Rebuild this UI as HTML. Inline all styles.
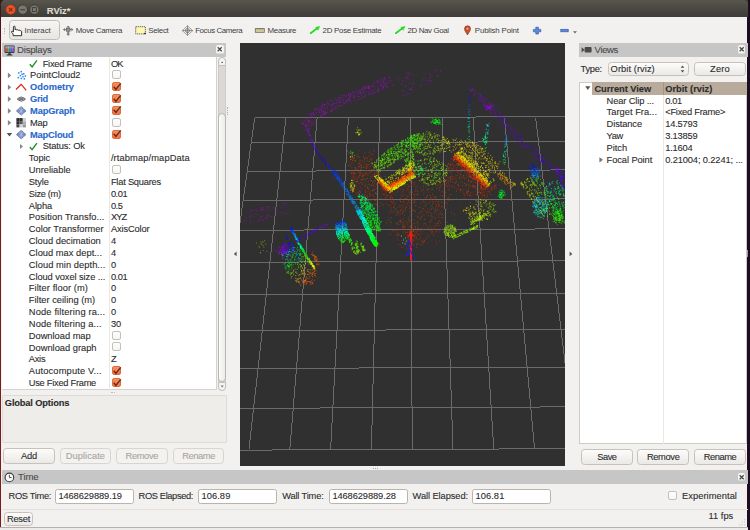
<!DOCTYPE html><html><head><meta charset="utf-8"><title>RViz*</title><style>
*{box-sizing:border-box;margin:0;padding:0}
html,body{width:750px;height:530px;overflow:hidden;background:#f2f1f0}
body{font-family:"Liberation Sans",sans-serif;font-size:9.3px;color:#2b2b2b;position:relative}
.a{position:absolute}
.t{position:absolute;white-space:nowrap;line-height:12px;height:12px;-webkit-text-stroke:0.1px currentColor}
.tb{color:#404040;-webkit-text-stroke:0}
.hdr{position:absolute;background:#c6c6c6;height:13.5px}
.hd{color:#4a4a4a}
.btn{position:absolute;border:1px solid #c6c1ba;border-radius:3.5px;background:linear-gradient(#fcfcfb,#ebe9e6)}
.btn.dis{background:#f3f2f0;border-color:#d8d4ce}
.dt{color:#a8a5a0}
.inp{position:absolute;border:1px solid #b9b4ad;border-radius:2.5px;background:#fff}
.cb{position:absolute;width:8.9px;height:9px;border:1px solid #c4c0ba;border-radius:2px;background:linear-gradient(#fff,#f6f5f3)}
.cb.on{border-color:#de6c3c;background:linear-gradient(#f39063,#ec7441)}
.b{font-weight:bold}
.blue{color:#2869cc;font-weight:bold}
</style></head><body>
<div class="a" style="left:0;top:0;width:1.4px;height:530px;background:linear-gradient(#4c1012,#7a1c1c 30%)"></div>
<div class="a" style="left:747.4px;top:0;width:3px;height:530px;background:#1c0d22"></div>
<div class="a" style="left:0;top:527.3px;width:748px;height:3px;background:#ecebea;border-top:1px solid #b4b2ae"></div>
<div class="a" style="left:0;top:0;width:748px;height:5px;background:#3b3833"></div>
<div class="a" style="left:0;top:0;width:3px;height:4px;background:#3a1515"></div>
<div class="a" style="left:1px;top:0.4px;width:746.8px;height:16.7px;background:linear-gradient(#57554c,#3d3c37);border-radius:4px 4px 0 0"></div>
<svg class="a" style="left:0;top:0" width="60" height="18" viewBox="0 0 60 18"><circle cx="10.7" cy="9.6" r="4.9" fill="#e9542a" stroke="#8c3317" stroke-width="0.7"/><path d="M8.9 7.8l3.6 3.6M12.5 7.8l-3.6 3.6" stroke="#7a2a10" stroke-width="1.1"/><circle cx="22.7" cy="9.6" r="4.7" fill="#7a776f" stroke="#33322e" stroke-width="0.7"/><path d="M20.4 9.7h4.6" stroke="#3e3d39" stroke-width="1.1"/><circle cx="34.4" cy="9.6" r="4.7" fill="#7a776f" stroke="#33322e" stroke-width="0.7"/><rect x="32.4" y="7.6" width="4" height="4" fill="none" stroke="#3e3d39" stroke-width="0.9"/></svg>
<div class="t b" style="left:46.8px;top:4.60px;font-size:9.4px;letter-spacing:-0.005px;color:#dfdbd2;">RViz*</div>
<div class="a" style="left:4.2px;top:27.6px;width:2px;height:6px;border-left:1px dotted #bdb9b3"></div>
<div class="btn" style="left:9.2px;top:20.3px;width:50.6px;height:20.2px;border-color:#c2beb7;background:linear-gradient(#f6f5f3,#e8e6e2)"></div>
<div class="t tb" style="left:24.6px;top:24.70px;font-size:7.9px;letter-spacing:-0.016px;">Interact</div>
<div class="t tb" style="left:75.8px;top:24.70px;font-size:7.9px;letter-spacing:-0.297px;">Move Camera</div>
<div class="t tb" style="left:148.2px;top:24.70px;font-size:7.9px;letter-spacing:-0.273px;">Select</div>
<div class="t tb" style="left:195.2px;top:24.70px;font-size:7.9px;letter-spacing:-0.396px;">Focus Camera</div>
<div class="t tb" style="left:267.6px;top:24.70px;font-size:7.9px;letter-spacing:-0.300px;">Measure</div>
<div class="t tb" style="left:322.6px;top:24.70px;font-size:7.9px;letter-spacing:-0.272px;">2D Pose Estimate</div>
<div class="t tb" style="left:407.6px;top:24.70px;font-size:7.9px;letter-spacing:-0.379px;">2D Nav Goal</div>
<div class="t tb" style="left:474.8px;top:24.70px;font-size:7.9px;letter-spacing:-0.159px;">Publish Point</div>
<svg class="a" style="left:0;top:18px" width="600" height="25" viewBox="0 18 600 25">
<!-- hand -->
<path d="M13.4 27c0-1.100 1.700-1.100 1.700 0v3c.2-.7 1.600-.7 1.700.1.200-.6 1.600-.5 1.700.3.300-.5 1.500-.4 1.600.5.400-.4 1.500-.2 1.500.8v4h-8.500v-1.700l-1.500-1.700c-.5-.9.500-1.600 1.100-1l.7.800z" fill="#fff" stroke="#1c1c1c" stroke-width="0.9" stroke-linejoin="round"/>
<!-- move camera -->
<g fill="none" stroke="#6a6a6a" stroke-width="0.9">
<path d="M68.200 26.200v9M63.600 29.600h9.200"/>
<path d="M66.800 27.600l1.400-1.600 1.400 1.600M66.800 33.800l1.400 1.600 1.400-1.600M65 28.400l-1.500 1.200 1.500 1.200M71.400 28.400l1.500 1.200-1.500 1.200"/>
<rect x="66.400" y="28.200" width="3.600" height="3" fill="#9a9a9a" stroke="#5a5a5a" stroke-width="0.7"/>
<path d="M67 33h2.400" stroke="#5a5a5a"/>
</g>
<!-- select -->
<rect x="135.700" y="26.700" width="9.700" height="7.200" fill="#fdf6b4" stroke="#4a4a3a" stroke-width="0.8" stroke-dasharray="1.300 0.700"/>
<rect x="144.200" y="32.800" width="1.600" height="1.400" fill="#222"/>
<!-- focus camera -->
<g fill="none" stroke="#777" stroke-width="0.8">
<path d="M187.500 25.800l5.200 4.800-5.200 4.800-5.200-4.800z" stroke="#8a8a8a"/>
<path d="M187.500 25.600v10M182 30.600h11"/>
<circle cx="187.500" cy="30.600" r="2" stroke="#666"/>
</g>
<!-- measure -->
<rect x="255.300" y="28.600" width="9" height="3.700" fill="#d9d2a4" stroke="#6b6858" stroke-width="0.8"/>
<path d="M257.200 28.800v1.600M259 28.800v1.600M260.800 28.800v1.600M262.600 28.800v1.600" stroke="#6b6858" stroke-width="0.5"/>
<!-- green arrows -->
<g stroke="#1fd81f" stroke-width="1.700" fill="#1fd81f" stroke-linecap="round">
<path d="M310.600 33.200l6.400-4.800"/><path d="M319.400 26.600l-3.600.8 2 2.600z" stroke-width="0.600"/>
<path d="M395.800 33.200l6.400-4.800"/><path d="M404.600 26.600l-3.600.8 2 2.600z" stroke-width="0.600"/>
</g>
<!-- publish point pin -->
<path d="M467.500 35c-1.200-2.600-3-4-3-6.200a3 3 0 0 1 6 0c0 2.200-1.800 3.600-3 6.200z" fill="#c8502c" stroke="#7a2c14" stroke-width="0.600"/>
<circle cx="467.500" cy="28.700" r="1.100" fill="#f0a080"/>
<!-- plus -->
<path d="M535.800 27.200h2.600v2.200h2.400v2.400h-2.400v2.200h-2.600v-2.200h-2.400v-2.400h2.400z" fill="#5b8ad6" stroke="#2f5fb0" stroke-width="0.700"/>
<!-- minus -->
<rect x="560.800" y="29.300" width="7.400" height="2.500" fill="#5b8ad6" stroke="#2f5fb0" stroke-width="0.700"/>
<path d="M573 31.200h4l-2 2.400z" fill="#6a6a6a"/>
</svg>

<div class="hdr" style="left:2px;top:43px;width:224px"></div>
<div class="t hd" style="left:17.0px;top:43.80px;font-size:9.6px;letter-spacing:-0.208px;">Displays</div>
<svg class="a" style="left:3.6px;top:45.2px" width="11" height="11" viewBox="0 0 11 11">
<rect x="0.5" y="0.5" width="10" height="7.4" rx="0.8" fill="#2e2e2e"/>
<rect x="1.2" y="1.2" width="2.2" height="6" fill="#d6505a"/><rect x="3.4" y="1.2" width="2.2" height="6" fill="#58b868"/><rect x="5.6" y="1.2" width="2.200" height="6" fill="#5878d6"/><rect x="7.800" y="1.2" width="2" height="6" fill="#9a58d0"/>
<rect x="1.2" y="1.2" width="8.6" height="2.2" fill="#fff" fill-opacity="0.28"/>
<path d="M4.2 8.2h2.6v1.200H4.200zM2.600 9.600h5.800v1H2.600z" fill="#2e2e2e"/></svg>

<div class="a" style="left:216.4px;top:45.3px;width:7.4px;height:8.8px;background:#f5f4f3;border-radius:2px;border-bottom:1px solid #dddbd7"></div>
<svg class="a" style="left:216.4px;top:45.3px" width="7.4" height="9" viewBox="0 0 7.4 9"><path d="M1.700 2.200l4 4M5.700 2.200l-4 4" stroke="#484848" stroke-width="1.25"/></svg>
<div class="a" style="left:2px;top:57px;width:215px;height:333px;background:#fff;border-right:1px solid #d5d2cd;border-bottom:1px solid #d5d2cd"></div>
<div class="a" style="left:109px;top:57px;width:1px;height:332.5px;background:#e9e8e5"></div>
<div class="a" style="left:218px;top:57.2px;width:8.2px;height:333.6px;border:1px solid #cfccc8;border-radius:4.2px;background:#dad9d7"></div>
<div class="a" style="left:218px;top:57.2px;width:8.2px;height:9px;border:1px solid #c3c0bb;border-radius:4.2px 4.2px 0 0;background:#f4f3f2"></div>
<div class="a" style="left:218px;top:113.4px;width:8.2px;height:268.4px;border:1px solid #b9b6b1;border-radius:4.2px;background:linear-gradient(90deg,#fbfbfa,#ecebe9)"></div>
<div class="a" style="left:218px;top:381.6px;width:8.2px;height:9.2px;border:1px solid #c3c0bb;border-radius:0 0 4.2px 4.2px;background:#f4f3f2"></div>
<svg class="a" style="left:218px;top:57px" width="9" height="335" viewBox="0 0 9 335"><path d="M3.4 5.4h1.6" stroke="#555" stroke-width="1"/><path d="M2.6 328.6l1.6 1.8 1.6-1.8z" fill="#777"/></svg>
<div class="t " style="left:42.7px;top:57.60px;letter-spacing:-0.263px;">Fixed Frame</div>
<div class="t " style="left:110.9px;top:57.60px;letter-spacing:-0.869px;">OK</div>
<div class="t " style="left:30.1px;top:69.43px;letter-spacing:-0.023px;">PointCloud2</div>
<div class="cb " style="left:112.2px;top:70.33px"></div>
<div class="t blue" style="left:30.1px;top:81.27px;letter-spacing:-0.015px;">Odometry</div>
<div class="cb on" style="left:112.2px;top:82.17px"></div>
<svg class="a" style="left:112.2px;top:81.7px" width="11" height="10" viewBox="0 0 11 10"><path d="M1.8 4.8l2.1 2.6 4.8-6" fill="none" stroke="#662c16" stroke-width="1.4"/></svg>
<div class="t blue" style="left:30.1px;top:93.10px;letter-spacing:-0.306px;">Grid</div>
<div class="cb on" style="left:112.2px;top:94.00px"></div>
<svg class="a" style="left:112.2px;top:93.5px" width="11" height="10" viewBox="0 0 11 10"><path d="M1.8 4.8l2.1 2.6 4.8-6" fill="none" stroke="#662c16" stroke-width="1.4"/></svg>
<div class="t blue" style="left:30.1px;top:104.93px;letter-spacing:-0.173px;">MapGraph</div>
<div class="cb on" style="left:112.2px;top:105.83px"></div>
<svg class="a" style="left:112.2px;top:105.3px" width="11" height="10" viewBox="0 0 11 10"><path d="M1.8 4.8l2.1 2.6 4.8-6" fill="none" stroke="#662c16" stroke-width="1.4"/></svg>
<div class="t " style="left:30.1px;top:116.77px;letter-spacing:-0.231px;">Map</div>
<div class="cb " style="left:112.2px;top:117.67px"></div>
<div class="t blue" style="left:30.1px;top:128.60px;letter-spacing:-0.217px;">MapCloud</div>
<div class="cb on" style="left:112.2px;top:129.50px"></div>
<svg class="a" style="left:112.2px;top:129.0px" width="11" height="10" viewBox="0 0 11 10"><path d="M1.8 4.8l2.1 2.6 4.8-6" fill="none" stroke="#662c16" stroke-width="1.4"/></svg>
<div class="t " style="left:42.7px;top:140.43px;letter-spacing:-0.131px;">Status: Ok</div>
<div class="t " style="left:28.8px;top:152.26px;letter-spacing:-0.081px;">Topic</div>
<div class="t " style="left:110.9px;top:152.26px;letter-spacing:0.119px;">/rtabmap/mapData</div>
<div class="t " style="left:28.8px;top:164.10px;letter-spacing:0.004px;">Unreliable</div>
<div class="cb " style="left:112.2px;top:165.00px"></div>
<div class="t " style="left:28.8px;top:175.93px;letter-spacing:-0.134px;">Style</div>
<div class="t " style="left:110.9px;top:175.93px;letter-spacing:-0.218px;">Flat Squares</div>
<div class="t " style="left:28.8px;top:187.76px;letter-spacing:-0.326px;">Size (m)</div>
<div class="t " style="left:110.9px;top:187.76px;letter-spacing:-0.452px;">0.01</div>
<div class="t " style="left:28.8px;top:199.60px;letter-spacing:-0.116px;">Alpha</div>
<div class="t " style="left:110.9px;top:199.60px;letter-spacing:-0.479px;">0.5</div>
<div class="t " style="left:28.8px;top:211.43px;letter-spacing:0.067px;">Position Transfo...</div>
<div class="t " style="left:110.9px;top:211.43px;letter-spacing:-0.865px;">XYZ</div>
<div class="t " style="left:28.8px;top:223.26px;letter-spacing:-0.013px;">Color Transformer</div>
<div class="t " style="left:110.9px;top:223.26px;letter-spacing:-0.120px;">AxisColor</div>
<div class="t " style="left:28.8px;top:235.09px;letter-spacing:0.010px;">Cloud decimation</div>
<div class="t " style="left:110.9px;top:235.09px;">4</div>
<div class="t " style="left:28.8px;top:246.93px;letter-spacing:0.025px;">Cloud max dept...</div>
<div class="t " style="left:110.9px;top:246.93px;">4</div>
<div class="t " style="left:28.8px;top:258.76px;letter-spacing:0.058px;">Cloud min depth...</div>
<div class="t " style="left:110.9px;top:258.76px;">0</div>
<div class="t " style="left:28.8px;top:270.59px;letter-spacing:-0.077px;">Cloud voxel size ...</div>
<div class="t " style="left:110.9px;top:270.59px;letter-spacing:-0.452px;">0.01</div>
<div class="t " style="left:28.8px;top:282.43px;letter-spacing:0.084px;">Filter floor (m)</div>
<div class="t " style="left:110.9px;top:282.43px;">0</div>
<div class="t " style="left:28.8px;top:294.26px;letter-spacing:0.015px;">Filter ceiling (m)</div>
<div class="t " style="left:110.9px;top:294.26px;">0</div>
<div class="t " style="left:28.8px;top:306.09px;letter-spacing:0.155px;">Node filtering ra...</div>
<div class="t " style="left:110.9px;top:306.09px;">0</div>
<div class="t " style="left:28.8px;top:317.93px;letter-spacing:0.143px;">Node filtering a...</div>
<div class="t " style="left:110.9px;top:317.93px;letter-spacing:-0.172px;">30</div>
<div class="t " style="left:28.8px;top:329.76px;letter-spacing:-0.010px;">Download map</div>
<div class="cb " style="left:112.2px;top:330.66px"></div>
<div class="t " style="left:28.8px;top:341.59px;">Download graph</div>
<div class="cb " style="left:112.2px;top:342.49px"></div>
<div class="t " style="left:28.8px;top:353.43px;letter-spacing:-0.270px;">Axis</div>
<div class="t " style="left:110.9px;top:353.43px;">Z</div>
<div class="t " style="left:28.8px;top:365.26px;letter-spacing:0.158px;">Autocompute V...</div>
<div class="cb on" style="left:112.2px;top:366.16px"></div>
<svg class="a" style="left:112.2px;top:365.7px" width="11" height="10" viewBox="0 0 11 10"><path d="M1.8 4.8l2.1 2.6 4.8-6" fill="none" stroke="#662c16" stroke-width="1.4"/></svg>
<div class="t " style="left:28.8px;top:377.09px;letter-spacing:-0.273px;">Use Fixed Frame</div>
<div class="cb on" style="left:112.2px;top:377.99px"></div>
<svg class="a" style="left:112.2px;top:377.5px" width="11" height="10" viewBox="0 0 11 10"><path d="M1.8 4.8l2.1 2.6 4.8-6" fill="none" stroke="#662c16" stroke-width="1.4"/></svg>
<svg class="a" style="left:0;top:0" width="110" height="395" viewBox="0 0 110 395">
<path d="M29.800 64.2l2.300 2.700 4.800-6.600" fill="none" stroke="#1f8f24" stroke-width="1.35"/>
<path d="M29.800 147.0l2.300 2.700 4.800-6.600" fill="none" stroke="#1f8f24" stroke-width="1.35"/>
<path d="M7.900 72.6v5.600l3.300-2.800z" fill="#858585"/>
<path d="M7.900 84.5v5.600l3.300-2.800z" fill="#858585"/>
<path d="M7.900 96.3v5.600l3.300-2.800z" fill="#858585"/>
<path d="M7.900 108.1v5.600l3.300-2.800z" fill="#858585"/>
<path d="M7.900 120.0v5.600l3.300-2.800z" fill="#858585"/>
<path d="M6.800 133.0h5.400l-2.700 3.400z" fill="#505050"/>
<path d="M20 143.9v5l3-2.500z" fill="#858585"/>
<rect x="18.0" y="72.2" width="1.5" height="1.5" fill="#2f86ea"/>
<rect x="20.5" y="70.9" width="1.5" height="1.5" fill="#2f86ea"/>
<rect x="23.0" y="73.1" width="1.5" height="1.5" fill="#2f86ea"/>
<rect x="19.6" y="74.9" width="1.5" height="1.5" fill="#2f86ea"/>
<rect x="22.2" y="75.9" width="1.5" height="1.5" fill="#2f86ea"/>
<rect x="17.6" y="76.9" width="1.5" height="1.5" fill="#2f86ea"/>
<rect x="24.6" y="75.3" width="1.5" height="1.5" fill="#2f86ea"/>
<rect x="20.6" y="77.7" width="1.5" height="1.5" fill="#2f86ea"/>
<rect x="23.6" y="78.1" width="1.5" height="1.5" fill="#2f86ea"/>
<rect x="21.4" y="73.5" width="1.5" height="1.5" fill="#2f86ea"/>
<path d="M16 89.5L21.300 84.3L26.200 90.3" fill="none" stroke="#e0241c" stroke-width="1.2" stroke-linejoin="round"/>
<ellipse cx="21.300" cy="99.1" rx="4.100" ry="2.200" fill="#8a8a8a" fill-opacity="0.6"/>
<g stroke="#4e4e4e" stroke-width="0.7" fill="none"><path d="M17.200 99.1l4.100-2.300 4.100 2.300-4.100 2.300z"/><path d="M19.200 97.9l4.100 2.300M23.300 97.9l-4.100 2.300"/></g>
<path d="M16.400 110.9l4.800-4.300 4.800 4.300-4.800 4.300z" fill="#7a90c4" stroke="#4a5e94" stroke-width="0.6"/>
<path d="M18.800 108.8l4.800 4.300M23.600 108.8l-4.800 4.300M21.200 106.7v8.400" stroke="#cbd5ec" stroke-width="0.5" fill="none"/>
<path d="M16.400 134.6l4.800-4.300 4.800 4.300-4.800 4.300z" fill="#7a90c4" stroke="#4a5e94" stroke-width="0.6"/>
<path d="M18.800 132.4l4.800 4.300M23.600 132.4l-4.800 4.300M21.200 130.4v8.400" stroke="#cbd5ec" stroke-width="0.5" fill="none"/>
<rect x="16.4" y="118.1" width="3.200" height="3.100" fill="#2a2a2a"/>
<rect x="19.6" y="118.1" width="3.200" height="3.100" fill="#2a2a2a"/>
<rect x="22.8" y="118.1" width="3.200" height="3.100" fill="#cfcfcf"/>
<rect x="16.4" y="121.2" width="3.200" height="3.100" fill="#2a2a2a"/>
<rect x="19.6" y="121.2" width="3.200" height="3.100" fill="#555"/>
<rect x="22.8" y="121.2" width="3.200" height="3.100" fill="#b0b0b0"/>
<rect x="16.4" y="124.3" width="3.200" height="3.100" fill="#444"/>
<rect x="19.6" y="124.3" width="3.200" height="3.100" fill="#d0d0d0"/>
<rect x="22.8" y="124.3" width="3.200" height="3.100" fill="#9a9a9a"/>
</svg>
<div class="a" style="left:2px;top:395.4px;width:224.6px;height:48px;background:#efedea;border:1px solid #dedbd6;border-radius:1px"></div>
<div class="t b" style="left:4.8px;top:397.40px;letter-spacing:-0.153px;">Global Options</div>
<div class="a" style="left:111px;top:392.2px;width:4px;height:2px;border-top:1px dotted #bbb"></div>
<div class="btn " style="left:3.4px;top:448.2px;width:51.2px;height:15.8px"></div>
<div class="t " style="left:20.9px;top:450.00px;letter-spacing:-0.116px;">Add</div>
<div class="btn dis" style="left:59.6px;top:448.2px;width:51.6px;height:15.8px"></div>
<div class="t dt" style="left:65.7px;top:450.00px;letter-spacing:0.070px;">Duplicate</div>
<div class="btn dis" style="left:116.0px;top:448.2px;width:51.6px;height:15.8px"></div>
<div class="t dt" style="left:125.5px;top:450.00px;letter-spacing:-0.337px;">Remove</div>
<div class="btn dis" style="left:172.8px;top:448.2px;width:51.6px;height:15.8px"></div>
<div class="t dt" style="left:182.3px;top:450.00px;letter-spacing:-0.423px;">Rename</div>
<div class="a" style="left:240px;top:43px;width:325.4px;height:423.2px;background:#303030;overflow:hidden"><svg class="a" style="left:0;top:0" width="325.4" height="423.2" viewBox="240 43 325.4 423.2">
<path d="M254.8 118.0 L566.8 116.6M251.3 143.0 L570.5 141.6M247.3 171.3 L574.7 169.9M243.3 200.3 L579.0 198.9M239.0 230.3 L583.5 228.8M234.6 262.3 L588.2 260.7M230.0 294.6 L593.1 293.0M225.0 330.7 L598.4 329.1M219.7 368.6 L604.1 367.0M214.1 408.5 L610.0 406.7M208.2 450.3 L616.2 448.5M254.7 118.0 L208.2 449.4M285.9 118.0 L249.0 449.4M317.1 118.0 L289.8 449.4M348.4 118.0 L330.6 449.4M379.6 118.0 L371.4 449.4M410.8 118.0 L412.2 449.4M442.0 118.0 L453.0 449.4M473.2 118.0 L493.8 449.4M504.5 118.0 L534.6 449.4M535.7 118.0 L575.4 449.4M566.9 118.0 L616.2 449.4" fill="none" stroke="#6b6b6b" stroke-width="1" shape-rendering="crispEdges"/>
<g stroke-width="0.95" fill="none" stroke-opacity="0.62">
<path stroke="#c60000" d="M364.1 190.9h0.9M378.3 178.7h0.9M356.5 175.8h0.9M364.8 191.6h0.9M369.9 157.4h0.9M354.2 162h0.9M375 180.8h0.9M354.6 171.6h0.9M359.7 171.7h0.9M357.9 192.6h0.9M385.1 195.8h0.9M351 174.8h0.9M362.9 161.2h0.9M368 167.3h0.9M385.9 204.2h0.9M391.8 194.5h0.9M375.1 164.2h0.9M380.7 182.9h0.9M370.8 169.6h0.9M352.9 158.3h0.9M351.9 175.9h0.9M360.5 175.9h0.9M355.5 167.9h0.9M397 240.2h0.9M396 235.5h0.9M446.3 191h0.9M447.2 185.5h0.9M412.9 243.3h0.9M442.8 217.2h0.9M439.7 207.1h0.9M436.2 230.4h0.9M404.9 227h0.9M400.5 201.8h0.9M442.3 200.4h0.9M423 231h0.9M399 206.5h0.9M405.1 201.6h0.9M426.4 238.1h0.9M391.7 193.7h0.9M416.5 218.7h0.9M405.3 211.3h0.9M425.1 198.1h0.9M425.4 227.8h0.9M423.3 202.5h0.9M459.6 172.9h0.9M456 163.6h0.9M471.5 195.3h0.9M489 188.1h0.9M475.2 187.7h0.9M473.7 196.1h0.9M446.5 183.3h0.9M462.9 194.1h0.9M468.9 195.7h0.9M480.5 187.1h0.9M482.8 190h0.9M453.4 164.9h0.9M482.7 191.9h0.9M447 171h0.9M454.2 170.9h0.9M479.7 197.8h0.9M480.6 197.8h0.9M462 164h0.9M472.7 194.4h0.9M471.6 197h0.9M411.1 185.4h0.9M392.9 192.7h0.9M437.5 240.7h0.9M433.9 202.7h0.9M359.6 187h0.9M418.5 198.8h0.9M468.2 209.4h0.9M410.5 180.9h0.9M404.5 244.3h0.9"/>
<path stroke="#ff0000" d="M405.2 178.4h0.9M412.7 173.3h0.9M395.1 184.6h0.9M400.2 178.5h0.9M405 175.6h0.9M388.2 186.2h0.9M399.4 179.4h0.9M401.7 177.7h0.9M391.4 184.3h0.9M406.6 174.5h0.9M393.1 183.4h0.9M399.4 179.3h0.9M394.5 181.9h0.9M456.4 160.1h0.9M472.1 175.2h0.9M453.1 156.5h0.9M463.8 167.3h0.9M475.6 178h0.9M482.6 185.6h0.9M477.1 179.7h0.9M459.1 162.8h0.9M480.6 183.2h0.9M452.8 156.3h0.9M481.1 184h0.9M467.3 170.1h0.9M482.6 185.5h0.9M462.9 165.6h0.9M458.3 161.5h0.9"/>
<path stroke="#c61a00" d="M372.1 184.2h0.9M382.2 191.6h0.9M372.4 154.3h0.9M362.4 200.1h0.9M380.5 184h0.9M370.7 174.6h0.9M357 191h0.9M361.4 164.3h0.9M370.6 158.5h0.9M391.7 197.2h0.9M357.9 185.2h0.9M383.5 179.7h0.9M367.3 191.4h0.9M371.7 189.1h0.9M366.1 168h0.9M383.1 183.9h0.9M391 201.8h0.9M370.1 152.2h0.9M377 175.1h0.9M366.6 197.5h0.9M365.8 170.3h0.9M386.3 188.5h0.9M364.6 185.6h0.9M352.6 173.7h0.9M359.8 187.2h0.9M371.1 159.8h0.9M359.1 191.3h0.9M382.6 193.5h0.9M362.7 167.6h0.9M371.7 172.3h0.9M357.9 172h0.9M385.1 194.6h0.9M370.9 199.2h0.9M364.7 158.9h0.9M367.1 164.9h0.9M356.7 178.1h0.9M359.2 171.4h0.9M375.9 198.1h0.9M361.5 196.4h0.9M392.6 183.8h0.9M382.7 190.1h0.9M390.1 206h0.9M372.8 191.4h0.9M353.9 177.6h0.9M365.1 200.6h0.9M364.1 186.1h0.9M369.3 154.3h0.9M373.1 185.4h0.9M373.9 173.3h0.9M355.4 188.8h0.9M349.9 163.7h0.9M385.6 200.7h0.9M378.4 174.1h0.9M389.8 204.6h0.9M366 192.7h0.9M384.5 198.6h0.9M376.5 172.6h0.9M379.6 193.2h0.9M387.2 181.9h0.9M359.2 177h0.9M360.2 160.9h0.9M350.7 168h0.9M380 190.1h0.9M352.9 175.8h0.9M368.7 191.8h0.9M360.2 175.1h0.9M372.8 194.6h0.9M348.9 161.1h0.9M386.2 184.5h0.9M365.9 196.2h0.9M389 184.1h0.9M365.1 190.2h0.9M373.4 180.6h0.9M364 191.1h0.9M369.8 180.7h0.9M364.9 189.6h0.9M363.8 165.1h0.9M361.3 167.9h0.9M372.4 166.6h0.9M353.8 188.5h0.9M359 183.8h0.9M383.9 191.9h0.9M377.5 189.7h0.9M364.2 179.1h0.9M354.1 176h0.9M368 175.4h0.9M381.3 194.1h0.9M371.2 202h0.9M370.3 194.3h0.9M363.2 155.7h0.9M364.9 186.1h0.9M359.1 175.1h0.9M353.6 152.6h0.9M356.4 179.2h0.9M356.5 179h0.9M356.1 157h0.9M360.5 163.4h0.9M349.6 150.3h0.9M352.1 156.7h0.9M366.2 174.3h0.9M349.1 162.7h0.9M352.3 173.3h0.9M358.8 150.5h0.9M424.8 223.6h0.9M397.9 188.7h0.9M448.1 197.4h0.9M431.5 230.9h0.9M427.3 188.9h0.9M400.2 213.6h0.9M415.7 185.5h0.9M419.4 220.2h0.9M399.5 221.1h0.9M448 196.5h0.9M390.2 193.1h0.9M389.5 213.8h0.9M436.1 205.4h0.9M436.9 202.5h0.9M424 197.4h0.9M389 204.5h0.9M420.6 180.8h0.9M397.5 211.5h0.9M440.2 212h0.9M442.4 204h0.9M422.8 225.1h0.9M398.4 191.1h0.9M426.5 202.7h0.9M437.4 223.7h0.9M414.9 206.1h0.9M444.3 196.8h0.9M449.2 189.1h0.9M435.4 197h0.9M428.8 195.3h0.9M422 213.4h0.9M417.8 194.8h0.9M438.7 213.4h0.9M438.8 210.4h0.9M431.4 230.9h0.9M417.9 177.3h0.9M404.5 189.3h0.9M413.1 185.3h0.9M440.1 195.7h0.9M399.7 245.1h0.9M431 199.5h0.9M427.8 195.5h0.9M431.8 182.2h0.9M402 191.3h0.9M398.9 224.4h0.9M413 186h0.9M403.5 247.4h0.9M395.7 201.6h0.9M407.7 205h0.9M396.1 229.1h0.9M412.5 200.4h0.9M412.2 243.1h0.9M437.4 216.2h0.9M394.7 231.1h0.9M389.6 195.9h0.9M447.1 181.8h0.9M420.2 237.1h0.9M411.3 245.7h0.9M436.6 180.1h0.9M416 178.9h0.9M396.5 186.9h0.9M441.6 215h0.9M448.7 190.8h0.9M423.3 226.7h0.9M419.7 213.4h0.9M401.4 209.2h0.9M415 193.9h0.9M390.4 205.4h0.9M439.1 178.7h0.9M411.1 184.9h0.9M425.4 223.7h0.9M438.3 180.4h0.9M428.5 211.4h0.9M431.4 233.2h0.9M438.7 177.7h0.9M413.5 239.8h0.9M406.3 203.6h0.9M392.4 228.8h0.9M414.5 195h0.9M390.4 213.6h0.9M436.5 181.4h0.9M425.6 185h0.9M402.9 196.6h0.9M417.7 190.5h0.9M427.1 243.3h0.9M424.7 240.8h0.9M430.4 230h0.9M432.5 216.3h0.9M434.2 182.8h0.9M390 193.5h0.9M407.3 204.5h0.9M388.6 195.4h0.9M408.9 189.5h0.9M393.8 232.2h0.9M389.9 200.6h0.9M408.3 196.6h0.9M429 203.5h0.9M423.6 239.3h0.9M441 195.2h0.9M408.2 201.7h0.9M407.1 223h0.9M412.8 200.2h0.9M404.3 235.8h0.9M423.6 242.4h0.9M445.4 202.1h0.9M430.3 240.2h0.9M408.5 240.1h0.9M435.4 226h0.9M434.9 202.6h0.9M425.7 213.8h0.9M440.8 184.4h0.9M422.9 195.3h0.9M426.7 234.4h0.9M443.4 207.4h0.9M423.2 200.4h0.9M444.3 188.5h0.9M417 234.3h0.9M442 190.2h0.9M410.2 195.3h0.9M408 191.3h0.9M436.5 208.4h0.9M421 241.4h0.9M443 175.7h0.9M423.4 188.1h0.9M399.8 235.3h0.9M437.2 225.5h0.9M393.6 200.3h0.9M403.4 222.1h0.9M423.7 216h0.9M421.5 178.1h0.9M489.6 188.5h0.9M456.6 189.1h0.9M457 171h0.9M457.8 165h0.9M458.9 192.8h0.9M449.4 170.9h0.9M469.7 180.1h0.9M486.9 196.5h0.9M448.3 169.9h0.9M449.1 185.7h0.9M452.3 163.9h0.9M446.7 182h0.9M483 189.8h0.9M446.5 179.4h0.9M453.4 179.7h0.9M454.7 168.3h0.9M451.1 165.4h0.9M482.3 192.6h0.9M475 182.4h0.9M498.8 184.8h0.9M450.2 163.7h0.9M453.8 185.9h0.9M480.1 194.8h0.9M454 177h0.9M464.4 186.2h0.9M463.8 179.4h0.9M454 176h0.9M456.1 179h0.9M471.1 197.1h0.9M448.6 178h0.9M466.1 183.4h0.9M472.2 185.1h0.9M445.8 179.9h0.9M455.2 166.5h0.9M471.6 192.7h0.9M485 185.6h0.9M448.8 167.2h0.9M474.4 191.1h0.9M480.5 193.3h0.9M453.2 177.5h0.9M452.8 160.2h0.9M480.7 190.7h0.9M478.5 192.9h0.9M476.3 189.5h0.9M466.4 191.5h0.9M470.1 192.8h0.9M475.6 189.5h0.9M463.8 194h0.9M470 176.4h0.9M445.9 181.7h0.9M486.2 197.7h0.9M485.2 197.2h0.9M470.2 177.8h0.9M467 192h0.9M461.6 176.6h0.9M458.4 173.5h0.9M482.6 196.1h0.9M450.2 164.8h0.9M464.6 167.6h0.9M454.8 159.5h0.9M486.4 196.5h0.9M456.6 169.1h0.9M475 188.2h0.9M484.4 196.2h0.9M484 196h0.9M476.3 194.5h0.9M496 188.1h0.9M448.5 183.6h0.9M483.9 192.7h0.9M474.7 185.7h0.9M467.9 181.5h0.9M463.3 176.3h0.9M486.8 195.4h0.9M466 174.6h0.9M470.3 195.8h0.9M473 187.8h0.9M485.1 188.3h0.9M459.6 187.4h0.9M461.8 168.4h0.9M451.2 168.1h0.9M462.4 189.9h0.9M450.1 161.7h0.9M493.4 187.5h0.9M458.8 190.6h0.9M477.8 189.7h0.9M452.1 174.4h0.9M483 194.2h0.9M455.6 170.4h0.9M464.3 166.1h0.9M495.4 188.2h0.9M452.8 169.2h0.9M445.4 176.4h0.9M469.6 187.6h0.9M386.3 203.3h0.9M456.2 178.2h0.9M352.9 174.7h0.9M415.4 201.4h0.9M473.7 182.8h0.9M406 191.4h0.9M450.9 208h0.9M441 229.3h0.9M463.7 198.5h0.9M443.7 186.1h0.9M386.8 193.8h0.9M436.1 196.5h0.9M367.4 170.6h0.9M440.6 192.3h0.9M432.1 201.3h0.9M452.5 176.6h0.9M402.7 182.9h0.9M445.3 202.9h0.9M352 192h0.9M456.2 171.3h0.9M403.7 205.6h0.9M458.7 185.1h0.9M396.6 230.5h0.9M367.2 197.2h0.9M459.1 214h0.9M400.4 189.5h0.9M398.3 189.4h0.9M437.7 236.9h0.9M406.7 203.4h0.9M424.8 237.2h0.9M437.9 174h0.9M432 195.6h0.9M409.3 238.5h0.9M414.2 240.3h0.9M380 187.7h0.9M473.2 194.1h0.9M435.3 240.6h0.9M442.6 175.9h0.9M425 204.7h0.9M387.7 185.6h0.9M377.5 181.3h0.9M407 241.1h0.9M401.2 206.7h0.9M459.1 202.9h0.9M439.4 205.3h0.9M428.3 192.5h0.9M374.4 205.1h0.9M409.9 232h0.9M434 173.4h0.9M388.3 231h0.9M449.9 216.3h0.9M436 200.3h0.9M400.1 218.1h0.9M423.2 174.1h0.9M424 240.4h0.9M406.5 207.7h0.9M372.1 166.3h0.9M421.7 190.3h0.9M380.3 177.2h0.9M352.2 177.4h0.9M377.5 173.6h0.9M459.8 211.6h0.9M403.9 229.7h0.9M417.8 228h0.9M410.5 225.6h0.9M414.2 237.3h0.9M409.8 220.5h0.9M410.8 235.4h0.9M405.7 234.7h0.9M412.2 241.6h0.9M410.7 223.6h0.9M412.1 229.5h0.9M407.3 231.8h0.9M411.2 230.5h0.9M413.7 225.3h0.9M405.7 234.3h0.9M415.6 230.1h0.9M410.7 240.5h0.9M403.1 234.1h0.9M407.3 236.3h0.9M413 219.8h0.9M416 232.8h0.9M411 235.3h0.9M411.7 228.7h0.9M407.3 232h0.9M418.6 234.4h0.9"/>
<path stroke="#ff2100" d="M314.4 271.6h0.9M309.1 274.4h0.9M319 264.5h0.9M311.1 284.7h0.9M410.6 174.4h0.9M398.9 181.1h0.9M393.5 185.5h0.9M410.1 174.7h0.9M408 175.4h0.9M390.2 187.4h0.9M404.4 178.9h0.9M396.4 183h0.9M390.1 186.9h0.9M395.3 184.5h0.9M402.7 179.1h0.9M408.8 174.8h0.9M391.5 186.5h0.9M401.4 180.3h0.9M388 186.6h0.9M399 180.2h0.9M393.1 184.3h0.9M404.5 176.9h0.9M408.2 175.1h0.9M392 184.2h0.9M388.1 186.3h0.9M393 182.9h0.9M391.6 184.5h0.9M398.4 180.5h0.9M410.9 172.2h0.9M395.9 181.7h0.9M389.5 185.8h0.9M404.1 176.1h0.9M386 187.3h0.9M394.9 182.1h0.9M406.5 174.8h0.9M392 184.1h0.9M391.1 184.8h0.9M392.9 183.2h0.9M403.5 177.3h0.9M389.8 185.8h0.9M393.1 183.1h0.9M401.5 178h0.9M403.7 176.3h0.9M405 175.8h0.9M387.7 186.9h0.9M392.7 183h0.9M392.2 184.4h0.9M396.9 180.7h0.9M407.8 174.1h0.9M390.5 185.4h0.9M399.3 180h0.9M391.5 183.9h0.9M407.4 174.1h0.9M410.3 172.2h0.9M388.7 186.1h0.9M398.9 180.7h0.9M403 177h0.9M392.9 183.1h0.9M387.7 187.1h0.9M394.4 182h0.9M389.3 186.2h0.9M407.4 175.1h0.9M390.9 185.3h0.9M401.5 178.3h0.9M407.5 175.1h0.9M393.2 184.1h0.9M410 172.5h0.9M391.2 184.1h0.9M409.6 173.9h0.9M389.3 185.7h0.9M400.6 178.5h0.9M385.8 190.6h0.9M381.5 186.6h0.9M384.5 189.8h0.9M383.7 188.2h0.9M384.7 189.7h0.9M382.7 187.2h0.9M384.8 190h0.9M385.1 189.4h0.9M378.8 182.5h0.9M382.2 186.4h0.9M378.7 183.3h0.9M380.1 185.1h0.9M377.8 182.2h0.9M379.6 184h0.9M384.8 190.3h0.9M469.3 171.1h0.9M485.8 187.7h0.9M476.2 177h0.9M463.6 166.9h0.9M457.6 160.9h0.9M453.6 156.8h0.9M465.6 168.5h0.9M483.3 184.8h0.9M467.1 170.3h0.9M479.2 180.8h0.9M456.8 160.4h0.9M473.8 176.4h0.9M461.7 164.8h0.9M474.9 177.1h0.9M485.6 188.2h0.9M474.9 177.9h0.9M454.2 156.5h0.9M462.9 166.2h0.9M467.6 170.1h0.9M485.2 188h0.9M453 156.6h0.9M458.7 161.2h0.9M478.3 181.4h0.9M476.7 179.9h0.9M458.1 160.9h0.9M479.9 181.1h0.9M458.8 160.7h0.9M469 172.5h0.9M471.7 175h0.9M469.6 171.5h0.9M462.1 164.1h0.9M461.5 164.4h0.9M477.9 180.9h0.9M469.6 171h0.9M463.2 164.8h0.9M477.7 180.8h0.9M459.9 163.3h0.9M468.6 171.1h0.9M477.3 178.9h0.9M477.9 180.3h0.9M455.2 157.5h0.9M470.7 172h0.9M480.5 183.2h0.9M483.4 186.2h0.9M478.3 180.8h0.9M468.2 169.8h0.9M452.9 156.2h0.9M467.1 170h0.9M454.7 157.6h0.9M457.2 160.2h0.9M478.4 180.9h0.9M461.7 165.3h0.9M453 156.8h0.9M462 164.8h0.9M477 178.6h0.9M467.4 169.1h0.9M466.2 169.1h0.9M453.7 156.9h0.9M484 185.5h0.9M476.1 178h0.9M456.9 159.2h0.9M461.1 164.4h0.9M460.9 164.5h0.9M456.5 159.5h0.9M462.2 164.4h0.9M468.6 172h0.9M465.8 170h0.9M456.1 158.5h0.9M459 161.5h0.9M453 157.4h0.9M481.4 188.2h0.9M452.9 159.3h0.9M476.3 180.2h0.9M472.3 178.1h0.9M478.4 184.1h0.9M470.1 177.4h0.9M468.1 175.8h0.9M465.7 170.9h0.9M464.4 168.7h0.9M475.4 178.5h0.9M456 160h0.9M481.2 188.3h0.9M472.7 178.4h0.9M475.7 178.8h0.9M464.3 171.2h0.9M482.2 189.5h0.9M462.5 169.5h0.9M473.8 178.7h0.9M463.5 168.7h0.9M484 188.7h0.9M475.3 179.8h0.9M456.3 158.9h0.9M470 172.7h0.9M479 183.1h0.9M481 188.5h0.9M478.2 181.7h0.9M480.7 185.9h0.9M473.3 177.8h0.9M480.8 187.6h0.9M460.8 163.4h0.9M481.4 184.8h0.9M480.8 186.4h0.9M465.3 170h0.9M463.3 165.8h0.9M469.8 175.1h0.9M477.7 185.5h0.9M461.2 168.7h0.9M473.6 177.6h0.9M483 188.7h0.9M458.7 164.6h0.9"/>
<path stroke="#c63500" d="M369.1 161.8h0.9M369.8 159.5h0.9M364.5 157.9h0.9M356.3 193.6h0.9M359.7 172.5h0.9M381.8 182.6h0.9M361.7 176.7h0.9M356.5 180.7h0.9M359.1 191.2h0.9M365.8 172.4h0.9M374.9 181.2h0.9M358.5 166.5h0.9M367.9 188.1h0.9M372.8 194.7h0.9M376.5 160h0.9M361 199.1h0.9M365 184.2h0.9M379.8 176h0.9M388.8 183.9h0.9M358.3 183.4h0.9M364.3 195.3h0.9M364.9 174.5h0.9M378.4 166.6h0.9M358.1 176.5h0.9M365.2 167.1h0.9M374 174.3h0.9M369.1 164.9h0.9M357.6 189.1h0.9M370 195.6h0.9M373.3 184.8h0.9M351.8 177.1h0.9M354.8 169.8h0.9M391.4 202h0.9M355.9 181.7h0.9M387.9 181h0.9M379.5 171.3h0.9M383.1 181.7h0.9M389.6 188.5h0.9M377.8 185.9h0.9M369.4 171h0.9M383.2 204.7h0.9M355.6 192.7h0.9M380.1 198.2h0.9M367.9 161.5h0.9M358.4 163.2h0.9M361.2 183.3h0.9M368.2 164.5h0.9M370 191h0.9M371.3 169.3h0.9M382.1 205.2h0.9M364 159.8h0.9M364 161.9h0.9M359.1 161.1h0.9M367.7 184.4h0.9M364 157.9h0.9M385.8 191.3h0.9M367 197.9h0.9M378.9 174.6h0.9M353.1 176.9h0.9M353.6 178.9h0.9M371.8 158.3h0.9M386.5 198.8h0.9M374.9 178.1h0.9M364.4 152.9h0.9M391 186.8h0.9M385.1 197.7h0.9M355.1 178.2h0.9M362.4 162.3h0.9M380.2 184h0.9M366.6 181.6h0.9M372.5 185.9h0.9M370.9 154.1h0.9M362.6 199h0.9M362.4 172.9h0.9M363.5 182.2h0.9M362 179.9h0.9M391.2 201.8h0.9M385.7 188.2h0.9M376.4 173h0.9M355.7 169.4h0.9M378.5 195.9h0.9M367.8 173.2h0.9M357.6 165.7h0.9M380.8 197.9h0.9M364.1 159.4h0.9M374.7 175.5h0.9M377.6 188.1h0.9M365 179.7h0.9M390.7 207.7h0.9M390.7 199.5h0.9M376.7 172.9h0.9M374.8 186.5h0.9M366.7 160.8h0.9M368.9 194.8h0.9M374 200.2h0.9M372.2 175.9h0.9M363.2 174.8h0.9M372 154.7h0.9M390.2 189.8h0.9M391.8 199.1h0.9M351.6 172.7h0.9M374.6 151.8h0.9M351.3 179.8h0.9M366.6 175.5h0.9M367.4 173.9h0.9M360.1 173.5h0.9M367 178.3h0.9M368.3 190.1h0.9M358.4 166.9h0.9M372.6 176.8h0.9M347.5 154h0.9M352.8 162.1h0.9M351.4 167.1h0.9M362.5 175.8h0.9M349.8 165.7h0.9M357.3 154.1h0.9M359.3 156.9h0.9M365.7 168.3h0.9M347.8 152.9h0.9M361.1 165.4h0.9M363.4 174.3h0.9M353.3 172h0.9M352.8 173.2h0.9M359 173.8h0.9M357.5 156.8h0.9M359.4 175.5h0.9M365.6 173.5h0.9M356.7 156h0.9M402.6 246.8h0.9M428.2 203.6h0.9M392.9 200.6h0.9M418.1 239.5h0.9M439.3 182.8h0.9M418.8 207.5h0.9M424.6 218.4h0.9M409.9 182.3h0.9M431 232.8h0.9M402.6 211.1h0.9M430.1 221.1h0.9M426.4 190.8h0.9M399.5 214.1h0.9M405.8 182h0.9M429.8 226.8h0.9M438.6 217.2h0.9M392.8 192.9h0.9M420.2 203.4h0.9M436.6 185.2h0.9M412.6 199.6h0.9M405.9 221.1h0.9M410.9 195.9h0.9M420.9 201.3h0.9M397 207h0.9M437.4 223.7h0.9M426.6 212.7h0.9M417.4 242h0.9M416.3 244.8h0.9M412.5 210.4h0.9M420.6 206.8h0.9M426.8 228h0.9M435.6 229.1h0.9M397.6 240h0.9M400.8 209.5h0.9M447.3 198.2h0.9M434.6 233.1h0.9M411.4 240.5h0.9M422.6 215.3h0.9M408.3 218.9h0.9M424.5 210.6h0.9M430.4 214.9h0.9M439.9 180.5h0.9M404.7 198.7h0.9M423.6 193h0.9M396.6 234.4h0.9M410.3 235.1h0.9M419.8 238.7h0.9M431.7 218.7h0.9M400.5 195h0.9M437.9 223.8h0.9M402.2 192h0.9M410.8 206.3h0.9M389 189.7h0.9M405.4 198.6h0.9M447.5 200h0.9M428.2 179.3h0.9M447.7 190.2h0.9M403.6 226.7h0.9M406 196.1h0.9M438 201.3h0.9M390 196.8h0.9M431 183.6h0.9M434 229h0.9M410.7 246.2h0.9M408.4 200.2h0.9M438.8 176.8h0.9M441.9 195.5h0.9M417.2 193.4h0.9M409.7 193.2h0.9M401 193.2h0.9M439.8 186.7h0.9M444.2 192.1h0.9M403.6 203h0.9M401.6 205.1h0.9M429.3 212.3h0.9M414.5 210.3h0.9M407.3 184.5h0.9M438.2 215.3h0.9M448.4 184.3h0.9M402.8 195.2h0.9M412.8 223.9h0.9M399.6 185.7h0.9M439.6 217.5h0.9M402.7 209.3h0.9M411.1 209.3h0.9M426.8 175.9h0.9M414.4 184.8h0.9M409.1 211.6h0.9M427.3 184.7h0.9M409.5 214.9h0.9M425.6 186.6h0.9M435.7 205.4h0.9M405.1 244.6h0.9M440.5 212.9h0.9M414.8 191.5h0.9M430.5 221.9h0.9M397.3 188h0.9M408.5 200h0.9M431.2 228.2h0.9M419.7 244.4h0.9M395.8 234.3h0.9M419.9 188h0.9M433.1 234.9h0.9M435.7 231.6h0.9M411.9 209.4h0.9M414.3 199.6h0.9M430.6 213.4h0.9M435.6 183.9h0.9M446.5 206.6h0.9M406.4 186.5h0.9M445.6 202.4h0.9M440.2 174.4h0.9M407 232.5h0.9M407.2 235.3h0.9M414.7 182.7h0.9M417.4 221.8h0.9M413.3 194.8h0.9M421.6 231.1h0.9M430.7 219.8h0.9M437.2 186.1h0.9M396.6 215.2h0.9M395.5 186.7h0.9M409.9 245.1h0.9M429.1 209.8h0.9M392 191.2h0.9M419.2 212.9h0.9M433.8 229.7h0.9M433.1 235.2h0.9M411.3 205.4h0.9M411.9 238.7h0.9M438.7 221.4h0.9M418.6 217.9h0.9M431.8 231.5h0.9M400.6 184.7h0.9M414.2 197h0.9M421.3 217.7h0.9M402.7 207.4h0.9M445.3 184.9h0.9M404.2 215.4h0.9M445.1 173.6h0.9M445.3 192.5h0.9M434.6 226.2h0.9M419.6 233.2h0.9M434.8 201.8h0.9M389.8 198.9h0.9M407.8 246.2h0.9M413.3 202.5h0.9M438.8 221h0.9M415.9 233.1h0.9M432 207.1h0.9M408.6 194.7h0.9M412 192.3h0.9M408.5 216.5h0.9M418.7 212.9h0.9M429.5 222.1h0.9M413.6 231.2h0.9M442.7 196.2h0.9M391.5 211.8h0.9M403.1 238.1h0.9M441.9 184.2h0.9M434.1 217.1h0.9M403 211.8h0.9M410 242.1h0.9M400.7 188.9h0.9M442.1 206.2h0.9M390.8 195.4h0.9M398.5 213.9h0.9M411 221.6h0.9M440 185.5h0.9M411.3 235.7h0.9M413.7 202.8h0.9M429.2 225.3h0.9M410.4 241.5h0.9M417.7 185.4h0.9M410.5 230h0.9M430.9 208.8h0.9M444.6 180.2h0.9M400.8 240.6h0.9M401.2 229.7h0.9M411.5 226.7h0.9M390.2 225.8h0.9M435.7 204.5h0.9M413.4 240.1h0.9M410.4 192.4h0.9M446 196.2h0.9M399.6 207.4h0.9M487.3 189.3h0.9M488 187.2h0.9M461.5 169.5h0.9M474.6 187.2h0.9M447.9 179.8h0.9M465.9 177.7h0.9M448.4 163.6h0.9M461.9 166.9h0.9M456.1 164.3h0.9M464.2 178.5h0.9M486.8 193.4h0.9M462.4 178.2h0.9M458.6 161.6h0.9M463.5 189.2h0.9M460.6 190.7h0.9M474.1 186.2h0.9M464.2 195.8h0.9M452.6 165.1h0.9M480.4 192.4h0.9M483.6 195.5h0.9M467.1 177h0.9M458.5 163.5h0.9M478 196.4h0.9M469.6 182h0.9M471.7 180.4h0.9M476.5 195.8h0.9M492.6 188.5h0.9M458.2 183.7h0.9M445.9 172.9h0.9M479.8 189h0.9M482.3 193.8h0.9M455.5 170.4h0.9M481.7 189.2h0.9M469.6 182h0.9M462.9 191.9h0.9M483.2 186h0.9M461.1 171.8h0.9M468.6 185.2h0.9M468.2 174.7h0.9M459.7 189.8h0.9M473.6 182.4h0.9M482.1 195.9h0.9M449.8 164.3h0.9M455.8 170.9h0.9M491.6 187.8h0.9M478.8 190.8h0.9M480.6 193.4h0.9M489.5 186.7h0.9M457.1 175.8h0.9M464.7 175.1h0.9M447 166h0.9M467.9 185h0.9M480.6 186.2h0.9M449.7 180.7h0.9M448.7 168.3h0.9M459.5 164.1h0.9M458 163.2h0.9M460.6 166.7h0.9M451.4 168.4h0.9M466.6 174.3h0.9M470.5 182.3h0.9M483.7 191.4h0.9M467.8 193.6h0.9M453.9 187.4h0.9M466.4 192.4h0.9M446.8 169h0.9M475.7 182.8h0.9M460.3 181.5h0.9M464.6 172.8h0.9M454.4 165.1h0.9M457.2 188.7h0.9M472.2 178.7h0.9M452.4 168.4h0.9M456.9 184.4h0.9M461.6 164.2h0.9M467.2 194.8h0.9M494.1 185.4h0.9M457.8 186.1h0.9M463.5 193.5h0.9M453.8 187.1h0.9M466.2 189.9h0.9M447.9 167.9h0.9M456 169.6h0.9M481.4 190.1h0.9M451.3 172.2h0.9M460.2 169.4h0.9M486.7 195.3h0.9M460.3 171.8h0.9M466.9 191.5h0.9M459.3 177.1h0.9M452.1 185.5h0.9M494 185.5h0.9M480 192.5h0.9M491.3 190h0.9M460.4 177.4h0.9M385.8 192.7h0.9M405.7 242.9h0.9M447.1 231.7h0.9M426 196.1h0.9M442.2 217.6h0.9M425.4 178.9h0.9M425.8 239h0.9M437.6 209.9h0.9M457.7 172.1h0.9M433.7 225.8h0.9M456.3 197.7h0.9M375.3 203.5h0.9M373.5 196.5h0.9M369.7 170.2h0.9M426.8 208.7h0.9M440.3 229.3h0.9M435.7 206.5h0.9M387.7 205.3h0.9M460.1 174.8h0.9M388.8 199h0.9M436.2 231.4h0.9M397 235.1h0.9M388.8 217.9h0.9M418.4 230.4h0.9M464.5 195.1h0.9M370.1 185.2h0.9M436.8 207.5h0.9M453.8 220h0.9M423.8 240.6h0.9M367.3 166.6h0.9M404.3 194.4h0.9M434.7 229.3h0.9M405.3 241.7h0.9M392.5 202.4h0.9M378.9 206.6h0.9M375.5 176.5h0.9M465.1 198.9h0.9M401.5 222.4h0.9M412.9 240.6h0.9M367 204.5h0.9M364.8 186h0.9M438.3 204.2h0.9M386.5 224.1h0.9M402.5 212.3h0.9M378.1 181.6h0.9M470.2 193h0.9M462.4 198.8h0.9M400.7 199.6h0.9M436.3 214h0.9M421.6 233.5h0.9M391.3 189.8h0.9M421.6 211.5h0.9M358.8 199.7h0.9M426.9 178.4h0.9M364.6 201.2h0.9M360.9 189.1h0.9M405.9 198.9h0.9M375.6 170.1h0.9M399.7 210.8h0.9M364.7 164.6h0.9M424.5 202.4h0.9M393.4 212.4h0.9M375.9 188.4h0.9M467.5 210.8h0.9M374.4 170.9h0.9M396.6 230.5h0.9M431 209.6h0.9M403.1 240.7h0.9M475.1 187.3h0.9M471.6 186h0.9M434.5 229.2h0.9M406.5 229.3h0.9M415.8 238.7h0.9M407.7 222.8h0.9M406.6 223.8h0.9M416.8 231.3h0.9M416.9 226.5h0.9M407 237.6h0.9M416.9 226.1h0.9M410.8 229.7h0.9M415.6 236.8h0.9M414 235h0.9M402.6 228.1h0.9M405.7 238.1h0.9M402.7 228.1h0.9M406.1 229.2h0.9M412.8 239.9h0.9M414.3 219.9h0.9M416.1 230.9h0.9M407.6 235.5h0.9M403.5 227.2h0.9M404.7 224.4h0.9M403.4 225.8h0.9M410.1 226.5h0.9M418.1 234.3h0.9M412.6 235.5h0.9M418.7 235.3h0.9M407.3 225.8h0.9M415.6 237.7h0.9M416.2 238.5h0.9M412.8 230.4h0.9M411.7 241.9h0.9M405 221.5h0.9"/>
<path stroke="#ff4300" d="M309.7 273.4h0.9M304 282.8h0.9M309.3 276.6h0.9M315.4 273.9h0.9M306.3 279.1h0.9M312.3 279.4h0.9M311.3 280.5h0.9M305.9 283.1h0.9M302.5 280.9h0.9M313.1 269.6h0.9M302.2 281.3h0.9M310.3 272.5h0.9M311.8 281.9h0.9M305.9 276.8h0.9M315.8 270.7h0.9M315 273.7h0.9M305.4 279.2h0.9M317.5 265h0.9M315 258.1h0.9M314 256.2h0.9M315.7 257.2h0.9M316.2 264h0.9M315.6 259.6h0.9M315.4 260.5h0.9M316.3 259.4h0.9M317.9 265h0.9M314.9 256.4h0.9M312.4 255.6h0.9M306.8 281.5h0.9M304.9 282.2h0.9M311.9 283.2h0.9M304.7 280.7h0.9M306.8 282.8h0.9M307.8 281.7h0.9M309.7 282.2h0.9M311.4 282.7h0.9M399.8 181.6h0.9M413.6 173.1h0.9M403.1 176.7h0.9M389.9 186.3h0.9M407.4 176.4h0.9M395.3 182.3h0.9M389.2 187h0.9M392.7 184.4h0.9M391.9 184.6h0.9M391.2 185.9h0.9M392.3 184.7h0.9M403.5 178.9h0.9M399.6 180.5h0.9M386.6 187.8h0.9M410.6 172.6h0.9M403.4 178.1h0.9M408.9 173.6h0.9M394 182.9h0.9M389.3 186.4h0.9M407.5 174.6h0.9M409.9 173h0.9M402.5 178h0.9M394.8 182.4h0.9M393.7 184.2h0.9M393.7 183.8h0.9M403.3 177.5h0.9M389.8 186.8h0.9M387.9 186.6h0.9M403.3 177.1h0.9M399.6 180.7h0.9M386.7 186.8h0.9M390.6 185.7h0.9M391.5 184.3h0.9M399.5 181h0.9M387.1 188h0.9M396.4 182.6h0.9M387.2 188.3h0.9M404.4 176.4h0.9M412.1 172.3h0.9M391.8 185.4h0.9M399 180.9h0.9M403.7 178.4h0.9M395.5 182.6h0.9M403.5 176.7h0.9M387.4 188.4h0.9M392.1 183.8h0.9M392.1 184.7h0.9M407.3 174.6h0.9M387.4 188.1h0.9M412.4 172.4h0.9M396.4 183.4h0.9M392.2 185.7h0.9M406.7 175.1h0.9M394.4 182.6h0.9M387.7 188.6h0.9M387.4 188.3h0.9M388.6 187.3h0.9M388.5 187.1h0.9M391.9 185.8h0.9M387.2 188.1h0.9M408.5 174.6h0.9M407.9 175.5h0.9M408 174.9h0.9M392.8 183.4h0.9M397.8 180.6h0.9M390.5 185.9h0.9M409.5 174.6h0.9M400.6 178.6h0.9M401.3 179.1h0.9M387.8 186.8h0.9M394.3 182.6h0.9M386.9 188.4h0.9M398 181.6h0.9M391.9 185.3h0.9M386.3 187.3h0.9M392.5 184.4h0.9M408.8 175h0.9M410.5 172.4h0.9M392.1 184.3h0.9M408 174.4h0.9M412.1 173.2h0.9M400 178.9h0.9M404.2 177.2h0.9M407 175.4h0.9M404.4 177h0.9M406.3 176.9h0.9M403.5 176.8h0.9M395 184.1h0.9M408.9 174.5h0.9M409.7 173.8h0.9M388.5 187.5h0.9M395.5 183.4h0.9M402 178.3h0.9M397.1 182.1h0.9M403.1 177h0.9M388.6 187.2h0.9M397.6 182.5h0.9M402 178.5h0.9M392 183.6h0.9M395.8 182h0.9M381 183.6h0.9M379.8 183.1h0.9M381.6 185.2h0.9M378.6 182.3h0.9M382.1 185h0.9M381.5 185.5h0.9M381.6 184.6h0.9M386.6 190.7h0.9M379.5 183.5h0.9M383.5 188.5h0.9M377.7 182.4h0.9M381.9 186h0.9M381.5 184.7h0.9M384.6 189.4h0.9M378.5 182.8h0.9M380.9 184.7h0.9M383.4 187.9h0.9M381.6 185.7h0.9M380.6 184.9h0.9M384.6 189.3h0.9M378.8 182.5h0.9M384.4 188.6h0.9M379.1 182.5h0.9M378.7 182.4h0.9M382.4 185.3h0.9M379.3 183.5h0.9M382.6 188h0.9M382.5 186.3h0.9M385 189.1h0.9M378 182.3h0.9M382.3 187.4h0.9M350.2 158.6h0.9M352.8 158.8h0.9M461.7 162.8h0.9M468.4 171.2h0.9M463 164.5h0.9M454.6 155.4h0.9M462.1 162.4h0.9M482 182.7h0.9M469 170.7h0.9M470.5 172.6h0.9M469.3 171.2h0.9M456.5 159.3h0.9M483.3 186h0.9M470.6 170.6h0.9M483.2 184h0.9M464.1 166.4h0.9M476.2 175.8h0.9M460.9 161.5h0.9M472 174.9h0.9M456.1 159.6h0.9M460 162.6h0.9M468.9 169.7h0.9M457.1 157.6h0.9M456.4 158.6h0.9M466.3 166.7h0.9M473.5 173.6h0.9M485.1 187.1h0.9M484.6 184.3h0.9M471.3 171.9h0.9M478.2 179.3h0.9M463.9 165.7h0.9M486.1 186.3h0.9M463.4 164.7h0.9M479.3 180.2h0.9M458.5 160.1h0.9M467.6 169.4h0.9M476.7 177.6h0.9M481.1 182.6h0.9M485.2 186.2h0.9M459.3 161.8h0.9M457.4 158h0.9M459.4 161.2h0.9M469.2 169.4h0.9M481.5 183.5h0.9M458 160.6h0.9M458 158.4h0.9M484.2 186.2h0.9M458.8 161.8h0.9M466.3 168.1h0.9M460.4 163.1h0.9M473.5 175.4h0.9M470.8 172.2h0.9M467.1 168.3h0.9M478.8 181.3h0.9M481.2 182.8h0.9M464.9 166.5h0.9M454.9 156.4h0.9M482 183h0.9M482.4 184.5h0.9M470.4 171.3h0.9M474.1 176h0.9M475.4 177.3h0.9M453.6 156.2h0.9M457.7 159.9h0.9M486.5 187.5h0.9M482.4 184.4h0.9M465.6 167.3h0.9M459.9 162h0.9M453.8 156.4h0.9M483.8 185.8h0.9M483.4 184.3h0.9M476.4 177.3h0.9M480.3 181.2h0.9M464 166.3h0.9M464.3 166.7h0.9M455.5 158.9h0.9M457 158.9h0.9M459.1 161.7h0.9M464.6 165.6h0.9M455.8 159.2h0.9M473.7 176.7h0.9M453.8 160.9h0.9M473.5 179.4h0.9M470.9 176.1h0.9M469.1 176.1h0.9M465.7 170.4h0.9M457.5 163.2h0.9M453.1 160.6h0.9M459.6 165.7h0.9M469.2 173.4h0.9M477.5 179.8h0.9M455 158h0.9M451.5 158.8h0.9M472.8 177.2h0.9M463.5 166.2h0.9M474.9 179.8h0.9M454.5 159.3h0.9M477.2 184.5h0.9M455.3 157.8h0.9M459.5 164.1h0.9M458.2 163h0.9M462.6 165.4h0.9M463.7 169.7h0.9M453.5 158.9h0.9M457.9 165.4h0.9M469.6 177.3h0.9M454.2 158.5h0.9M457 159.4h0.9M459.7 164.9h0.9M481.1 184.8h0.9M461.1 166.8h0.9M453.6 156.4h0.9M455.5 161.4h0.9M462.7 166.1h0.9M461.3 164h0.9M479.6 185.5h0.9M453.7 157.2h0.9M457.1 163.6h0.9M458.6 164.3h0.9M480 183.4h0.9M453.7 159.6h0.9M475.4 179.1h0.9M473.8 179.4h0.9M473.3 175.7h0.9"/>
<path stroke="#c64f00" d="M368.7 152.2h0.9M382.9 194.3h0.9M353.9 179.2h0.9M374.3 167.6h0.9M358.9 166.8h0.9M376.9 203.1h0.9M363.8 194.2h0.9M376.4 184.2h0.9M359.5 175.6h0.9M371.1 160h0.9M374.1 183.1h0.9M366 178.5h0.9M369.1 161.1h0.9M374.5 173.6h0.9M355.5 186h0.9M359.6 191.5h0.9M368.3 181.1h0.9M364.1 195.9h0.9M383.8 194.8h0.9M367.7 188h0.9M388.6 180.5h0.9M373.9 161.9h0.9M390 199.1h0.9M360.7 167.7h0.9M384.6 176.4h0.9M363.2 200.2h0.9M376.2 199.8h0.9M361.1 166.7h0.9M366.8 187.8h0.9M350.8 173.7h0.9M369.9 176.8h0.9M375 165.4h0.9M392.6 184.6h0.9M378.7 172.8h0.9M377.1 197.7h0.9M368.6 184.1h0.9M363.6 179.5h0.9M373.2 190.1h0.9M361.9 176.2h0.9M374.2 189.2h0.9M358.3 193.3h0.9M351.7 159.9h0.9M365.2 192.1h0.9M353.6 174.8h0.9M360.4 169.5h0.9M357.9 172.3h0.9M375.9 170.1h0.9M353.9 167.8h0.9M354.8 181.6h0.9M360.5 182.5h0.9M377.4 175h0.9M361.6 173.7h0.9M369.2 196.6h0.9M386.6 196.1h0.9M361.6 180h0.9M373.9 198.7h0.9M365.8 157.6h0.9M381 177.6h0.9M369 193.2h0.9M350.7 172.8h0.9M369.9 200.3h0.9M358.8 196.8h0.9M390.4 197.4h0.9M374.4 189.9h0.9M357.4 169.3h0.9M388.6 193.8h0.9M371.8 162.8h0.9M354.1 173.4h0.9M371.1 185.5h0.9M364.1 200.4h0.9M368.9 156.4h0.9M381.2 188.7h0.9M369.9 178.3h0.9M358.4 157.6h0.9M373.4 203.9h0.9M374.7 164.4h0.9M361.9 184.3h0.9M353.4 172.4h0.9M369.7 193.8h0.9M357.1 196.2h0.9M372 195.8h0.9M372 182.8h0.9M367.1 158.5h0.9M351.5 179.6h0.9M372.7 181.6h0.9M361.5 179.6h0.9M373 170h0.9M375.1 193.5h0.9M366.4 166.3h0.9M355.2 173.4h0.9M352.3 160.6h0.9M351.4 163.3h0.9M362.9 157.2h0.9M362.2 160.8h0.9M362.8 177.4h0.9M360.8 168h0.9M354.9 167.7h0.9M355.1 160.7h0.9M359.7 160.1h0.9M360.1 171h0.9M358.2 177.9h0.9M365.4 172.8h0.9M360.1 165.2h0.9M355.5 168.4h0.9M441.1 191.4h0.9M440 222.8h0.9M423.5 241.7h0.9M411.9 228h0.9M434.6 196.4h0.9M409.1 245.8h0.9M426.9 211.9h0.9M397.9 222.5h0.9M428.4 227.8h0.9M430 197.5h0.9M414.9 211.4h0.9M397.5 232.8h0.9M390 222h0.9M432.2 189.1h0.9M411.4 212.9h0.9M436.5 188.8h0.9M438.5 225.4h0.9M399.8 220.5h0.9M408.8 202.7h0.9M409.1 221h0.9M432.9 208.6h0.9M447 203.8h0.9M428.1 215.8h0.9M419.9 230.9h0.9M422.3 208.7h0.9M430.6 199.3h0.9M448.6 200.3h0.9M429.9 195.9h0.9M408.7 234.8h0.9M403.1 232h0.9M417.7 217.1h0.9M406 207h0.9M406.4 199h0.9M439.1 188h0.9M446.6 176.2h0.9M403.9 243.6h0.9M397.8 211.8h0.9M400.9 247.2h0.9M393.4 210.6h0.9M429.6 230.8h0.9M439.1 190.5h0.9M403.8 183.9h0.9M396.8 212.8h0.9M442.2 217.7h0.9M397.6 235.8h0.9M405.3 210.8h0.9M431.3 189.2h0.9M395.5 214.8h0.9M438.8 206.4h0.9M396.2 223h0.9M399.4 200.2h0.9M400.6 222.2h0.9M402.7 222.8h0.9M402.1 213.7h0.9M433.7 213.1h0.9M402.3 224.2h0.9M430.7 206h0.9M423 186.1h0.9M432.8 201.8h0.9M410.8 235.2h0.9M399.7 220.4h0.9M400.1 210.8h0.9M422.2 242h0.9M418.4 243.8h0.9M405.5 232.4h0.9M412.8 231.1h0.9M423.3 201.5h0.9M415.4 205.5h0.9M401.6 196.3h0.9M409.6 181h0.9M422.7 208.3h0.9M412.6 231.7h0.9M424.2 219.4h0.9M438.3 203.7h0.9M443.5 196.9h0.9M407.8 218.9h0.9M414.2 223.6h0.9M437.2 223.1h0.9M398 244.3h0.9M400.6 236.7h0.9M402.1 226.9h0.9M410.3 246.2h0.9M413.9 194.8h0.9M435 218.5h0.9M438.4 205.2h0.9M420.8 228.2h0.9M421 216.3h0.9M437.9 177.3h0.9M434.8 223.9h0.9M395.8 188.3h0.9M439.9 182.7h0.9M422.7 243.3h0.9M423.5 241.4h0.9M407.4 188.8h0.9M409.8 185.7h0.9M394.6 203.6h0.9M407.4 189.9h0.9M431.7 175.4h0.9M393.5 207.6h0.9M430.1 181.7h0.9M393.5 207.2h0.9M446.5 209.1h0.9M396.7 229.7h0.9M443.4 192.1h0.9M423.1 189.8h0.9M420.8 191h0.9M412.4 198.9h0.9M429.8 201.4h0.9M411.2 199.2h0.9M395.5 195h0.9M399.8 221.8h0.9M409.5 206.6h0.9M412.7 210.7h0.9M392 197.8h0.9M409.6 239.8h0.9M434.6 229.3h0.9M409.5 208.4h0.9M427.5 189.4h0.9M438.4 184.8h0.9M432.1 194.1h0.9M419.8 219h0.9M390.7 222.3h0.9M404.9 241.9h0.9M449.2 198.4h0.9M416.4 222.5h0.9M425.4 225h0.9M417.1 216.2h0.9M423.4 181.6h0.9M413.2 235.9h0.9M402.2 184h0.9M407.4 181.3h0.9M407 196.2h0.9M398.8 234.6h0.9M409.3 192.7h0.9M466.7 172.5h0.9M468 179.3h0.9M467.2 171.9h0.9M466.6 184.6h0.9M456.7 167.8h0.9M484.8 189.9h0.9M468.1 190.1h0.9M456.1 191.4h0.9M468.2 188.2h0.9M490.3 194.3h0.9M448.2 181.5h0.9M457.6 165.2h0.9M448.4 168.7h0.9M475.7 194.5h0.9M448.2 163.7h0.9M462 185.7h0.9M458.2 185.6h0.9M459.3 177.6h0.9M478.1 192.4h0.9M460.3 189.9h0.9M466 169.2h0.9M481.1 187.4h0.9M454.9 178.8h0.9M487.6 191.6h0.9M458.7 157.6h0.9M458.1 185.3h0.9M455.9 157.6h0.9M469 174h0.9M467 171.5h0.9M489.1 191h0.9M495.4 186h0.9M452.9 166.9h0.9M450.2 177.3h0.9M450.7 176.2h0.9M450.8 179.3h0.9M452 179.1h0.9M464.1 167h0.9M446.6 179.3h0.9M465.8 193.2h0.9M480 192.6h0.9M491.3 188.9h0.9M459.3 178.8h0.9M472.2 187.2h0.9M448.9 167.4h0.9M457.7 172h0.9M447.8 177.6h0.9M472.7 185.7h0.9M469.6 176.2h0.9M451.2 186.8h0.9M461 166.2h0.9M455.7 180.8h0.9M469.7 195.3h0.9M491 187h0.9M484.1 195.2h0.9M450.3 181.3h0.9M447.7 164.4h0.9M456.7 165h0.9M488.6 186.2h0.9M449.9 172.5h0.9M466.4 192.3h0.9M463 175.5h0.9M491.4 189.8h0.9M450.2 176.8h0.9M446.1 183.8h0.9M469.6 185.5h0.9M465 185h0.9M494.1 186.5h0.9M495.4 185.1h0.9M494.6 188.8h0.9M464.7 167.3h0.9M469.6 176.9h0.9M455.1 183.1h0.9M452.3 182.1h0.9M478.2 188.3h0.9M461.7 182.6h0.9M488.9 192.3h0.9M446 173.7h0.9M455.6 175h0.9M456.3 182.1h0.9M446.7 186.1h0.9M358 196.2h0.9M416.2 247.7h0.9M436.2 243.3h0.9M385.6 222.5h0.9M423.7 223.6h0.9M453.9 214.4h0.9M409.3 231.5h0.9M359.8 192.5h0.9M407.8 200.1h0.9M399.5 205.7h0.9M370.9 171.1h0.9M390.9 218h0.9M446.8 222.4h0.9M396.9 212.4h0.9M436.1 198.3h0.9M410.2 191.1h0.9M432.3 232.1h0.9M439.8 214.1h0.9M473.4 185.8h0.9M451 212.5h0.9M406.3 248.8h0.9M421.1 211.1h0.9M415.6 187.1h0.9M424 181.9h0.9M396.2 209.9h0.9M423.2 174.6h0.9M467.4 208.2h0.9M413.3 244.6h0.9M377.5 191.9h0.9M369.6 166h0.9M385.4 181.6h0.9M439.4 241.2h0.9M450.1 178.7h0.9M412.9 182.6h0.9M407 229.7h0.9M427.1 195.7h0.9M421.2 240.7h0.9M454.2 182.7h0.9M464.6 210.6h0.9M438.7 232h0.9M380.1 202.9h0.9M375.9 204.5h0.9M402.5 219.8h0.9M352 183.2h0.9M389.6 234.4h0.9M392.4 202.9h0.9M441.2 207h0.9M413.9 235.6h0.9M388.6 211.9h0.9M390.8 210h0.9M414.2 202.3h0.9M372.9 169.3h0.9M447.6 224.7h0.9M471.3 181.7h0.9M451.9 200.3h0.9M400.3 198.3h0.9M416.9 191.1h0.9M469.6 202.5h0.9M397.8 224.6h0.9M393.6 205.2h0.9M403.5 186.8h0.9M466 185.9h0.9M436.5 209.9h0.9M384.8 185.8h0.9M413.1 230.6h0.9M408.7 227.1h0.9M408 237.4h0.9M407.8 239.2h0.9M415 228.2h0.9M418.6 228.4h0.9M415.2 235h0.9M405.1 232.1h0.9M410.1 226.8h0.9M409.4 220.7h0.9M404.5 227.3h0.9M417.6 224h0.9M414.6 232.2h0.9M408.7 232.6h0.9M417 228.6h0.9"/>
<path stroke="#ff6600" d="M300.5 285.2h0.9M310.4 269.6h0.9M311 275h0.9M312.4 276.2h0.9M312.2 272.6h0.9M310 282.9h0.9M299 281.6h0.9M310.2 281.5h0.9M314.1 280.4h0.9M301.2 279.7h0.9M300 285.2h0.9M314.4 273.7h0.9M308.7 272.5h0.9M308.8 278.3h0.9M315.4 276.3h0.9M309.5 276.2h0.9M312 274.5h0.9M299.4 283.6h0.9M314 274.1h0.9M305.5 277.7h0.9M312.2 276.7h0.9M314.6 258.2h0.9M313.7 255.9h0.9M316.6 258.9h0.9M316.5 259.6h0.9M316.5 264.6h0.9M314.4 259.1h0.9M316.6 261h0.9M316.2 261.6h0.9M314.7 256.8h0.9M314.8 257.7h0.9M312.8 254.7h0.9M312.4 252h0.9M314.6 260.7h0.9M316.3 260.3h0.9M311.7 254.2h0.9M314.2 258.1h0.9M318.4 263.1h0.9M314 259.8h0.9M316 257h0.9M311.9 283.3h0.9M309.8 284.2h0.9M304.2 280.8h0.9M311.6 282.3h0.9M308.3 281.7h0.9M305.8 283.1h0.9M303.6 282.1h0.9M312.8 283.7h0.9M303 282.2h0.9M406.9 176.5h0.9M411 173.6h0.9M403.7 178.3h0.9M410.9 172.4h0.9M402 178.6h0.9M412.9 171.3h0.9M405.3 177.1h0.9M409.9 171.7h0.9M402.6 178.2h0.9M401.7 177.2h0.9M395.4 180.6h0.9M404.4 178.2h0.9M397.7 181.3h0.9M401.2 180h0.9M410.9 171.7h0.9M389 185.2h0.9M404.5 175h0.9M402.9 176.4h0.9M401.8 176.6h0.9M409.3 171.4h0.9M393.9 183.7h0.9M409.5 173.2h0.9M391.2 183.6h0.9M410.4 172.6h0.9M402.4 176.4h0.9M408.7 171.9h0.9M400.5 179.6h0.9M397.7 179.6h0.9M402.5 178h0.9M404 178h0.9M392.1 184.3h0.9M390 187.1h0.9M406.2 178.1h0.9M403.6 178.6h0.9M394.9 183.3h0.9M397.5 182.9h0.9M386.9 188.7h0.9M405.8 176.8h0.9M400.5 181.2h0.9M400.6 180.7h0.9M387.6 188h0.9M405.3 176.8h0.9M388.4 187.6h0.9M398.9 182h0.9M387.1 188.5h0.9M393.1 186.2h0.9M406.6 176.7h0.9M392.6 184.8h0.9M388.7 186.5h0.9M402.6 178.9h0.9M399.4 180.3h0.9M395.9 183.8h0.9M393.5 184.3h0.9M395.7 184.1h0.9M391.9 185.3h0.9M401.1 180.7h0.9M401.9 179h0.9M389.1 186.1h0.9M387.5 187.8h0.9M393.9 185.3h0.9M395.7 183.4h0.9M400.8 181.4h0.9M391.2 187h0.9M400.3 180.5h0.9M386.9 188.5h0.9M387.5 188.8h0.9M412.5 173.3h0.9M403.3 177.9h0.9M397.4 182.3h0.9M401.4 180.2h0.9M407 177.1h0.9M394.1 185.1h0.9M411 174.3h0.9M394.2 184.2h0.9M396.3 183.8h0.9M406.7 176.7h0.9M411.7 173h0.9M407.4 175.9h0.9M409.2 175h0.9M398 180.9h0.9M397 183h0.9M394.5 183h0.9M387.7 187.9h0.9M388.1 187.6h0.9M393.2 185.1h0.9M409.4 175.3h0.9M387.9 189h0.9M411.8 173.1h0.9M402.3 179.2h0.9M396.8 181.6h0.9M403.7 178.6h0.9M397.7 182.4h0.9M409.5 174.4h0.9M397.7 181.9h0.9M392.7 185.8h0.9M409 175.5h0.9M396.1 183.1h0.9M405.9 176.9h0.9M398.2 183.1h0.9M397.6 183h0.9M411.5 174.8h0.9M389.3 186.8h0.9M403.6 178.9h0.9M412.6 172.8h0.9M388.7 188.1h0.9M405.4 178.6h0.9M399.4 181.3h0.9M393.9 183.7h0.9M409.7 175.2h0.9M400.7 179.5h0.9M409.9 174.4h0.9M403.1 178.6h0.9M391.6 185.5h0.9M412.6 173h0.9M399.4 182h0.9M396.1 183.1h0.9M391.4 185.5h0.9M403.9 178h0.9M400.2 180.4h0.9M392.1 186.6h0.9M410.5 174.7h0.9M387.5 187.9h0.9M404.1 178.4h0.9M385 188h0.9M386.7 189.6h0.9M383.9 187.4h0.9M387.2 191h0.9M380 182.8h0.9M382.9 186.1h0.9M381.8 184.9h0.9M387.4 189.7h0.9M379.7 182.2h0.9M386.6 188.9h0.9M387 189.5h0.9M380.9 183.2h0.9M385.1 189.3h0.9M382 184.4h0.9M386.7 190.3h0.9M350.3 157.6h0.9M460.3 160.6h0.9M482.5 183.7h0.9M463.7 164.2h0.9M480.6 181.1h0.9M457.9 159.4h0.9M486 187.1h0.9M467.6 168.6h0.9M481.5 181.3h0.9M473.6 175h0.9M463.2 162.7h0.9M461 161h0.9M471.5 172.3h0.9M487.2 185.9h0.9M476.8 177.4h0.9M456.8 158.1h0.9M463.6 164.5h0.9M470.5 171.6h0.9M468.5 167.2h0.9M483.6 182.7h0.9M478.3 179.3h0.9M457.6 159.5h0.9M461.3 162.4h0.9M480.7 180.3h0.9M486 186.4h0.9M462.7 161.4h0.9M473 173.7h0.9M462.3 161.2h0.9M460.4 161.8h0.9M474 174.4h0.9M471.4 171.6h0.9M461.8 162.3h0.9M461.8 161.4h0.9M473.9 174.3h0.9M466.8 166.2h0.9M486.9 186.8h0.9M480.2 180h0.9M466.2 165.5h0.9M483.1 184.3h0.9M461.6 161.1h0.9M473.5 172h0.9M455.3 156.9h0.9M466.6 167.4h0.9M478.5 178.3h0.9M461.7 161.3h0.9M477.7 177.9h0.9M468.6 168.3h0.9M472.5 172.6h0.9M463.3 162.2h0.9M476.6 177.1h0.9M460.3 159.8h0.9M454.2 154.9h0.9M478.6 178.7h0.9M464 164.1h0.9M461.8 163.7h0.9M478.3 176.8h0.9M477.5 176.6h0.9M465.5 165.6h0.9M467.8 169.6h0.9M467.5 169.2h0.9M481.3 180.5h0.9M482 181.7h0.9M483 184.2h0.9M477.8 175.7h0.9M475.2 173.6h0.9M471.4 169.9h0.9M478.6 177.8h0.9M478.7 176.7h0.9M455.9 155.3h0.9M463.4 165.4h0.9M476 176h0.9M459.6 159.7h0.9M481.5 181.6h0.9M479.5 178.6h0.9M461.4 162.7h0.9M462 162.6h0.9M463.7 163.9h0.9M458.9 158.7h0.9M464.7 164.7h0.9M457.8 157.4h0.9M476.4 177h0.9M484.4 184.3h0.9M469.5 170.9h0.9M479.3 178.8h0.9M454.2 155.5h0.9M471.2 171.3h0.9M473.7 174.2h0.9M481.2 181.7h0.9M464.3 163.7h0.9M473.3 172.6h0.9M476.4 176h0.9M474.6 175.3h0.9M463.4 163.1h0.9M481.2 180.9h0.9M464.3 163.9h0.9M478.2 177.4h0.9M479.1 178.1h0.9M481.1 182.3h0.9M455.1 155h0.9M459.2 160.5h0.9M476.4 176.7h0.9M457.1 157.9h0.9M477.8 177.2h0.9M476.5 175.5h0.9M474.7 174h0.9M458.2 159h0.9M510.6 188.7h0.9M510.7 187h0.9M504.1 182.2h0.9M510.1 188.7h0.9M504.5 183.8h0.9M500.8 179.7h0.9M503.9 182.5h0.9M499.9 177.9h0.9M499.6 178.3h0.9M500.5 177.3h0.9M497.4 174.6h0.9M510 189h0.9M505.9 184.6h0.9"/>
<path stroke="#c66a00" d="M356.9 181.6h0.9M374.6 200.4h0.9M382.8 189.4h0.9M363 167.1h0.9M369.7 172.3h0.9M392.2 183h0.9M366.2 168h0.9M354.4 160.7h0.9M386.7 195.7h0.9M386.4 181.4h0.9M376 194h0.9M366 164.5h0.9M372.1 190.8h0.9M348.2 165.4h0.9M373.8 174.9h0.9M366.9 187.1h0.9M374.5 180.4h0.9M358.8 163.7h0.9M371 180.8h0.9M363.4 175.6h0.9M366.7 195.9h0.9M373.5 150.1h0.9M445.3 174.2h0.9M441.4 202.2h0.9M404.8 184.6h0.9M447.6 186.8h0.9M410.3 181.6h0.9M421.6 244.9h0.9M435 211.5h0.9M414.5 200h0.9M427.8 189.1h0.9M437.8 201.4h0.9M400.1 201.6h0.9M392.5 230.7h0.9M428.2 236.3h0.9M415.4 189.8h0.9M416.7 194.7h0.9M424.9 205.9h0.9M416 244.3h0.9M442.1 214.4h0.9M408.3 186.5h0.9M402.8 226.1h0.9M405 208.2h0.9M425.9 197.8h0.9M396.7 192h0.9M431.3 216.1h0.9M431.4 198.3h0.9M435 209.7h0.9M434.2 197.3h0.9M403.2 201.4h0.9M396.3 223.9h0.9M449.9 194.5h0.9M463.5 177.2h0.9M471.4 177.9h0.9M451.7 163.9h0.9M454.1 159.5h0.9M459.9 174.7h0.9M478.7 192h0.9M467.8 191.6h0.9M473.9 186.8h0.9M450.3 165.3h0.9M463.9 183.5h0.9M468.2 180.7h0.9M460.3 189.4h0.9M479.9 187.6h0.9M468.8 195.3h0.9M432.3 203.9h0.9M374.9 193h0.9M394.6 208.7h0.9M402.7 189.9h0.9M412.5 177h0.9M387.7 220.4h0.9M415 226.5h0.9M376.9 183.3h0.9M356 182h0.9M360.6 179.4h0.9M405.8 199.4h0.9"/>
<path stroke="#ff8800" d="M303.9 275.3h0.9M314.4 275.5h0.9M301.3 280.5h0.9M307.1 271.4h0.9M304.2 281.5h0.9M305.4 279.6h0.9M312.2 269.9h0.9M310.4 270.8h0.9M308.1 274.2h0.9M305.9 284.3h0.9M298.8 282.7h0.9M303.9 284.2h0.9M303.3 281.8h0.9M300 277.9h0.9M302 282.3h0.9M312.9 255.6h0.9M317.3 264h0.9M313.4 255.9h0.9M311.5 254.4h0.9M315.2 256.2h0.9M305 280.8h0.9M306.6 281.4h0.9M304 281h0.9M309.3 281.8h0.9M410.5 169.6h0.9M407.7 172.2h0.9M409.9 170.3h0.9M409.3 173.3h0.9M409.5 170.3h0.9M397.8 177.5h0.9M387.4 184.3h0.9M402.4 177.2h0.9M397.7 179.5h0.9M390.8 182.4h0.9M408.6 171.8h0.9M403.8 176.8h0.9M394 182.2h0.9M408.6 171.9h0.9M412.9 169.5h0.9M407.4 172.3h0.9M410.3 169.5h0.9M408.6 173.2h0.9M404.2 173.2h0.9M388.6 185.8h0.9M392.7 182.3h0.9M404.6 175.6h0.9M401.3 177.3h0.9M390.1 184.6h0.9M398.5 179.3h0.9M409.3 170.8h0.9M411.8 168.3h0.9M410.5 170.1h0.9M410.6 168.8h0.9M414.5 167.7h0.9M388.2 190.2h0.9M406.1 177.1h0.9M396.5 184.5h0.9M400.7 181.5h0.9M399.2 182.4h0.9M408 176.4h0.9M395.4 185.3h0.9M395.1 185.4h0.9M404.2 178.6h0.9M403.3 179h0.9M403.3 180.6h0.9M401.6 181.1h0.9M391.5 187.3h0.9M393.4 186.2h0.9M393.4 187.4h0.9M396.4 184.6h0.9M403.4 180.7h0.9M395.3 185.3h0.9M399.2 181.8h0.9M400.4 180.3h0.9M393.8 186.2h0.9M394.3 186h0.9M403.2 180.3h0.9M391.4 186.2h0.9M397.5 183.9h0.9M409.8 176.9h0.9M393.8 186.5h0.9M394.5 184.8h0.9M402.6 179.7h0.9M407.9 177.4h0.9M410.8 175.7h0.9M399.1 181.7h0.9M404.8 178.4h0.9M406.8 177.7h0.9M396.1 184.5h0.9M412.8 173.4h0.9M404.3 180.3h0.9M412.4 175.7h0.9M409.5 176.6h0.9M397.3 182.8h0.9M391 186.8h0.9M395.2 183.6h0.9M393.2 185.5h0.9M397 183.9h0.9M406.9 178.2h0.9M408.3 176.4h0.9M400 182.2h0.9M405.1 180h0.9M387.5 189.7h0.9M395.9 183.9h0.9M401.8 179.9h0.9M392.8 185.9h0.9M397.5 182.6h0.9M412.5 174.5h0.9M390.6 187.5h0.9M393 187.2h0.9M409.6 176.4h0.9M388.2 189.8h0.9M398.6 183h0.9M394.3 185.5h0.9M394.7 184.8h0.9M409.3 177.4h0.9M403.5 179.6h0.9M399.7 183.2h0.9M408.2 177.6h0.9M398.9 183.4h0.9M408.7 177.2h0.9M406.9 177.8h0.9M407.3 177.8h0.9M391.4 187.4h0.9M395.1 184.8h0.9M396.8 183.5h0.9M390.2 187.5h0.9M396.9 183.9h0.9M401.6 181.1h0.9M403.8 179.2h0.9M384.2 186h0.9M379.8 181.5h0.9M385 187.7h0.9M384.6 186.5h0.9M381.3 181.9h0.9M386.7 188h0.9M386.2 188h0.9M379.5 181.4h0.9M381.7 182.7h0.9M384.9 186.2h0.9M385.8 187.6h0.9M380.8 184h0.9M386.1 187.7h0.9M384.8 187.1h0.9M381.2 182.6h0.9M387.2 190.2h0.9M382.4 183.1h0.9M384.5 187.9h0.9M385.4 186.7h0.9M383.1 185.6h0.9M379.8 182h0.9M379.6 181h0.9M387.2 190.4h0.9M386.3 188.9h0.9M384.2 185.3h0.9M383.5 185.6h0.9M382.2 183.4h0.9M387.3 189.3h0.9M383.6 186.4h0.9M383.3 186.4h0.9M349.8 157.2h0.9M350.4 159.5h0.9M353.7 157.9h0.9M464.5 161.8h0.9M477.3 177.1h0.9M464.5 163.1h0.9M485.1 183.8h0.9M457.7 158.2h0.9M465.8 164.7h0.9M465.5 162.9h0.9M467.5 165.4h0.9M461.9 161.2h0.9M471 169h0.9M480.3 178.1h0.9M472.4 172.1h0.9M485.3 182.3h0.9M481 180.3h0.9M485.9 183.4h0.9M463.6 162h0.9M475.2 174.8h0.9M463.8 163.6h0.9M483.6 180.2h0.9M483.2 179.8h0.9M474.9 171.9h0.9M480.3 179.8h0.9M471.8 172.4h0.9M463.4 161.1h0.9M473.2 172.9h0.9M480 177.7h0.9M484.3 181.9h0.9M456.4 155.8h0.9M474.4 171.7h0.9M486.8 186.2h0.9M456.7 155.6h0.9M468.7 167.2h0.9M487 183.9h0.9M473.7 170.9h0.9M457.6 158h0.9M484.8 183.9h0.9M467.5 165h0.9M473.2 172.7h0.9M456.8 155.4h0.9M465.8 165.3h0.9M459.4 158.2h0.9M466 163.5h0.9M471.3 169h0.9M476 175.2h0.9M480.3 177.4h0.9M481 179.6h0.9M473.8 171.7h0.9M487.2 186h0.9M469 167.4h0.9M482.7 181.3h0.9M487.6 185.3h0.9M463.5 161.7h0.9M462.2 161.5h0.9M462.2 160.3h0.9M461.1 159.5h0.9M485.9 183.5h0.9M455.9 155.8h0.9M467.9 167.2h0.9M474.4 172.4h0.9M478.9 175.9h0.9M483.4 182.2h0.9M486.1 185.3h0.9M467 166.2h0.9M456.8 156.2h0.9M484.8 183.4h0.9M471.6 169.5h0.9M458.4 158.5h0.9M468.1 167.3h0.9M473.3 170.5h0.9M477.6 175.9h0.9M459.4 156.8h0.9M470.7 168.9h0.9M458.6 158.5h0.9M486.9 185.3h0.9M466.7 167.4h0.9M474 171.8h0.9M469.7 168.9h0.9M464.9 163.7h0.9M488 185.8h0.9M478.9 178.2h0.9M482.8 179.5h0.9M482.1 180.4h0.9M480.4 178.4h0.9M467.9 166.6h0.9M479.6 179.6h0.9M482.2 180.4h0.9M483.6 182.9h0.9M456.9 156.9h0.9M471.5 170.3h0.9M481.1 181.3h0.9M481.9 179.6h0.9M469.4 166.2h0.9M480.7 179.2h0.9M463.3 161.3h0.9M464.5 162.7h0.9M501.9 178.4h0.9M499.8 179.4h0.9M503.4 181.2h0.9M510.1 187.8h0.9M501.6 179.3h0.9M497.6 175.3h0.9M509.1 183.4h0.9M501.4 181h0.9M507.8 183.1h0.9M511.9 186.5h0.9M504.5 181h0.9M507.1 181.5h0.9M504.5 180.7h0.9M500.3 176.2h0.9M504.7 182.4h0.9M505.4 183.7h0.9M507.8 183h0.9M507 183.3h0.9M499.5 178.6h0.9M497.7 176.4h0.9"/>
<path stroke="#ffaa00" d="M314.5 270.1h0.9M314 269.1h0.9M314 268.1h0.9M312.5 266.5h0.9M313 268.1h0.9M312.3 274.2h0.9M313.9 271.3h0.9M309.8 273.2h0.9M304.3 277.1h0.9M300.4 277.9h0.9M305.4 280.7h0.9M295.3 280.4h0.9M303.3 274.9h0.9M297.9 282.2h0.9M297.8 281.6h0.9M305.1 273.7h0.9M304.5 280.5h0.9M311.6 273.5h0.9M307.4 278.1h0.9M314.3 267.4h0.9M313.2 272.3h0.9M297.7 281.9h0.9M404.7 171.8h0.9M396.1 178.2h0.9M389.7 183.6h0.9M410.7 169.8h0.9M393.4 181.8h0.9M409.9 169.4h0.9M397.9 177.6h0.9M403.4 173h0.9M394.7 180.5h0.9M390.8 181.5h0.9M393.1 180.5h0.9M388.2 185.3h0.9M403.8 171.3h0.9M388.7 182.5h0.9M409.3 170.4h0.9M408.8 168.9h0.9M401.1 174.9h0.9M398.1 178.7h0.9M401.9 174.2h0.9M401.9 174.1h0.9M395.7 177.9h0.9M389 182.9h0.9M404.3 175.6h0.9M398.1 177.9h0.9M399.5 176h0.9M412.4 168h0.9M408.3 170.7h0.9M410 168.4h0.9M412.4 169.4h0.9M409.7 170.6h0.9M408.6 169.7h0.9M408.4 170.3h0.9M412.3 168h0.9M411.1 166.7h0.9M392.9 188.7h0.9M408.5 178.4h0.9M393 187.3h0.9M397.1 184h0.9M398 183.9h0.9M400.8 182.4h0.9M403.2 181.5h0.9M393.4 186.4h0.9M412.3 176.1h0.9M401.9 180.8h0.9M397.9 183.6h0.9M411.9 175h0.9M403.6 181.7h0.9M394.2 186.3h0.9M393.2 187.6h0.9M410.9 176.8h0.9M400.2 181.9h0.9M394.7 185.8h0.9M388.6 190.1h0.9M389.3 189.6h0.9M400.7 182.5h0.9M399.9 182h0.9M390.5 190.2h0.9M411.7 175.8h0.9M404.5 179.9h0.9M391.6 189.2h0.9M399.3 182.6h0.9M394.4 187.3h0.9M406.9 179.2h0.9M399.4 182.9h0.9M406.7 177.5h0.9M409 177.1h0.9M396.1 186h0.9M401.3 183h0.9M391.2 187.1h0.9M390.3 188.7h0.9M398.5 183.6h0.9M391.8 188.6h0.9M394.3 187.4h0.9M408.9 178.9h0.9M405.7 179.1h0.9M407.2 177.7h0.9M412.5 174.1h0.9M393.5 186.1h0.9M398 185.5h0.9M401.4 182.6h0.9M400.1 182.1h0.9M400.4 182.1h0.9M393.3 187.3h0.9M411.9 176.8h0.9M403.6 180.6h0.9M410.4 175.7h0.9M395.7 186.1h0.9M412.5 174.3h0.9M399.4 182.7h0.9M413.5 174h0.9M391.2 188h0.9M391.6 187.6h0.9M396.2 184.3h0.9M410.5 176.1h0.9M394.2 185.9h0.9M398.3 185.1h0.9M400.4 183.5h0.9M413.3 174.3h0.9M402.5 181h0.9M407.7 179h0.9M397.8 184.8h0.9M400.7 183.7h0.9M407.3 178h0.9M392.3 187.6h0.9M413.2 175.4h0.9M398.5 184.7h0.9M389.3 188.9h0.9M396.5 184.2h0.9M393.7 186.6h0.9M396.3 183.9h0.9M411.8 176h0.9M395.8 185.5h0.9M396 186.5h0.9M404.9 180.8h0.9M411.4 176.4h0.9M397.5 183.9h0.9M405 179h0.9M383.4 185.2h0.9M388.1 190.2h0.9M388.2 190.7h0.9M381.3 181.1h0.9M381.5 181.8h0.9M383.2 184.5h0.9M380.7 181h0.9M380.3 181.2h0.9M385.7 185.9h0.9M383.8 184.9h0.9M383.4 183.4h0.9M382 182.3h0.9M380.9 181.5h0.9M381.8 182.2h0.9M388.1 188.4h0.9M385.5 187.4h0.9M385.7 186.6h0.9M386.5 188.1h0.9M383.2 185h0.9M387.2 187.8h0.9M382.5 183.8h0.9M381.7 182.4h0.9M382.6 183.9h0.9M383.6 185.2h0.9M380.8 180.9h0.9M386.4 186.7h0.9M353.3 190.7h0.9M352.2 188.3h0.9M349.9 186.6h0.9M353.6 187.2h0.9M482.9 178.9h0.9M464.6 160.1h0.9M482.5 179.3h0.9M479.1 176.4h0.9M487.4 184.1h0.9M460.8 156.8h0.9M483.5 180.2h0.9M467 164.5h0.9M457.9 154.2h0.9M460.4 157.8h0.9M456.7 153.1h0.9M479.9 177h0.9M473.2 171.4h0.9M474.3 171h0.9M461.4 160.1h0.9M482.5 177.8h0.9M470.5 168.9h0.9M480.6 179.2h0.9M471.9 168.3h0.9M488.2 185.6h0.9M461.4 159.4h0.9M488.3 185.4h0.9M464.1 160.2h0.9M467.8 166.4h0.9M464.9 162.1h0.9M477.8 174.3h0.9M482.2 178.7h0.9M478.4 175.8h0.9M485.8 184.5h0.9M479.7 178.1h0.9M488.7 185.1h0.9M483.9 180.8h0.9M464.3 160.1h0.9M457.4 153.3h0.9M480.2 176.2h0.9M463.9 160.7h0.9M459 157.5h0.9M473.5 171.7h0.9M457 153.9h0.9M488.1 185.1h0.9M460.4 159.4h0.9M486.2 182.5h0.9M471.5 170.4h0.9M473.8 172.1h0.9M468.6 165.9h0.9M471.1 167.6h0.9M468.7 166.5h0.9M459.6 156.6h0.9M462.5 158.9h0.9M484.9 182.2h0.9M468.1 163.8h0.9M480.7 179.4h0.9M478.7 176.8h0.9M472 170h0.9M456 153.2h0.9M463.4 160.2h0.9M472.1 168.3h0.9M484.7 182.9h0.9M472.7 169.5h0.9M458 155.6h0.9M460.4 158.1h0.9M487.4 182.2h0.9M476.3 173.2h0.9M459.8 156.9h0.9M476.7 174h0.9M487.7 185.4h0.9M461.4 158.7h0.9M466.8 164.4h0.9M474 170.9h0.9M474.2 171.1h0.9M471.1 169.1h0.9M480.8 177h0.9M465.7 163.3h0.9M478.6 175.8h0.9M465.4 162.7h0.9M484.9 182.4h0.9M466.9 163.3h0.9M460.7 159.1h0.9M466.8 164.1h0.9M470.5 169.2h0.9M478.9 175.8h0.9M468.7 165.8h0.9M461.6 160.7h0.9M457.8 155.5h0.9M468.8 164.9h0.9M482.3 178.5h0.9M465 164.3h0.9M484.2 180.8h0.9M482.1 177.5h0.9M475.8 171.6h0.9M481.3 179h0.9M465.6 164.4h0.9M456.4 153.2h0.9M487.6 184.8h0.9M470.5 168.3h0.9M458.9 155.7h0.9M477.9 173.7h0.9M462.5 160.8h0.9M460.6 158.7h0.9M473.4 169h0.9M460.8 158.2h0.9M475.3 171.6h0.9M472.4 169.2h0.9M469.8 166.7h0.9M457.8 156.3h0.9M474.3 170h0.9M484.1 181.5h0.9M462.2 159.4h0.9M478.7 177.2h0.9M477.9 174.4h0.9M486.5 182.3h0.9M459.9 157.7h0.9M467.4 165.9h0.9M457.5 154.7h0.9M478.1 175.2h0.9M471.8 170.1h0.9M485.4 183.8h0.9M461 158.2h0.9M470 167.3h0.9M477.7 176.7h0.9M467.1 164.1h0.9M485.9 181.3h0.9M460.6 157.8h0.9M479.3 174.2h0.9M468.6 164.4h0.9M504.7 178.2h0.9M510.5 182.1h0.9M507.6 179.3h0.9M505.2 177.5h0.9M503.4 176.3h0.9M500.5 174.7h0.9M501.2 175h0.9M499.6 174.4h0.9M498.2 174h0.9M504.4 177.9h0.9M506.5 179.9h0.9M509.4 181.6h0.9M506.8 181.2h0.9M497.4 173.8h0.9M502 178.4h0.9M500 175.4h0.9M508.6 182.5h0.9M510.1 181.8h0.9M500.2 177.7h0.9M498.3 174h0.9M506.9 180.6h0.9M502.2 177.2h0.9M510.9 187.1h0.9M502.3 176.1h0.9M514.7 185h0.9M509.5 185.7h0.9M499.6 173.3h0.9M502.7 178.8h0.9"/>
<path stroke="#ffcc00" d="M313.2 266h0.9M314 268h0.9M314.6 268.9h0.9M312.8 268.1h0.9M313.4 266.5h0.9M314.3 268.1h0.9M311.4 263.2h0.9M307.8 271.5h0.9M303.5 270.2h0.9M304.6 274.7h0.9M308.4 269.6h0.9M303.2 273.5h0.9M295.2 278.2h0.9M313.3 267.7h0.9M296.6 280h0.9M306.9 274.5h0.9M303.7 272.7h0.9M296.1 281.9h0.9M313.6 266.3h0.9M301.6 274.3h0.9M302.1 273.6h0.9M303.4 270.8h0.9M406.8 170.3h0.9M401.8 174.1h0.9M402.4 171.6h0.9M390.7 181.6h0.9M405.7 172.1h0.9M402.3 174.6h0.9M406.4 171.3h0.9M402.9 172.3h0.9M400.6 173.4h0.9M408.4 168.9h0.9M410.4 168.4h0.9M388.9 183h0.9M395.3 178.6h0.9M406.3 171.6h0.9M410.3 169.2h0.9M409.6 169.1h0.9M410.7 169.4h0.9M392.6 179h0.9M404.8 172.6h0.9M411.7 167.7h0.9M392.2 178.7h0.9M399.4 174.7h0.9M405.6 169.7h0.9M388.1 184.3h0.9M410.4 170.2h0.9M412.9 165.2h0.9M408.7 168.6h0.9M408.6 170h0.9M411 166.8h0.9M410.5 166.7h0.9M412.4 167.5h0.9M410 167.2h0.9M408.5 169.8h0.9M407.5 170h0.9M413.9 165.7h0.9M408.4 178.4h0.9M394 187.1h0.9M404.6 179.9h0.9M391.3 188h0.9M398.8 183.8h0.9M413.6 175.9h0.9M413.2 175.4h0.9M396.9 185.5h0.9M411.2 176.3h0.9M405.7 179.9h0.9M394.7 186.5h0.9M390.2 190.3h0.9M407.9 178.1h0.9M389.9 190h0.9M404.2 181.4h0.9M396.2 186.7h0.9M411.2 178.1h0.9M403.3 182.1h0.9M396.5 186.7h0.9M411.2 178h0.9M407.2 180.5h0.9M412.9 176.8h0.9M403.3 183.1h0.9M404.7 181.8h0.9M408.2 179.3h0.9M400.9 184.7h0.9M392.8 187.4h0.9M395.4 186.9h0.9M411 176.3h0.9M400.9 182.8h0.9M401.4 183.8h0.9M401.2 182.5h0.9M410 178.3h0.9M400.8 184h0.9M401.1 183.9h0.9M400.3 184.1h0.9M392.1 188h0.9M388.2 190.5h0.9M409.1 178.8h0.9M398.8 186.1h0.9M399.9 184.9h0.9M399.5 183.9h0.9M409.8 177.3h0.9M397.6 186.1h0.9M402.7 182.4h0.9M411.3 177.2h0.9M396.2 185.8h0.9M406.8 180.3h0.9M400.3 183.8h0.9M396.3 185.6h0.9M406 179.2h0.9M411.7 176.9h0.9M398.9 185.8h0.9M394 189.1h0.9M413.6 175.7h0.9M406.2 180.5h0.9M404.5 180.3h0.9M393.6 188.4h0.9M395.1 186.5h0.9M404.1 181.8h0.9M403 182.3h0.9M409.7 177h0.9M396.5 187h0.9M402 182.8h0.9M407.4 180.6h0.9M392.8 187.9h0.9M402.3 181.4h0.9M406.1 179.4h0.9M402.5 182.2h0.9M381.7 180.7h0.9M388.9 189.2h0.9M381.3 181.2h0.9M389 189.4h0.9M383.3 183.9h0.9M380.4 180.2h0.9M388.4 188.9h0.9M385.2 185h0.9M380.5 180h0.9M388.7 187.5h0.9M380.3 180h0.9M386 186.9h0.9M385.1 184.6h0.9M385.8 184.2h0.9M386.8 187h0.9M380.8 179.4h0.9M383.7 183.2h0.9M383.7 184.7h0.9M382 180.5h0.9M385.1 183.9h0.9M388.3 187.7h0.9M384.7 185.8h0.9M381.1 181.7h0.9M384.2 183.6h0.9M383.1 183.8h0.9M380.6 180.1h0.9M387.9 187.6h0.9M385.8 185.8h0.9M383.2 183.6h0.9M385 185.7h0.9M385 186h0.9M379 179.4h0.9M378 181.7h0.9M380.4 178.8h0.9M377.6 177.5h0.9M380.4 180.7h0.9M379.4 180h0.9M376.4 179.1h0.9M378.9 178.8h0.9M377 179.5h0.9M422.2 169.9h0.9M422.1 164h0.9M431.3 176h0.9M428.1 170.3h0.9M414 171.2h0.9M425.4 183.7h0.9M432.3 169.6h0.9M351.1 189.1h0.9M351.7 187.9h0.9M351.9 190.6h0.9M354.3 186.3h0.9M353.6 188.6h0.9M350.8 186.1h0.9M352.1 189.9h0.9M352.1 190h0.9M351.3 180.5h0.9M353.9 186.4h0.9M350.1 156.5h0.9M351.8 156h0.9M498 164.1h0.9M477.3 149.6h0.9M481.7 156.1h0.9M476.3 147.3h0.9M483.6 154.3h0.9M447.9 142.7h0.9M473.3 164.8h0.9M471.9 163.1h0.9M455 149.1h0.9M454.2 153.8h0.9M478.2 159h0.9M474 143h0.9M462 141.7h0.9M446.4 141.7h0.9M477.5 159.8h0.9M470.1 160.9h0.9M483.2 151.3h0.9M483 169.8h0.9M453.2 149.3h0.9M464.3 153.6h0.9M485.1 157.3h0.9M493.7 173.2h0.9M475.4 148h0.9M476.6 162.9h0.9M474 164.6h0.9M485.4 167.2h0.9M497.3 163.9h0.9M469.2 163h0.9M477.8 145.4h0.9M481.9 156h0.9M489.1 169.2h0.9M455.9 147.8h0.9M483.7 163.1h0.9M473.2 144.3h0.9M475 164h0.9M482.8 162.9h0.9M458.2 152.6h0.9M494.1 167.4h0.9M472.3 148.8h0.9M456.7 154.6h0.9M473.5 165.3h0.9M475 145.4h0.9M468 151.9h0.9M483.8 163.8h0.9M469.1 155.6h0.9M488.8 164h0.9M487.5 165h0.9M478.1 161.9h0.9M491.7 166.4h0.9M474 146.1h0.9M495.8 165.8h0.9M469.2 152.5h0.9M476.9 154.4h0.9M469.8 165h0.9M472.2 166.5h0.9M475.7 163.7h0.9M455.4 142.8h0.9M490.4 165.6h0.9M464.8 149.1h0.9M459 141.5h0.9M488 167.3h0.9M492.1 160.6h0.9M467.9 147h0.9M482 168h0.9M488.1 163.3h0.9M444.4 139.2h0.9M459.5 147.2h0.9M475.5 155.7h0.9M462.9 154.3h0.9M471.4 152.6h0.9M471.4 150.4h0.9M488.6 166.7h0.9M487.2 158.8h0.9M470.3 147.5h0.9M443.2 137.2h0.9M460.6 140.1h0.9M462.7 155.6h0.9M480.6 152.4h0.9M466.1 145.3h0.9M493.3 172.3h0.9M464.5 158.5h0.9M475.1 167.9h0.9M472 154.7h0.9M456 138.8h0.9M478.9 157.5h0.9M467.1 145h0.9M465.6 144.1h0.9M460.9 148.8h0.9M463 156.6h0.9M467.9 142.8h0.9M464.3 159.1h0.9M457.8 144.9h0.9M472.2 143.4h0.9M480.6 151.8h0.9M490.2 161.4h0.9M485 171h0.9M483.1 178.7h0.9M483.8 178.9h0.9M461.7 159.2h0.9M464.2 162.1h0.9M478.3 172.3h0.9M457.1 153.2h0.9M469.9 164.5h0.9M477.1 172.3h0.9M463.7 159.9h0.9M484.7 181.1h0.9M464.1 160.2h0.9M473.4 169.3h0.9M461 157.4h0.9M479.6 175.4h0.9M458.9 155.6h0.9M459.5 155.8h0.9M468.7 164.5h0.9M471.7 166.8h0.9M482 178.6h0.9M461.6 157.6h0.9M474.5 169.8h0.9M469 166.5h0.9M468.4 164.7h0.9M485.3 179.1h0.9M466.1 162h0.9M483.3 178.8h0.9M483.1 178.5h0.9M489 183.5h0.9M460.4 156.9h0.9M469.6 164.4h0.9M456.9 152.4h0.9M486.9 184.1h0.9M484.7 180.6h0.9M466.8 163.1h0.9M466.8 161.4h0.9M461.2 157.1h0.9M476.8 173.2h0.9M465 160.6h0.9M484.2 180.5h0.9M466.5 162.2h0.9M473 167.9h0.9M488.4 184.2h0.9M484.1 178.9h0.9M462.2 158.4h0.9M467.8 163.6h0.9M488.8 183.5h0.9M484.4 180.8h0.9M488.2 185h0.9M464.4 161.3h0.9M465.4 161.8h0.9M456.2 153.4h0.9M458.7 155.7h0.9M479.7 173.8h0.9M474.6 168.9h0.9M472.2 167.2h0.9M476.4 171h0.9M463.8 159.9h0.9M483.6 178.9h0.9M485.9 183h0.9M477.3 172.5h0.9M460.2 157.9h0.9M484.1 180.8h0.9M464.4 160.3h0.9M469.5 164.5h0.9M468.4 165.8h0.9M476.8 172.2h0.9M470 166.6h0.9M479.5 175.3h0.9M486.3 182h0.9M458.5 154.2h0.9M469 165.7h0.9M473.1 168.1h0.9M474.6 168.7h0.9M460.7 156.9h0.9M480.9 174.6h0.9M471.7 166.6h0.9M469.1 165.9h0.9M486.4 180.7h0.9M483 178.7h0.9M478.5 174.7h0.9M468.2 164h0.9M489.3 183.6h0.9M483.1 179.7h0.9M463.5 160.8h0.9M466.1 162.8h0.9M481.4 177.2h0.9M461.1 157.6h0.9M472 167.6h0.9M473.4 169.2h0.9M463.2 159.9h0.9M457.7 153.8h0.9M483.9 179.7h0.9M463.6 158.4h0.9M484.9 178.4h0.9M464.2 159.6h0.9M468.2 163.6h0.9M473.7 170.3h0.9M488.5 184.1h0.9M474.3 169.9h0.9M459.4 156.2h0.9M486.6 181.2h0.9M463.6 157.5h0.9M459.5 155h0.9M457.6 152.8h0.9M480.3 171.2h0.9M493.5 180.5h0.9M488.2 173.5h0.9M504 173.9h0.9M500.9 174.9h0.9M512.3 185.7h0.9M505.9 179.2h0.9M512.6 183.3h0.9M506.6 179.1h0.9M513.8 184.2h0.9M499.2 173.1h0.9M514.9 184h0.9M503.8 176h0.9M504.4 176.4h0.9M504.6 179.6h0.9M512.6 183.7h0.9M499.7 171.5h0.9M510.9 184.8h0.9M514.4 185h0.9M500.1 170.7h0.9M514.8 184.9h0.9M502.1 175.5h0.9M499.7 173.4h0.9M506.8 179.3h0.9M506.3 180.5h0.9M465.8 207.9h0.9M521.4 183.3h0.9"/>
<path stroke="#ffee00" d="M312.5 265.6h0.9M312.9 266.8h0.9M313.1 265.4h0.9M313 266.7h0.9M312.7 266.4h0.9M313.4 266.6h0.9M312.5 266.9h0.9M312.4 266.4h0.9M313.4 265.7h0.9M312.9 267.9h0.9M311.8 266.2h0.9M314.2 268h0.9M312.3 266h0.9M311.4 264.5h0.9M313.8 268.5h0.9M312 266h0.9M306.8 270h0.9M303.7 265.6h0.9M295.7 280.9h0.9M298.9 274.7h0.9M297.5 279.9h0.9M297.9 278.9h0.9M299.2 278.4h0.9M303.1 270.1h0.9M301.1 270.7h0.9M295.3 275.6h0.9M296.6 278.8h0.9M402.3 170.5h0.9M409.4 168h0.9M396.7 173.3h0.9M408.6 169.6h0.9M395.5 174.1h0.9M387.8 182.8h0.9M404 170.7h0.9M410.8 166.6h0.9M409.1 166.3h0.9M388.7 181.6h0.9M395.7 174.9h0.9M410.6 165.6h0.9M394.3 175.3h0.9M409.6 165.8h0.9M402.8 173.5h0.9M399.4 172.3h0.9M403.1 170.8h0.9M401.2 174.5h0.9M387.8 182h0.9M404.5 169h0.9M409.2 167.6h0.9M390 179.6h0.9M407.3 168.3h0.9M407 169.3h0.9M406.5 168.1h0.9M396.2 173.9h0.9M400.3 171.2h0.9M387.1 181.4h0.9M401.7 172.4h0.9M390.6 177.3h0.9M405.7 168.5h0.9M401.8 172.7h0.9M398.8 173.3h0.9M407.9 170.4h0.9M408.2 169.6h0.9M409.9 168.2h0.9M410.7 167.4h0.9M411 166.3h0.9M408.4 166.3h0.9M406.7 167.3h0.9M412.5 165.9h0.9M413.5 176.6h0.9M409.4 178.3h0.9M391.7 189.9h0.9M409.9 179.3h0.9M393.2 188.9h0.9M403 183.6h0.9M407.1 180.7h0.9M401.8 184.6h0.9M395.7 188.6h0.9M400.2 185.5h0.9M398.1 185.7h0.9M392.8 188.2h0.9M396.8 187.7h0.9M409.1 180h0.9M403.5 183.3h0.9M393.9 189.3h0.9M394 188.4h0.9M395.2 187.5h0.9M408 178.9h0.9M390.2 189.9h0.9M399.6 184.1h0.9M405 182.5h0.9M414.9 176.5h0.9M395.7 187.5h0.9M413.1 176.9h0.9M392 189.9h0.9M399.9 185.3h0.9M399.4 185.2h0.9M394 188.9h0.9M412.8 178.1h0.9M404.4 181.5h0.9M402 183.9h0.9M399.2 184.3h0.9M414 176.1h0.9M399.7 185.5h0.9M402.2 183.8h0.9M394.4 188h0.9M395.9 187.5h0.9M394.2 188.6h0.9M405.9 180.2h0.9M392.4 189.2h0.9M414 177.2h0.9M391.4 190.1h0.9M403.6 182.3h0.9M397.7 185.3h0.9M395.5 188.6h0.9M405.9 180.4h0.9M394.5 187.6h0.9M398 186h0.9M401 184h0.9M396.7 188h0.9M391.6 190.2h0.9M405.2 182h0.9M411 177.5h0.9M402.5 183.4h0.9M405.9 180.9h0.9M412.4 178.2h0.9M401.9 184.8h0.9M412.8 176.9h0.9M402.3 183.1h0.9M411.4 178.5h0.9M396.4 187.4h0.9M396.6 187.9h0.9M393.3 189.6h0.9M403.9 183.1h0.9M390.6 191.7h0.9M394.6 187.7h0.9M401 185.1h0.9M393.6 189.6h0.9M393.2 188.7h0.9M395.2 187.5h0.9M390.2 192.1h0.9M394.7 187.1h0.9M393.1 189h0.9M402.1 183.8h0.9M407 180.8h0.9M405.2 180.8h0.9M411.3 177.7h0.9M383.9 183.7h0.9M389.1 188.1h0.9M386.3 184.8h0.9M388.4 187.6h0.9M382.8 181.9h0.9M381 180.2h0.9M387.5 186.3h0.9M384.6 184h0.9M389.2 189.5h0.9M387.9 187.3h0.9M388.6 188.9h0.9M381.8 180.3h0.9M387.2 187.3h0.9M381.5 180.8h0.9M385.5 184.6h0.9M383.5 182.9h0.9M382.2 180.3h0.9M381.4 179.7h0.9M382 180.3h0.9M384.6 183.2h0.9M382 181.9h0.9M383 182.1h0.9M388.5 186.9h0.9M383.6 181.6h0.9M390.2 188.4h0.9M384.5 182.8h0.9M381.2 179.9h0.9M382.5 181.2h0.9M381.8 180.1h0.9M382.1 180h0.9M388.1 187.4h0.9M386.1 185.6h0.9M382.8 182.5h0.9M379.3 178.1h0.9M377 175.2h0.9M379.2 177.7h0.9M380.7 179.8h0.9M381.2 179.9h0.9M378.2 180.7h0.9M378.8 179.3h0.9M379.2 177.3h0.9M379.7 180.6h0.9M377.1 179.2h0.9M378.6 177.8h0.9M377 180.2h0.9M378.6 178.4h0.9M430.7 172.1h0.9M438.9 161.7h0.9M442.3 164.1h0.9M414.1 165.2h0.9M421.3 170.1h0.9M427.1 179.5h0.9M416.1 169.1h0.9M426.8 159h0.9M435.8 160.9h0.9M444.2 172.9h0.9M445.3 169.9h0.9M421 167.1h0.9M422.4 178.7h0.9M436.1 166.4h0.9M442.4 169.5h0.9M443.1 180.3h0.9M431.3 180.8h0.9M434.1 167.7h0.9M432.3 184.1h0.9M431.5 171.8h0.9M439.2 178.9h0.9M419.5 170.3h0.9M424.3 163.2h0.9M439 181.6h0.9M419.9 166.7h0.9M422 174.2h0.9M419.3 180.7h0.9M425.8 167.7h0.9M418.2 170.4h0.9M441.5 145.6h0.9M439.9 145.5h0.9M448.3 145h0.9M442.9 139.3h0.9M440.4 149.2h0.9M447.2 143h0.9M439.5 150.9h0.9M443.3 143.7h0.9M443.8 141.1h0.9M443.3 151.8h0.9M448.6 143.1h0.9M359.3 134.5h0.9M353.2 189.1h0.9M353.1 189.1h0.9M351.1 186.1h0.9M352.5 187.6h0.9M349.7 184.1h0.9M351 182.5h0.9M350.4 186.1h0.9M350.4 190.2h0.9M350.6 185.4h0.9M349.9 187.7h0.9M350.4 185.4h0.9M353.2 191.1h0.9M481.6 148.9h0.9M479.1 152.4h0.9M461.9 148.5h0.9M471.5 156.8h0.9M494.2 169.6h0.9M475.7 161.6h0.9M445.7 139.4h0.9M470.3 158.4h0.9M472.4 142.6h0.9M458 157.7h0.9M483.6 153.1h0.9M489 158.1h0.9M475.9 158.7h0.9M470.2 156.9h0.9M468.1 157.2h0.9M467 143.4h0.9M482.7 158.9h0.9M479.2 153.9h0.9M472.1 148.8h0.9M476.2 146.5h0.9M475.4 147.1h0.9M472.4 153.2h0.9M482 148.8h0.9M476.5 165.4h0.9M471.8 163.3h0.9M477.2 151h0.9M484.8 171.3h0.9M471.7 152.2h0.9M457.4 144.8h0.9M454.6 154h0.9M466.1 161.8h0.9M449.6 144.8h0.9M466.8 146.6h0.9M466.2 151.7h0.9M487.8 153.2h0.9M465.6 142h0.9M474.7 168.2h0.9M468.7 141.5h0.9M469 166.9h0.9M495.3 162.9h0.9M469.6 146.8h0.9M474.4 164.6h0.9M472.1 149.1h0.9M453.1 140.8h0.9M461 148.4h0.9M475.6 148.8h0.9M460.8 141.4h0.9M476.1 144.9h0.9M488.9 170.2h0.9M485.9 160.2h0.9M496.3 166.5h0.9M492.3 163h0.9M489.6 163.3h0.9M459.4 155.2h0.9M494.9 171h0.9M492.6 165.7h0.9M473.5 165.8h0.9M470.6 161.2h0.9M478.6 150.2h0.9M487.7 161.7h0.9M464.2 147.3h0.9M466.2 144.7h0.9M460.9 160.7h0.9M486 171.7h0.9M447.9 141.5h0.9M492.2 167h0.9M496.5 166.9h0.9M466.7 147h0.9M494.8 161.6h0.9M458.9 150.6h0.9M497.1 168.6h0.9M466.9 164.8h0.9M454.8 140.1h0.9M475.7 161.3h0.9M489.1 171.7h0.9M494.3 163.1h0.9M470.4 166.8h0.9M471.2 161.2h0.9M465.3 144h0.9M480.6 155.9h0.9M481.9 148.6h0.9M471.3 163.4h0.9M462.3 147.4h0.9M481 165.4h0.9M483.1 163.2h0.9M475.5 162.6h0.9M485.7 158.5h0.9M452.8 150.7h0.9M465.2 141.7h0.9M454.9 155.4h0.9M467.6 143.9h0.9M485.1 157.3h0.9M486.2 165.5h0.9M469 145.8h0.9M480.2 148.2h0.9M481.3 148.1h0.9M470.3 142.7h0.9M494.7 162.8h0.9M494.7 163.7h0.9M491.6 159.5h0.9M468.5 160.8h0.9M471.8 153.1h0.9M458.9 143.9h0.9M487.3 156.1h0.9M477.7 152.7h0.9M469.4 145h0.9M472.4 146.2h0.9M455.5 144.2h0.9M450.9 152h0.9M447 138.6h0.9M486.5 158.6h0.9M467.4 162.1h0.9M464.6 140.7h0.9M483.7 151.3h0.9M481 166.1h0.9M470.9 146h0.9M472.4 145.2h0.9M449 143.3h0.9M469.8 152.9h0.9M447.9 141.2h0.9M461.2 144.3h0.9M455 145.2h0.9M480.7 162.5h0.9M490.6 163.2h0.9M490.2 155.4h0.9M483.1 154.7h0.9M485.5 167.4h0.9M490.4 169h0.9M466.7 161.5h0.9M461.4 147.6h0.9M458.7 144.9h0.9M447 143.7h0.9M476.3 150.3h0.9M466.4 150.1h0.9M464.2 148.9h0.9M489.5 161.3h0.9M485.1 165.6h0.9M476.9 165.4h0.9M476.6 154.3h0.9M484.3 158.7h0.9M488.4 161.9h0.9M469.2 149.9h0.9M477.1 155.7h0.9M470.6 155.3h0.9M459.7 145h0.9M493.9 168.2h0.9M460 158.8h0.9M487.9 169.4h0.9M462.5 157h0.9M452.7 146.4h0.9M481.6 163.4h0.9M478.9 148.4h0.9M449.4 150.6h0.9M499.4 161.8h0.9M486.8 159.9h0.9M478.7 158.1h0.9M475.7 153.9h0.9M454 147h0.9M461.1 159.2h0.9M497.6 166.8h0.9M448.3 141.5h0.9M487.8 169.5h0.9M449.2 150.3h0.9M456.6 157h0.9M480.2 169.5h0.9M478.2 153h0.9M485.3 171.5h0.9M492.1 168h0.9M485.9 160.8h0.9M478 166.8h0.9M463 143.1h0.9M481.7 163.6h0.9M474.6 169.1h0.9M469.9 163.6h0.9M469.7 165.9h0.9M471 165.2h0.9M463.5 159.9h0.9M464.2 159.4h0.9M457.5 153.2h0.9M462.5 157h0.9M486.5 180.1h0.9M477.3 171.1h0.9M485.6 180.3h0.9M483.1 176.6h0.9M489.7 183.2h0.9M486.8 181.7h0.9M481 175.5h0.9M485.8 181.3h0.9M470.5 165.1h0.9M463 158.5h0.9M479.7 174.8h0.9M485.6 179.2h0.9M472.1 166.6h0.9M461.6 157.1h0.9M471.8 167.2h0.9M461.2 155.7h0.9M483.1 178.5h0.9M459.5 154h0.9M489 183.1h0.9M480.8 175.6h0.9M481.4 176h0.9M480 175.2h0.9M480.3 174.6h0.9M464.4 160.2h0.9M475.7 170.7h0.9M468.1 162h0.9M481 175.8h0.9M481.9 175.7h0.9M457.8 153.1h0.9M475 170.9h0.9M489 183.5h0.9M482.8 177.6h0.9M481.3 175.1h0.9M465 158.9h0.9M487.1 181h0.9M479.4 174.7h0.9M472.8 167.3h0.9M474.6 170.2h0.9M466.4 161.7h0.9M465.1 159.4h0.9M483.9 178.6h0.9M480.5 175.2h0.9M474.5 168.3h0.9M486.9 181.4h0.9M482.3 176.2h0.9M468.4 163h0.9M475.8 171.1h0.9M462.9 157.1h0.9M487.6 183h0.9M477.1 171.4h0.9M464.4 158.4h0.9M469.9 166.1h0.9M471.2 166.2h0.9M458.3 153.4h0.9M476.7 172.5h0.9M481.1 176.3h0.9M481.6 176.2h0.9M485.2 180.1h0.9M466.2 161.2h0.9M466.3 160.7h0.9M460.8 156.2h0.9M465.4 159.2h0.9M485.1 178.7h0.9M489.3 184.6h0.9M474.1 166h0.9M487.2 175.9h0.9M486.3 174.6h0.9M488.6 175.2h0.9M480.7 173.6h0.9M480.3 166.5h0.9M468.7 158.8h0.9M466.5 160.2h0.9M471.2 160.1h0.9M477.9 166.1h0.9M465.4 159.1h0.9M486.1 178h0.9M492.4 178.8h0.9M472.6 165h0.9M469.1 159.9h0.9M487.2 174.1h0.9M482.9 174.2h0.9M471.1 164.2h0.9M462.3 152.3h0.9M472.8 161.7h0.9M468.2 159.1h0.9M477.1 163.4h0.9M461.2 152.8h0.9M457.9 152h0.9M485.5 173.4h0.9M482.7 174.1h0.9M482.8 173.3h0.9M487.3 173.6h0.9M473.2 162.7h0.9M463.5 155.9h0.9M479 172.5h0.9M489.9 181.3h0.9M473.6 160.9h0.9M467 157.8h0.9M493.4 181.1h0.9M463.4 152.2h0.9M483.8 172.4h0.9M471.2 162.8h0.9M487.5 176.2h0.9M480.1 167.5h0.9M487.3 175.5h0.9M460.8 149h0.9M471.9 164h0.9M477 163.7h0.9M477.6 168.4h0.9M489.8 181.6h0.9M468 158.2h0.9M479.8 172.6h0.9M468.4 160.2h0.9M479.7 170.1h0.9M487.2 175.2h0.9M478.4 170.4h0.9M474.9 161.6h0.9M467.1 158.1h0.9M476.3 164.1h0.9M473 162.4h0.9M484.4 174.4h0.9M483.9 174.2h0.9M473.7 167.2h0.9M476.6 164.5h0.9M463.1 150.2h0.9M486 173.9h0.9M461 152h0.9M485.9 177.9h0.9M472.5 164.4h0.9M467.9 155.8h0.9M487.7 174.5h0.9M493.4 180h0.9M473.5 166.9h0.9M485.7 177.5h0.9M464.9 158.6h0.9M479.9 173.6h0.9M474.6 164.2h0.9M478.1 169.2h0.9M491 182.4h0.9M473.2 163.9h0.9M502.3 173.5h0.9M513.2 184.3h0.9M506.3 177.5h0.9M511.4 182.5h0.9M505.8 178.3h0.9M512.7 182.1h0.9M514.2 183.7h0.9M510.1 179.7h0.9M513.3 185.2h0.9M505.5 177.3h0.9M468.6 209.8h0.9M469.7 208.5h0.9M473.3 213.2h0.9M464.6 209.6h0.9M470.1 206.2h0.9M472.3 219.9h0.9M470.5 213.6h0.9M470.8 218.9h0.9M475.6 200.7h0.9M474.6 213.7h0.9M462.8 210.1h0.9M466.1 210.5h0.9M474.2 218.2h0.9M467.5 207.8h0.9M475.7 212.2h0.9M469.3 213.7h0.9M475.6 204.5h0.9M472.1 218.3h0.9M526.7 192.4h0.9M521.9 184.5h0.9M527.3 193.5h0.9M529.3 194.2h0.9M523 184.7h0.9M520.6 182.3h0.9M523.3 187h0.9"/>
<path stroke="#becc00" d="M259.8 253h0.9M262 242h0.9M262.7 250.5h0.9M265.3 244.1h0.9M262.7 245.4h0.9"/>
<path stroke="#eeff00" d="M313.2 265.5h0.9M311 264h0.9M310.4 264.4h0.9M312.3 264.8h0.9M311.8 266h0.9M310.8 262.4h0.9M311.8 265.2h0.9M312.9 265.7h0.9M311.3 263.7h0.9M313.8 266.4h0.9M311.4 263.4h0.9M311.5 263.8h0.9M311.9 266.3h0.9M313 265.8h0.9M313.4 266.5h0.9M310.7 263.9h0.9M307.7 262.6h0.9M302.4 271.9h0.9M296.5 273.4h0.9M301.8 267.3h0.9M310.9 263.5h0.9M298.4 275.6h0.9M308.1 259.8h0.9M301.5 270.6h0.9M291.5 276.5h0.9M300.5 274h0.9M301 271.9h0.9M302.2 268.3h0.9M386.9 182.2h0.9M398.8 173.8h0.9M401.7 172.1h0.9M410.2 167.7h0.9M388.1 177.4h0.9M395.4 175.9h0.9M396.7 173.7h0.9M398.5 174h0.9M398.7 173.6h0.9M409.8 165.4h0.9M387.9 177.8h0.9M399.2 172.6h0.9M403.2 169.2h0.9M390.8 179.2h0.9M391.5 177.3h0.9M391.5 175.7h0.9M398 172.9h0.9M388.5 181h0.9M389.9 178h0.9M402.8 170.3h0.9M397 173.1h0.9M407.8 166.2h0.9M386.9 181.3h0.9M392.6 175.4h0.9M404.2 168.1h0.9M398.3 171.5h0.9M411.5 163.7h0.9M408.4 165.2h0.9M412.5 165.3h0.9M409.4 164.9h0.9M414.3 163.1h0.9M413 165.8h0.9M413 163.4h0.9M408.2 168.7h0.9M411.2 163.2h0.9M411.4 163.1h0.9M409.2 164.8h0.9M413.2 163.9h0.9M412.9 164.9h0.9M409.4 164.9h0.9M393.5 189.6h0.9M389.4 192h0.9M400.3 185.8h0.9M412.8 177.8h0.9M398.1 186.3h0.9M398.6 186.4h0.9M403.4 183.3h0.9M402 183.8h0.9M409.6 179.9h0.9M402.1 184.4h0.9M394.8 188.3h0.9M412 178.3h0.9M395.1 188.1h0.9M389.3 192.6h0.9M411.9 178.1h0.9M401 185.4h0.9M398.5 186h0.9M395.9 188.3h0.9M394.5 189.4h0.9M414.5 176.6h0.9M396.4 187.7h0.9M403.4 183.8h0.9M397.9 187.3h0.9M396.5 188.2h0.9M408.2 179.9h0.9M401.6 184.5h0.9M413.9 177.3h0.9M393.4 189h0.9M404.4 183.3h0.9M392 189.6h0.9M412.9 177.7h0.9M403.8 183.8h0.9M394 189.3h0.9M390.4 191.4h0.9M404.6 182.8h0.9M397.6 187.1h0.9M409.5 180.2h0.9M414.9 176.4h0.9M398.2 186.1h0.9M411.6 178.3h0.9M393.9 189.6h0.9M391.7 191h0.9M394.7 189.2h0.9M414.7 177h0.9M382.8 180.5h0.9M385.1 182.9h0.9M389.7 188.7h0.9M385.4 182.9h0.9M389.3 187.9h0.9M384.8 182.7h0.9M384.9 183.6h0.9M384.7 182.2h0.9M386.8 185h0.9M382.3 180.4h0.9M385.9 183.5h0.9M386.8 184.7h0.9M385.6 183.8h0.9M389.8 188.4h0.9M376.6 177.8h0.9M375.3 176.5h0.9M374 176.7h0.9M377.8 180.3h0.9M378.9 178.9h0.9M376 175.7h0.9M376.4 178.8h0.9M380.2 178.6h0.9M380.5 179.2h0.9M375.8 175.8h0.9M379.3 177.8h0.9M439.6 182.4h0.9M430.3 164.7h0.9M421 180.2h0.9M439.1 163.8h0.9M418.2 174.3h0.9M439.9 164.6h0.9M434.2 174.1h0.9M441.1 170.6h0.9M438.4 173.2h0.9M420.5 160h0.9M434.4 165.2h0.9M440.7 181.1h0.9M424.6 173.3h0.9M437.4 180.8h0.9M425.5 159.1h0.9M415.5 166.6h0.9M413 162.7h0.9M413 165.1h0.9M443.4 173.8h0.9M417.7 167.2h0.9M429.6 174.9h0.9M414.5 177.7h0.9M420.5 160.8h0.9M414.6 174h0.9M446.5 172.3h0.9M430 182.5h0.9M424.4 179.9h0.9M426.8 178.8h0.9M426.5 183.4h0.9M434.9 177.4h0.9M446.1 175.5h0.9M422 179.6h0.9M434.8 173.2h0.9M417.7 170.8h0.9M435.4 164.9h0.9M435 183.9h0.9M428.2 173.7h0.9M441.3 167h0.9M440.9 168.2h0.9M418.4 176.6h0.9M432.7 160.8h0.9M432.4 184.3h0.9M434.1 163.9h0.9M444.6 175.9h0.9M428.8 177.4h0.9M442.8 165.3h0.9M447.2 143.7h0.9M436.8 146.8h0.9M446 143.5h0.9M446 148.7h0.9M440.8 150.2h0.9M443.4 137.3h0.9M438.3 150.5h0.9M441.5 144.1h0.9M445.3 151.4h0.9M436.7 134.8h0.9M442.8 139.6h0.9M442.4 137.3h0.9M443 141.7h0.9M440.7 148.5h0.9M444 139.8h0.9M443.8 151.4h0.9M437.7 148.3h0.9M448.6 143.7h0.9M433.9 133.4h0.9M356.9 132.7h0.9M358.1 133h0.9M358.2 134.9h0.9M358.8 134.3h0.9M360.8 132.7h0.9M356.4 132.8h0.9M358.9 134.6h0.9M351.5 186h0.9M351.6 182.9h0.9M353.7 184.8h0.9M353.8 185.9h0.9M350.3 183.5h0.9M352.2 191.8h0.9M354.3 185.3h0.9M352.5 180.8h0.9M350.8 184.4h0.9M350.5 187.4h0.9M351.4 180.6h0.9M350.4 156.4h0.9M351.8 154h0.9M474.8 153h0.9M479.7 146.5h0.9M491 159.1h0.9M473.3 150.3h0.9M459.6 144.6h0.9M469.9 164.6h0.9M485.3 167.6h0.9M477.4 168.2h0.9M468.7 164.1h0.9M444.9 140.7h0.9M477.5 145.4h0.9M473.8 151.5h0.9M473.3 150h0.9M467.4 162.2h0.9M449.4 147.2h0.9M449.3 146.7h0.9M459.9 142.5h0.9M468.2 145.9h0.9M476.7 156h0.9M481.3 150.7h0.9M491.8 157.4h0.9M463.9 162.6h0.9M470.6 153.6h0.9M470.4 163.5h0.9M494.7 165.6h0.9M462.2 161.1h0.9M470.1 147.4h0.9M472.1 142.6h0.9M457 142.1h0.9M471.6 160h0.9M485.2 151.1h0.9M484.5 153.7h0.9M461.9 148.7h0.9M470.3 140.8h0.9M465.7 157h0.9M472.9 145.4h0.9M495.2 172.3h0.9M477.1 152h0.9M482.4 168.1h0.9M482 156.3h0.9M490.7 172.4h0.9M495.1 172.1h0.9M480.8 149.6h0.9M471.9 141.8h0.9M454.6 140.3h0.9M474.5 156.5h0.9M452.6 139.5h0.9M473.5 147.7h0.9M445.9 141.8h0.9M464.1 157.2h0.9M447.9 147.4h0.9M480.6 159h0.9M473.1 143.8h0.9M481.8 152.7h0.9M491.6 165h0.9M471.8 156.1h0.9M460.8 151.5h0.9M484 157h0.9M467.9 160.6h0.9M483 170.6h0.9M466 156h0.9M477.5 164.4h0.9M486.7 180.1h0.9M479.6 174.3h0.9M478.1 171.9h0.9M463.6 157.9h0.9M458.2 152.3h0.9M477.4 171.6h0.9M471.4 166.1h0.9M458.1 152.5h0.9M463 157.3h0.9M485.9 179.3h0.9M474.9 169h0.9M471.7 165.9h0.9M466.3 160.8h0.9M486.7 180.4h0.9M469.2 163h0.9M469.1 163.3h0.9M482.2 175.8h0.9M475.6 169.8h0.9M466 160.1h0.9M483.2 176.8h0.9M458.9 153.1h0.9M477.8 171.4h0.9M464.5 155.2h0.9M460 153.6h0.9M465.1 153.1h0.9M493.2 179.2h0.9M462.4 156.6h0.9M462.5 151.5h0.9M464.3 154h0.9M468.9 156.1h0.9M467.6 160.4h0.9M485 177.1h0.9M470.4 158.5h0.9M477.7 166.6h0.9M486.7 178.5h0.9M472.3 158.5h0.9M483.1 172.9h0.9M473.2 160.2h0.9M478.7 168.5h0.9M466.1 155h0.9M468.4 157.8h0.9M471.9 165.5h0.9M482 167.6h0.9M484.5 176.1h0.9M465.4 157.2h0.9M473.8 166.9h0.9M461.9 149.3h0.9M469.2 157.2h0.9M460.8 151h0.9M460.1 152.5h0.9M460.9 151.3h0.9M462.2 156.6h0.9M460.6 155.2h0.9M475.3 163.2h0.9M488.4 177.5h0.9M474.4 161.9h0.9M460.4 149.1h0.9M461.4 155.9h0.9M474 163.3h0.9M467 161.2h0.9M469.6 160.9h0.9M484.3 171.9h0.9M458.4 152.2h0.9M462.2 157h0.9M458.8 152.7h0.9M485.6 175.3h0.9M466.1 156.2h0.9M475.8 167.1h0.9M471.3 163.9h0.9M471.4 159.9h0.9M465.2 154.4h0.9M460.6 148.5h0.9M460.8 153h0.9M469.3 162.7h0.9M467.3 156h0.9M483.7 174.9h0.9M464.4 159.2h0.9M470.7 157.8h0.9M460.6 149.7h0.9M463.2 153.5h0.9M479.6 167h0.9M465.2 154.2h0.9M464.4 155.2h0.9M514 183.4h0.9M502.1 172.4h0.9M480.4 209.5h0.9M472.4 211.9h0.9M480 199.5h0.9M473.8 216.5h0.9M469.7 213.1h0.9M480.4 208.7h0.9M469.6 214.6h0.9M472.5 215.2h0.9M482.8 200.3h0.9M468.9 215h0.9M476.8 201.9h0.9M473.2 214.6h0.9M466.3 208.3h0.9M478.6 208.8h0.9M480.2 212.4h0.9M472.4 212.5h0.9M463.1 211.2h0.9M477.1 206.2h0.9M481.6 216.7h0.9M474.1 214.1h0.9M473 207.3h0.9M480.3 202.4h0.9M472.3 213.7h0.9M487.3 211.4h0.9M469.4 215.1h0.9M476.1 216.2h0.9M477.7 214.8h0.9M468.1 213.2h0.9M471 216.6h0.9M465.6 210.5h0.9M479.9 219.9h0.9M475.2 212.3h0.9M469.7 216.5h0.9M466.1 213.1h0.9M484 218.6h0.9M470.3 219.8h0.9M471.8 212.1h0.9M486.1 219h0.9M470.1 206.1h0.9M467.8 210.3h0.9M487 219.1h0.9M480.4 217.4h0.9M470.2 206.8h0.9M472 218.1h0.9M476.8 219.1h0.9M474.7 213.6h0.9M474 219.5h0.9M479.9 213.3h0.9M476.4 220.2h0.9M485.8 200.9h0.9M479.8 215.3h0.9M479.1 214.8h0.9M468.9 218.4h0.9M480.1 203h0.9M473.5 208.1h0.9M465.1 210.4h0.9M478.5 204.2h0.9M477.7 220.5h0.9M483.7 216.8h0.9M479.3 218h0.9M483.5 217.4h0.9M479.9 218.5h0.9M482.3 216.2h0.9M486.2 214.3h0.9M485.3 214.5h0.9M476.5 220.3h0.9M485.7 214.3h0.9M485.1 213.6h0.9M484.8 215.1h0.9M478.8 218.5h0.9M529.7 195.1h0.9M531 198.8h0.9M520 183.8h0.9M521.5 182.3h0.9M536.5 204.9h0.9M523.2 185.1h0.9M522.1 184h0.9M529.6 197.2h0.9M521.6 185.1h0.9M529.8 195.7h0.9M535 206.2h0.9M532.2 202h0.9M534.2 203.3h0.9M525.6 188.6h0.9M521.3 183.7h0.9M529.2 191.1h0.9M526.9 186.9h0.9M526.6 187.4h0.9M525.5 185.5h0.9M529.1 181.6h0.9"/>
<path stroke="#a3cc00" d="M266.6 251.4h0.9M263.4 247.1h0.9M260.1 252.3h0.9M260.5 243.7h0.9"/>
<path stroke="#cbff00" d="M357.8 252h0.9M355.4 252.8h0.9M309.6 260.9h0.9M311.9 263.9h0.9M311 262.5h0.9M309.3 261.9h0.9M310 262.1h0.9M310.6 261.7h0.9M309.2 262.3h0.9M312.2 264.5h0.9M310.1 262.6h0.9M310.8 263.7h0.9M310.8 264.6h0.9M309.9 263.7h0.9M311.7 263.5h0.9M311.9 265.6h0.9M311.5 263.7h0.9M292.5 272.8h0.9M307 261.2h0.9M308.5 264.1h0.9M304.2 262h0.9M301.1 265.6h0.9M304.7 268h0.9M309.4 261.3h0.9M301.1 266.1h0.9M305 263.6h0.9M293.1 274.7h0.9M304.4 267.8h0.9M299.9 267h0.9M290.9 273.3h0.9M303.3 264.4h0.9M380.6 168.5h0.9M388.8 176.7h0.9M404.1 167.8h0.9M403.3 169.7h0.9M408.9 163.1h0.9M404.8 166.3h0.9M397.9 170.7h0.9M393.1 174.6h0.9M396.1 171.4h0.9M405.5 165.4h0.9M407 166.3h0.9M402 167.3h0.9M397.1 172.5h0.9M405.3 165h0.9M403.5 169.5h0.9M396.6 172.7h0.9M406.5 165.6h0.9M405.8 168.4h0.9M410.7 164.6h0.9M392 177.2h0.9M397.4 172.2h0.9M390.8 175h0.9M385.7 179.5h0.9M402.2 169.4h0.9M405.9 168.3h0.9M410.4 163.2h0.9M410.3 163.4h0.9M405.6 168.3h0.9M406.9 165.9h0.9M407.9 164.5h0.9M411.1 163.7h0.9M406.4 165h0.9M408.4 165.6h0.9M408.8 164.8h0.9M409 163.4h0.9M412.6 163.4h0.9M409.2 165h0.9M413.5 162.1h0.9M400.3 185.6h0.9M391.7 191.3h0.9M402.8 184.4h0.9M403.3 183.8h0.9M398.5 187h0.9M396.4 188.2h0.9M387.3 185.2h0.9M386.4 184.5h0.9M382.8 180.3h0.9M390.5 188.6h0.9M384.6 182.4h0.9M378 176.1h0.9M375.2 176.9h0.9M375 177.5h0.9M374.5 176.3h0.9M375.4 178.3h0.9M374.2 176.5h0.9M445.9 172.5h0.9M417.7 174.4h0.9M431.4 172.1h0.9M436.6 175.6h0.9M445.4 165.4h0.9M415.1 167.4h0.9M437.1 161.9h0.9M442.8 164.1h0.9M418.1 166.7h0.9M431.4 162.6h0.9M433 161.6h0.9M419.3 166.2h0.9M432 168.4h0.9M413.8 164.4h0.9M422.8 174.9h0.9M446.1 170.8h0.9M413.3 166.8h0.9M429.5 159.1h0.9M432.6 166.9h0.9M431.1 170h0.9M436.1 181.9h0.9M431.3 176.6h0.9M421.7 178.9h0.9M423.8 160.7h0.9M439.4 178.3h0.9M421.9 170.5h0.9M436.8 175.7h0.9M419.8 160.4h0.9M436.3 174.7h0.9M427.7 169.7h0.9M434.7 183.9h0.9M414.6 175.4h0.9M427 140.4h0.9M429.2 146.9h0.9M426.8 153.6h0.9M442.7 137.1h0.9M428.5 146.1h0.9M443.7 138.2h0.9M436.1 150.3h0.9M446.7 148h0.9M444.5 147.9h0.9M433.8 136.1h0.9M432.9 154.3h0.9M429.8 151.9h0.9M427.5 146.9h0.9M446.9 143h0.9M427.8 132.9h0.9M437.6 146.5h0.9M445.2 141h0.9M426.4 131.4h0.9M438.5 149h0.9M440.5 141.1h0.9M430 144.9h0.9M433.3 151.1h0.9M436.8 139h0.9M431.3 138h0.9M438.9 135.9h0.9M439.5 152.1h0.9M428.2 144.4h0.9M431 138.3h0.9M431.7 136.7h0.9M428.5 150.8h0.9M424.2 154.8h0.9M437.5 147.1h0.9M444 148.4h0.9M433.1 142.4h0.9M444.6 151.5h0.9M437.7 142.1h0.9M448.3 140.8h0.9M429.7 140.6h0.9M435.5 146.1h0.9M437.8 135.1h0.9M429.3 137.4h0.9M429 141.5h0.9M445.9 146h0.9M428.8 153.9h0.9M438.5 143h0.9M440.5 148.2h0.9M424.1 153.1h0.9M444.4 142.7h0.9M427.1 148.2h0.9M430.4 134.9h0.9M440.7 142.5h0.9M424.8 141.9h0.9M438.2 140.7h0.9M430.7 147.6h0.9M433.6 151.9h0.9M443.5 149.2h0.9M437.1 136.3h0.9M358.6 130.6h0.9M358.4 132.4h0.9M358.3 135.1h0.9M357.2 132.5h0.9M358.6 129.6h0.9M359.5 133.5h0.9M355.4 132.7h0.9M360 130.1h0.9M352.3 184h0.9M351.4 180.3h0.9M352.7 182.8h0.9M352.2 156.9h0.9M480.8 217.7h0.9M470 214.9h0.9M479 212.2h0.9M473.8 213.8h0.9M480.2 215.8h0.9M486.6 219.1h0.9M488.3 216h0.9M480.9 210.8h0.9M481.7 206.7h0.9M475 209.3h0.9M489.5 202.9h0.9M489.7 205.8h0.9M476.7 215h0.9M480.5 206.6h0.9M486.9 213.1h0.9M477 216.6h0.9M476.4 218h0.9M483.2 202.9h0.9M482 215.9h0.9M487.9 212.4h0.9M482.9 213.9h0.9M480.4 205.3h0.9M475.9 213.1h0.9M480.8 204.2h0.9M486.6 204.1h0.9M491.8 211.1h0.9M480.7 200.2h0.9M490.3 214.2h0.9M478.4 211.1h0.9M479 219.4h0.9M478.2 213.4h0.9M477.8 216.8h0.9M488.6 208.1h0.9M473.7 206.7h0.9M478.7 219.6h0.9M484.8 202.3h0.9M494.8 204.8h0.9M479.7 201.8h0.9M483.3 211.6h0.9M480.9 206.2h0.9M485.2 200.8h0.9M487.7 213.6h0.9M490.6 206.7h0.9M485.7 200.6h0.9M487.8 213.5h0.9M482.2 215.8h0.9M483.2 210.5h0.9M481.5 220.3h0.9M468.3 217.8h0.9M480.4 219.7h0.9M469.5 212h0.9M481.9 217.2h0.9M474.9 217.3h0.9M479.2 210.4h0.9M478.6 213.4h0.9M477.6 220.1h0.9M474.3 209.2h0.9M488.5 210.8h0.9M444.7 234.1h0.9M453.6 230.5h0.9M453.6 228.1h0.9M445.9 232.6h0.9M452.2 227.1h0.9M451.7 235.4h0.9M446.3 227.3h0.9M454.7 235h0.9M452.9 234.1h0.9M455.9 231.4h0.9M450.5 228.4h0.9M449.7 228.8h0.9M443.8 232.7h0.9M443.8 229.5h0.9M447.3 233.4h0.9M451.4 235.4h0.9M455.2 230.3h0.9M448.4 230.1h0.9M453.9 235.7h0.9M451.4 227.9h0.9M451.8 232.2h0.9M451 234.5h0.9M450.3 231.1h0.9M451.3 226.7h0.9M446 231.4h0.9M448.2 234.3h0.9M445.6 230.5h0.9M447.9 233.7h0.9M454.4 234h0.9M448.4 235.5h0.9M455.1 229.5h0.9M443.8 231.7h0.9M448.4 234.2h0.9M446.8 234.1h0.9M446.6 232.7h0.9M454.2 232.9h0.9M451.9 225.4h0.9M447.8 234.8h0.9M454.9 228.7h0.9M450.1 233.1h0.9M449.5 235.9h0.9M451.1 235.6h0.9M444.4 233.7h0.9M454.3 230.7h0.9M446.6 235.2h0.9M448.1 236.5h0.9M466 232.5h0.9M473 227.5h0.9M475.9 228.1h0.9M473.2 228.6h0.9M470.9 229.1h0.9M473.5 228.7h0.9M476.1 226.6h0.9M475.7 227.9h0.9M472.8 228.5h0.9M474 228.2h0.9M476.8 226.2h0.9M474.8 226.8h0.9M460.9 232.6h0.9M477.2 225.7h0.9M481.1 218.5h0.9M472.8 221.8h0.9M470.4 221.6h0.9M471.7 223.8h0.9M479.4 220.4h0.9M476.9 219.4h0.9M470.8 224.4h0.9M472.5 221.6h0.9M479 216.8h0.9M481.7 218.2h0.9M471.6 220.8h0.9M483.4 214.3h0.9M480 217.2h0.9M482.5 215.7h0.9M473.2 224.3h0.9M475.3 220.3h0.9M470.3 224.1h0.9M484.2 213.8h0.9M473.1 222.7h0.9M480.2 216.7h0.9M471.9 221.4h0.9M477.2 217.2h0.9M470.8 222.2h0.9M487 215.6h0.9M475.7 220.6h0.9M475.5 219.7h0.9M483.7 215.4h0.9M480.1 216.7h0.9M479.5 216.3h0.9M480.8 219.3h0.9M478.3 220h0.9M479.5 216h0.9M472.1 222.9h0.9M483.9 213.4h0.9M473.3 220.2h0.9M479.4 215.8h0.9M527.4 194.5h0.9M531.2 199.3h0.9M532.8 201.6h0.9M533.8 202.4h0.9M523 186.7h0.9M521 184.2h0.9M526.9 191.7h0.9M541.7 213.4h0.9M521.8 185.7h0.9M536.6 205.4h0.9M523.2 188.1h0.9M529.1 195.1h0.9M527.7 191.5h0.9M540.8 213.2h0.9M537.9 209.7h0.9M540 210.5h0.9M542.2 214.5h0.9M539.4 204.1h0.9M529.4 189.7h0.9M531.3 193.2h0.9M531.1 194h0.9M524.4 182.3h0.9M537.3 202.4h0.9M525.4 184.6h0.9M524 181.7h0.9M532.4 194.1h0.9M525.6 182.5h0.9M524.5 183.2h0.9M539.5 202.9h0.9M536 199.3h0.9M532.3 193.6h0.9M532.9 195.9h0.9M535.8 197.5h0.9M536.9 201.4h0.9M526.3 186.9h0.9M530.5 184.9h0.9M526.2 179.4h0.9M531.7 185h0.9M531.5 184.9h0.9M526.9 179.3h0.9M530.2 184.8h0.9M531 187h0.9M530.6 178.1h0.9"/>
<path stroke="#88cc00" d="M260.5 241.8h0.9M263.4 241.9h0.9M258.8 246.3h0.9M256.1 242.8h0.9M264.3 240.6h0.9M258.8 247.3h0.9M261 244.2h0.9"/>
<path stroke="#aaff00" d="M356.9 247.4h0.9M356.9 249.3h0.9M356.7 248.7h0.9M356.4 251.8h0.9M364.7 249.7h0.9M362.9 247.1h0.9M363 247.1h0.9M362 246.6h0.9M361.4 247.8h0.9M363 250.3h0.9M357.7 253.7h0.9M354.9 253.6h0.9M354 252.9h0.9M353 252.5h0.9M357.1 253.3h0.9M355.7 253.8h0.9M358.4 251.1h0.9M309.8 263.6h0.9M309.9 261.5h0.9M309.6 260.5h0.9M310.4 261.5h0.9M309 261h0.9M310.5 261.7h0.9M309.3 260.8h0.9M296.7 269.3h0.9M295 272.2h0.9M290.8 278h0.9M292.8 271.1h0.9M293.3 270h0.9M298.1 266.1h0.9M293.2 271h0.9M299.6 264.3h0.9M299.9 264.7h0.9M300.4 268.9h0.9M305.2 260.7h0.9M295.8 272.1h0.9M289.8 272.9h0.9M290.3 274.1h0.9M307.8 259.8h0.9M291.6 272.8h0.9M377.4 169.9h0.9M380.4 165h0.9M387.7 158.1h0.9M406.2 151.4h0.9M389.2 160h0.9M397.3 155.2h0.9M381.3 165.4h0.9M383.5 167.6h0.9M397.3 153.6h0.9M373.4 166.9h0.9M375.6 166.7h0.9M383.5 168.3h0.9M376 162.8h0.9M374.3 168.3h0.9M374.4 165.5h0.9M389.8 160.2h0.9M391.1 163.8h0.9M404.9 155.4h0.9M387.9 160.1h0.9M384.3 167.8h0.9M381.9 168h0.9M386.8 160.1h0.9M385.2 163.4h0.9M407.9 152.9h0.9M389.1 161.1h0.9M378.3 164.1h0.9M410.9 152.3h0.9M376.2 168h0.9M389.7 165.5h0.9M376.5 160.8h0.9M392.6 163.2h0.9M395.4 159.3h0.9M376.5 169.7h0.9M397 159h0.9M406.7 154.2h0.9M402.9 168.5h0.9M402.7 168.4h0.9M395.1 172.5h0.9M403.5 167.5h0.9M409.7 163.5h0.9M405.3 166.1h0.9M385.5 179.3h0.9M389.8 177.2h0.9M411.9 161.7h0.9M402.7 168.3h0.9M399.1 171.4h0.9M409.9 164.5h0.9M399.7 169.8h0.9M411.6 161.6h0.9M412.6 161.3h0.9M413.4 159.9h0.9M408.6 162.4h0.9M406.1 165.7h0.9M410.3 163.2h0.9M408.3 161.8h0.9M408.6 164.1h0.9M409.2 162.7h0.9M413.3 159.5h0.9M375.8 175.6h0.9M432.9 183.7h0.9M437.5 165.3h0.9M433.7 161.2h0.9M436.3 160.1h0.9M430.6 161.8h0.9M428 163.7h0.9M442.2 166.7h0.9M427.5 178.3h0.9M414.7 172h0.9M430.7 184.4h0.9M427 177.8h0.9M419.6 166.2h0.9M429.3 160.4h0.9M443.3 178.3h0.9M423.8 182.9h0.9M429.5 180.3h0.9M439 178.8h0.9M433.7 183h0.9M433.3 161.5h0.9M433.4 159.3h0.9M428.9 162.8h0.9M442.2 169.2h0.9M445 180.8h0.9M415.9 167.5h0.9M422.6 168.8h0.9M427.5 171.3h0.9M417.5 163.7h0.9M430.7 157.2h0.9M432.8 180.2h0.9M419.7 141.3h0.9M423 155.3h0.9M422.3 136.3h0.9M432 137.2h0.9M437.6 138.8h0.9M443.4 144.5h0.9M422.5 137.8h0.9M425.6 148.6h0.9M435.3 136.1h0.9M434.3 150.4h0.9M432.9 149.2h0.9M419.2 144.9h0.9M436.8 142.4h0.9M429.2 136.1h0.9M434.1 148.5h0.9M416.2 135.3h0.9M434.8 151.6h0.9M425.7 148.6h0.9M422.2 137h0.9M419.4 152.8h0.9M420.8 152.2h0.9M430.3 135h0.9M430.8 142.4h0.9M426.1 142.3h0.9M421.9 151h0.9M421 152.3h0.9M429.5 147.5h0.9M424.9 139.4h0.9M429.6 153.2h0.9M435.4 135.2h0.9M433.1 140.2h0.9M427.5 134.6h0.9M432.6 153.9h0.9M440.9 140.4h0.9M429.3 132h0.9M433.9 147.2h0.9M438.7 140.4h0.9M434.6 152.7h0.9M438 149h0.9M426.6 154.8h0.9M427.6 138.6h0.9M419.6 144.3h0.9M419.5 144.4h0.9M421.9 154.2h0.9M427 142.7h0.9M435.9 140h0.9M421.2 136h0.9M434.3 152.2h0.9M423.7 153.7h0.9M425.2 134.1h0.9M442.3 148.3h0.9M441 146h0.9M433.7 143.9h0.9M423.6 135.7h0.9M429.7 133h0.9M422.4 142.3h0.9M434.9 149h0.9M420 148.5h0.9M434.6 137.2h0.9M424.7 144h0.9M429.8 134.9h0.9M424 142.5h0.9M441.3 144.4h0.9M419.1 133.8h0.9M437 150.8h0.9M420.6 140.3h0.9M422.9 133.8h0.9M432.1 153.1h0.9M357.1 127.8h0.9M358.6 134.5h0.9M354.3 155.4h0.9M488.7 204.5h0.9M493.2 205.7h0.9M485.8 201.5h0.9M485.9 215.6h0.9M484.3 203.3h0.9M490.1 216.3h0.9M493.6 211.8h0.9M493.4 210h0.9M489.8 214.7h0.9M495.3 211.4h0.9M488.9 203.5h0.9M485.8 205.9h0.9M487.4 211h0.9M495.5 211.8h0.9M489.5 214.6h0.9M493.1 208.2h0.9M491.7 209.9h0.9M493.7 212.4h0.9M482.1 220.1h0.9M492.7 205h0.9M486.6 211.5h0.9M487.7 207.8h0.9M487 219.4h0.9M489.8 202h0.9M488.9 206.6h0.9M482.8 216.7h0.9M490.6 207.1h0.9M489.3 212.6h0.9M489.3 215.4h0.9M483.6 209.4h0.9M491.4 204.4h0.9M489.8 209.2h0.9M492.5 203.6h0.9M493.9 205.7h0.9M492.9 209.3h0.9M453.4 234.8h0.9M446.2 233.4h0.9M443.7 232.1h0.9M453.9 235.4h0.9M453.4 235.4h0.9M452.6 236.8h0.9M444.3 231.5h0.9M452.1 227.5h0.9M453.5 227.8h0.9M449.2 230.2h0.9M452.7 232.5h0.9M453.5 228.2h0.9M449.4 225.8h0.9M448.7 232.2h0.9M452.3 228.6h0.9M446 235.1h0.9M447.7 228.8h0.9M449.8 228.2h0.9M450.3 233.6h0.9M455.6 230.4h0.9M448.3 235.7h0.9M448.8 230.3h0.9M446.1 228.9h0.9M446.7 235.2h0.9M447.6 233.9h0.9M447.8 232.6h0.9M452.5 233.1h0.9M453.5 227.9h0.9M453.8 233.4h0.9M451.8 226.4h0.9M448.9 237.4h0.9M449.7 224.9h0.9M447.3 227.3h0.9M453.3 231.1h0.9M453.8 234.1h0.9M446.3 227.4h0.9M445.2 229.3h0.9M451.3 234h0.9M454.4 231.6h0.9M454.9 228.2h0.9M453.7 232.3h0.9M452.9 232.6h0.9M453.9 229.6h0.9M454.1 228.5h0.9M450.6 232.1h0.9M448.8 232.2h0.9M449.6 236.7h0.9M452.5 225.3h0.9M451 231.9h0.9M450.8 236.9h0.9M445.6 235.3h0.9M449.8 228.8h0.9M450.5 227.2h0.9M451 230.7h0.9M452.1 230.8h0.9M448 230.8h0.9M451.5 232.9h0.9M444.3 228.7h0.9M447.3 228.9h0.9M452.5 233.4h0.9M446.2 226h0.9M459.1 233.8h0.9M457.7 236.4h0.9M461.6 234.6h0.9M459.6 235.5h0.9M458 234.8h0.9M467.5 232.1h0.9M463.6 232h0.9M452.4 237.9h0.9M472.2 229.3h0.9M465.6 232.2h0.9M476.4 227.8h0.9M452.7 236.6h0.9M469.4 230.7h0.9M472.7 228h0.9M464 231.3h0.9M466.3 230.9h0.9M472.1 229.1h0.9M466.8 230.4h0.9M459.2 235.4h0.9M472.5 229.5h0.9M462.3 233.8h0.9M472 228.6h0.9M460.1 235.5h0.9M461.6 233.6h0.9M452 237.2h0.9M477.1 226.2h0.9M470.1 230.8h0.9M476.5 225.6h0.9M467.3 231.8h0.9M467.4 230.7h0.9M473.9 226.8h0.9M473.4 228.5h0.9M474 228.6h0.9M465.7 232.1h0.9M466.6 232.6h0.9M473.1 228.6h0.9M470.3 230h0.9M473.2 227.5h0.9M455.4 235.7h0.9M454.8 236.8h0.9M473.1 229.4h0.9M476.9 226.1h0.9M474.7 228.9h0.9M472.4 228.4h0.9M470.7 228h0.9M458.9 233.8h0.9M454.8 235.3h0.9M478.3 219h0.9M482.5 215.3h0.9M485.5 214.2h0.9M479.2 216.9h0.9M480.6 215.7h0.9M478.1 219.2h0.9M478.1 219.6h0.9M474.1 219.8h0.9M470.8 224.4h0.9M480.7 219.5h0.9M474.5 221.2h0.9M481.6 218.2h0.9M475.6 221.2h0.9M483.6 215.5h0.9M480.6 216.9h0.9M483.2 213.8h0.9M476.4 221.5h0.9M479.9 217.2h0.9M477.6 219.1h0.9M478.3 218h0.9M473.1 221.5h0.9M471.3 223.1h0.9M475.6 218.4h0.9M474.2 221.1h0.9M477.7 220.4h0.9M480.3 218h0.9M479.9 218.3h0.9M476.9 217.8h0.9M470.7 222.1h0.9M480.5 217.2h0.9M485.8 215.7h0.9M474 221.3h0.9M474.4 223.2h0.9M475.4 220.8h0.9M474.7 220.3h0.9M474 223.3h0.9M478.2 218.3h0.9M480.2 218.2h0.9M541 212.3h0.9M538.6 211.7h0.9M539.7 210.3h0.9M535.5 206.8h0.9M539.2 210.8h0.9M532.9 203h0.9M531.2 199.1h0.9M540.6 211.3h0.9M543.2 218.5h0.9M535.3 206.7h0.9M542.8 215.7h0.9M542.6 215.9h0.9M536 206.8h0.9M528.9 196h0.9M535.6 200.1h0.9M534.8 196.5h0.9M529.1 188.3h0.9M532.5 196.1h0.9M533 196.8h0.9M530.8 190.6h0.9M544.3 212.3h0.9M540.2 207.5h0.9M536.9 200.5h0.9M536.1 198.8h0.9M538.6 201.7h0.9M531.3 193.2h0.9M544.1 210.9h0.9M543.7 209.5h0.9M543.4 209.3h0.9M544.8 211h0.9M527.3 178.6h0.9M537 193.8h0.9M529.6 185.4h0.9M526.5 180.7h0.9M534.2 190.8h0.9M534.5 189.6h0.9M532.4 189.7h0.9M543.2 202.8h0.9M535.7 191.1h0.9M537.7 197.8h0.9M537 193.1h0.9M527.1 178.7h0.9M532.2 182.7h0.9M538.6 192.6h0.9M533.1 184.2h0.9M534 183.3h0.9M533.3 176.1h0.9M533.8 175.6h0.9M532.9 175.9h0.9"/>
<path stroke="#88ff00" d="M376.6 243.5h0.9M372.2 242.5h0.9M376.3 246.3h0.9M373.3 244.6h0.9M352 249h0.9M351.5 249.1h0.9M352.7 246.7h0.9M357.2 246.6h0.9M355.2 245.6h0.9M357.2 251.8h0.9M355.8 247h0.9M358.2 250h0.9M355.7 245.4h0.9M355.3 243.6h0.9M357.6 250h0.9M356.9 246.4h0.9M356.6 241.4h0.9M364.2 250.7h0.9M363.2 250.4h0.9M360.9 243.7h0.9M362.4 249.2h0.9M363.2 247.8h0.9M362.1 250h0.9M360.3 245.3h0.9M363.2 251h0.9M362.5 248.6h0.9M362.6 246.9h0.9M362.5 249.1h0.9M363.7 249.1h0.9M363.7 249.1h0.9M362.5 247h0.9M358.2 251.2h0.9M358.3 249.9h0.9M357.1 251.1h0.9M354.6 252.8h0.9M356 254.2h0.9M358.1 252h0.9M355.8 250.1h0.9M360.2 252.4h0.9M353 251.2h0.9M354.3 251.2h0.9M357.4 252.6h0.9M309.1 262.4h0.9M308.5 259.2h0.9M307.9 259.4h0.9M309.2 262.5h0.9M308.8 258.7h0.9M306.7 258.5h0.9M309 258.9h0.9M308.6 259.4h0.9M306.3 257.3h0.9M287.5 272.3h0.9M301.2 262.4h0.9M297.1 264.4h0.9M287.4 272.7h0.9M300.5 266.4h0.9M288.2 271.5h0.9M300.1 261.6h0.9M406 146h0.9M405 155.5h0.9M410.7 151.3h0.9M378.4 165.8h0.9M410 152.3h0.9M382 158.6h0.9M408 153.9h0.9M380.4 160.5h0.9M418.5 140.4h0.9M409.1 153.3h0.9M402.7 144.4h0.9M383.6 153.3h0.9M387.7 154.7h0.9M386.9 166.4h0.9M390.1 164.2h0.9M382.5 154.7h0.9M382.4 159.3h0.9M411.8 151.9h0.9M397.3 159.3h0.9M384.2 153.1h0.9M400.3 152.2h0.9M405.3 152.1h0.9M411.7 141h0.9M387.7 152.3h0.9M390.4 162.5h0.9M420.3 145.3h0.9M387.7 166.8h0.9M387.3 151.8h0.9M391.4 159.6h0.9M385.2 163h0.9M375.8 167.1h0.9M402.3 152.5h0.9M402.2 148.9h0.9M395.1 159.7h0.9M401.7 149.6h0.9M415.1 149.1h0.9M376.1 161.2h0.9M418.6 148.5h0.9M384.3 165.9h0.9M411.7 145.8h0.9M377.7 165.4h0.9M400.8 150.9h0.9M414.3 147.4h0.9M414.7 143.6h0.9M385.9 161.6h0.9M401 156.8h0.9M381.8 162h0.9M376.6 165.8h0.9M377.9 164.2h0.9M386.6 165.3h0.9M387.7 157.2h0.9M390.7 164h0.9M398.2 148.9h0.9M378.5 171.7h0.9M382.6 160.1h0.9M387.7 160.3h0.9M384.2 154.7h0.9M389.6 153.8h0.9M393.7 160.9h0.9M405 152.8h0.9M381.7 160.5h0.9M388.9 154.3h0.9M394.6 151.9h0.9M397.5 158h0.9M387.9 165h0.9M384.1 157.8h0.9M383.2 154.6h0.9M380.7 161.4h0.9M397.6 157.3h0.9M416 147h0.9M393.9 153.4h0.9M415.4 145.3h0.9M402.4 156.8h0.9M396.7 155.3h0.9M391.1 153.4h0.9M394.5 154.5h0.9M412.9 141h0.9M417.2 143.8h0.9M404.3 149.7h0.9M388.3 162.4h0.9M393.2 161.7h0.9M406.3 145.8h0.9M381.2 161.3h0.9M403.8 153.6h0.9M408.1 154.8h0.9M411.5 140.5h0.9M388.6 153.7h0.9M418.7 140.2h0.9M394.2 159.2h0.9M376.6 159.6h0.9M379.9 171.1h0.9M411.6 150.9h0.9M406.1 146h0.9M375.1 165.8h0.9M378.5 159.9h0.9M381.1 162.5h0.9M393 153.4h0.9M392.1 159.4h0.9M388.2 158.9h0.9M386.4 162.1h0.9M411.9 146.1h0.9M398 155.8h0.9M383.4 159.7h0.9M391.1 153.5h0.9M385.6 178.7h0.9M398.5 169.7h0.9M399.2 169.3h0.9M397 170.6h0.9M411.5 160.4h0.9M408.6 163.6h0.9M409.8 160.9h0.9M412.2 158.3h0.9M413.2 156.5h0.9M408 157.1h0.9M404.8 160.1h0.9M412.1 158.5h0.9M409.3 161.8h0.9M406.7 159.2h0.9M413 159.5h0.9M409.3 163.4h0.9M409.9 160.9h0.9M411.8 153.8h0.9M411.2 157.3h0.9M424.4 168.5h0.9M446.8 166.7h0.9M424.1 159.1h0.9M434.5 175.6h0.9M429.9 180.6h0.9M432.8 180.8h0.9M428.2 156.7h0.9M437.8 181.3h0.9M417.6 161.5h0.9M426.6 177.8h0.9M436.9 161.7h0.9M443 181.8h0.9M424.6 159.2h0.9M443.2 174.1h0.9M433.8 158.1h0.9M433.2 167.8h0.9M422.1 176.7h0.9M420.4 173.3h0.9M418.8 150.9h0.9M412.6 143.4h0.9M414.1 134.9h0.9M419.3 152.8h0.9M419.6 140.9h0.9M432.7 150.6h0.9M418.3 147.3h0.9M416.6 133.6h0.9M421.4 144h0.9M413.9 143h0.9M420.6 136.5h0.9M429.2 133.8h0.9M431.8 138.7h0.9M425.7 153.1h0.9M430 142.4h0.9M414.5 146.8h0.9M423.8 138.3h0.9M430.3 134.9h0.9M412.5 142.7h0.9M424.2 139.3h0.9M423.4 150.1h0.9M413.6 147.1h0.9M424.5 148.2h0.9M419.1 152.9h0.9M433 142.2h0.9M420.6 143.7h0.9M414.1 135.5h0.9M434.5 138h0.9M417.2 138.4h0.9M413.9 138.3h0.9M428.4 139.7h0.9M413.4 146.1h0.9M422.9 133.2h0.9M417.3 134.8h0.9M426.7 136.6h0.9M425.5 146.3h0.9M426.1 143h0.9M416.5 139.9h0.9M419.8 137.9h0.9M424.6 140.7h0.9M417.3 152.4h0.9M410.6 140.1h0.9M422.4 145.3h0.9M434.4 137.1h0.9M417.3 135.6h0.9M417.5 137.7h0.9M430.2 153.7h0.9M426.9 146.1h0.9M416.7 141.5h0.9M415.8 139.6h0.9M414.7 143.4h0.9M415.2 152.1h0.9M413.4 134.7h0.9M420.2 135.2h0.9M423 136h0.9M358.1 130.2h0.9M356.9 131.5h0.9M356.5 129.9h0.9M452.2 226.6h0.9M445.9 230h0.9M447.1 232.3h0.9M450.3 226h0.9M444.2 231.2h0.9M447.5 225.7h0.9M452.6 236.4h0.9M448.1 235.5h0.9M448.3 233h0.9M454.6 226.9h0.9M450.2 226.9h0.9M447 235.2h0.9M450.9 225.5h0.9M448.4 227.6h0.9M449.4 226.3h0.9M449.9 231.8h0.9M455.2 231.4h0.9M450.4 224.7h0.9M447.8 226.3h0.9M444.5 230.4h0.9M447 230.1h0.9M447.3 226h0.9M454.3 235.1h0.9M453.3 229.6h0.9M444.8 229.1h0.9M448.4 231.7h0.9M450.3 236.8h0.9M444.3 227.8h0.9M447.2 234.1h0.9M448.2 226.6h0.9M454.7 230h0.9M446.1 228h0.9M450.7 228.1h0.9M454.5 236h0.9M463.4 231.3h0.9M463.6 231.5h0.9M455.6 235.1h0.9M457.6 236.4h0.9M465.8 230.5h0.9M463.8 232.9h0.9M457.2 234.6h0.9M452.2 236.8h0.9M477.2 227.4h0.9M460.7 233.6h0.9M456.4 236.5h0.9M451.9 237.5h0.9M453.2 238.8h0.9M464.8 232.2h0.9M471.3 229.4h0.9M453.5 238.7h0.9M458.6 236.3h0.9M452.1 236.5h0.9M476.4 225.4h0.9M462.6 233.1h0.9M471.4 229.2h0.9M466 230.4h0.9M474.9 227.9h0.9M469.5 229.2h0.9M460 233h0.9M454.4 237.1h0.9M455.2 237.3h0.9M469.2 228.9h0.9M471.3 229.2h0.9M463.9 232.7h0.9M465.2 233.2h0.9M456.6 237.2h0.9M462.6 234.1h0.9M454.7 237.4h0.9M465.6 230.6h0.9M472.6 228.2h0.9M473.5 226.9h0.9M454.1 236.3h0.9M462.7 232h0.9M455.5 236h0.9M470.2 229.1h0.9M467.1 231.5h0.9M461.1 232.6h0.9M456.2 237.4h0.9M460.1 233.9h0.9M464.8 230.9h0.9M474.3 227.3h0.9M478.9 218.3h0.9M471.8 223h0.9M472.2 220.4h0.9M476.3 218.1h0.9M539.9 210.8h0.9M536 198.3h0.9M538.3 201.3h0.9M536.1 197.9h0.9M545.1 212.2h0.9M537.6 200.8h0.9M534 198.2h0.9M543.1 210.6h0.9M543.2 209.6h0.9M540.9 208.2h0.9M538 201.4h0.9M549 214.5h0.9M538.6 195.3h0.9M543 204.2h0.9M542.3 204.1h0.9M547.1 210.3h0.9M527.8 181.6h0.9M537.7 195.2h0.9M535.2 192.9h0.9M547.4 208.3h0.9M544.6 204.5h0.9M543.7 203.4h0.9M546.6 207.8h0.9M536 192h0.9M542.4 204.3h0.9M532.6 181.4h0.9M529.7 178h0.9M536.6 186.8h0.9M534.2 185.7h0.9M534.8 185.3h0.9M535.6 185.2h0.9M531.3 179.4h0.9M532.9 183.7h0.9M534 184.7h0.9M535.7 185.3h0.9M532.4 183.4h0.9M532.2 181.9h0.9M531.2 181h0.9M532.2 180h0.9M536 178.8h0.9M539.1 184.8h0.9M539.8 185.7h0.9"/>
<path stroke="#65ff00" d="M377 244.3h0.9M375.7 242.6h0.9M376.6 243.7h0.9M372.3 240h0.9M375.1 245.3h0.9M370.2 239.1h0.9M375.7 244.2h0.9M369.7 238h0.9M377.2 242.9h0.9M377.1 242.8h0.9M375.3 245.6h0.9M374.9 244.3h0.9M375.5 245.5h0.9M377.6 243.6h0.9M373.9 244h0.9M374.6 241.4h0.9M374 245.5h0.9M374.4 237h0.9M374.8 242.9h0.9M375.4 243.1h0.9M375.3 240h0.9M371.3 240.4h0.9M373.1 242.7h0.9M378.3 244.3h0.9M351.4 244.4h0.9M350.2 239h0.9M353 248.1h0.9M348.6 240.2h0.9M349.1 242.1h0.9M351.7 243h0.9M350.1 239.2h0.9M352 248.4h0.9M354.1 248h0.9M349.6 241.5h0.9M356.3 248.1h0.9M356.8 242h0.9M357.4 246.5h0.9M358.9 250.4h0.9M355.6 248.4h0.9M358.9 250.8h0.9M356.4 247h0.9M356 245.1h0.9M357.9 251.8h0.9M357.6 245.2h0.9M355.6 242.9h0.9M356.1 247.4h0.9M357 248.2h0.9M358.2 251.2h0.9M354.6 244.3h0.9M355.7 244.3h0.9M356.6 243.2h0.9M357 244.1h0.9M362.9 246.3h0.9M364 250.8h0.9M362.4 246.1h0.9M362.3 250.1h0.9M364.5 250.7h0.9M360.3 244.1h0.9M362.3 246.9h0.9M363.5 250.2h0.9M362.6 249h0.9M363.3 246h0.9M362.6 246.9h0.9M351.7 249.8h0.9M353.6 251.2h0.9M356.5 250.7h0.9M358.2 251.9h0.9M356.5 251.7h0.9M356.7 250.6h0.9M354.8 253.8h0.9M356.2 251.9h0.9M354.3 251.2h0.9M356.6 251.5h0.9M308.4 260.1h0.9M306.5 258.5h0.9M307.2 259.6h0.9M307.2 258.9h0.9M306.9 258.2h0.9M307 258.6h0.9M308.6 258.8h0.9M307.8 259.7h0.9M307.2 257.6h0.9M308.6 258.3h0.9M306.9 257.8h0.9M299.6 259.2h0.9M304.2 255.6h0.9M291.1 273.3h0.9M298 267.7h0.9M290 274.9h0.9M301.6 262.2h0.9M304.3 261.5h0.9M291.5 267.1h0.9M382.2 164.7h0.9M375.9 167h0.9M384.1 154.1h0.9M401.3 144.7h0.9M398 146.1h0.9M410.7 139.7h0.9M414 148.6h0.9M379 170.4h0.9M412.9 137.7h0.9M401.7 141.9h0.9M407.7 147.3h0.9M384.6 153.3h0.9M390 162.3h0.9M415 139.6h0.9M403.6 151h0.9M388.1 154.7h0.9M378.3 162.5h0.9M421.5 139.2h0.9M418.7 137.2h0.9M390 160.8h0.9M374.1 164.5h0.9M397.7 152.8h0.9M389.1 155.9h0.9M381.6 158.5h0.9M383.8 167.8h0.9M399.3 157.3h0.9M388.7 164.8h0.9M394.3 160.7h0.9M395.8 154h0.9M396.5 144.8h0.9M400.9 148.1h0.9M398.4 151.5h0.9M417.5 136.2h0.9M392.7 147.7h0.9M410.4 138.6h0.9M398.5 151.4h0.9M381.7 159.9h0.9M405 140.1h0.9M371.2 163.2h0.9M374.8 162.8h0.9M379.9 160.4h0.9M381.3 168.6h0.9M397.3 151.8h0.9M404.7 154.7h0.9M384 159.8h0.9M401.5 145.9h0.9M415.6 148.7h0.9M402.5 141h0.9M407.4 155.3h0.9M393.5 162.4h0.9M400.7 156.4h0.9M378.1 169.5h0.9M408.3 145.3h0.9M387.4 157.4h0.9M392.5 150h0.9M387 158.4h0.9M397.9 159.8h0.9M386 154.5h0.9M407.7 142.5h0.9M399.3 151.8h0.9M380.9 157.9h0.9M387.3 150.3h0.9M380.1 165.1h0.9M405.4 142.5h0.9M406.8 154.8h0.9M389.8 148.9h0.9M389.5 154.7h0.9M391.8 155.6h0.9M388.8 157.9h0.9M416.6 137.2h0.9M406.6 154.9h0.9M417.2 146.6h0.9M392.2 153.8h0.9M394.6 148.8h0.9M419.7 145.3h0.9M382.6 155.6h0.9M380.3 163.5h0.9M400.3 142.4h0.9M396.3 154.1h0.9M409.3 144.9h0.9M397.8 154.4h0.9M392.1 155.4h0.9M383.1 163.7h0.9M385.1 162.2h0.9M419.1 146.1h0.9M394 159h0.9M379 169.8h0.9M383.7 161.8h0.9M404.1 152.9h0.9M386.6 162.2h0.9M421.2 137.7h0.9M405.1 151.4h0.9M392.6 157h0.9M401.1 143.9h0.9M406.1 145.1h0.9M408.1 149.5h0.9M395.6 149.4h0.9M400.7 154.7h0.9M407.2 143.3h0.9M371.9 164h0.9M415 136.6h0.9M388.3 162.4h0.9M419.3 147h0.9M412.5 145.9h0.9M388.5 149.6h0.9M382.2 165h0.9M406.9 147h0.9M379.7 169.1h0.9M379.9 160.8h0.9M401.4 145.9h0.9M401.4 146h0.9M411.6 135.4h0.9M410.8 137.5h0.9M393.6 159.6h0.9M419.4 139.3h0.9M403 140.2h0.9M412.6 141.1h0.9M388.2 158.2h0.9M384.6 158.9h0.9M390.5 148.5h0.9M398.4 151.1h0.9M382.2 159.8h0.9M390.5 164.2h0.9M389.6 159.6h0.9M395.8 155.6h0.9M389.3 164.7h0.9M402.1 146h0.9M416.1 145.9h0.9M391.2 148h0.9M407 138.5h0.9M381.7 160.3h0.9M393.2 160.1h0.9M374.6 164.8h0.9M381.3 164.6h0.9M396.9 144.7h0.9M381 165.3h0.9M374.2 167.5h0.9M395.2 152.2h0.9M378.6 158.1h0.9M411 149.8h0.9M400.7 152.3h0.9M393 157.6h0.9M401 143.3h0.9M413.3 148.2h0.9M395.4 159.8h0.9M404.8 149.7h0.9M417.8 141.5h0.9M400.5 154.6h0.9M383.8 163h0.9M420.8 138.5h0.9M394.2 147.7h0.9M378.1 158.7h0.9M380.1 166.6h0.9M412.9 143.3h0.9M392.4 158.8h0.9M391.6 156h0.9M376.5 165.5h0.9M410.4 161.2h0.9M412.1 156.5h0.9M410.9 156.3h0.9M412 157.3h0.9M405.7 161.8h0.9M406.4 159.8h0.9M412.9 156.1h0.9M405.9 163h0.9M405.8 160.3h0.9M412 154.5h0.9M404.1 160.1h0.9M409.2 161h0.9M412.9 154.5h0.9M407.9 158.4h0.9M413.4 158.4h0.9M407.6 160.8h0.9M412.6 155h0.9M410 158.6h0.9M434 176.8h0.9M413.4 170.8h0.9M445 172.9h0.9M443 171.7h0.9M433.5 177.8h0.9M414.2 170.3h0.9M443 167.9h0.9M419.3 168.1h0.9M424.6 163.2h0.9M427.6 185h0.9M430.1 161.2h0.9M430.5 182.2h0.9M429.9 158h0.9M420.8 169h0.9M419 138.7h0.9M425.2 137.1h0.9M410.9 135.5h0.9M417 138.9h0.9M412.5 141.8h0.9M412.7 149.6h0.9M422.5 134.3h0.9M423.4 154.1h0.9M413.2 145.1h0.9M414.6 145.5h0.9M415.9 140h0.9M417.4 151.4h0.9M416.9 148.1h0.9M419.7 149.6h0.9M415.5 138.5h0.9M417.1 151.1h0.9M421.2 140.1h0.9M422.6 148.2h0.9M419.7 138.1h0.9M409.9 143.1h0.9M420.5 153h0.9M418.1 135.1h0.9M423.6 147.5h0.9M421.4 150.9h0.9M424.8 146.5h0.9M414.5 134.6h0.9M417.3 152.2h0.9M410.6 138.1h0.9M416.1 151.2h0.9M415.6 143.8h0.9M428.5 145.2h0.9M419.8 144.2h0.9M416.1 147.1h0.9M425.1 155.4h0.9M417 142.4h0.9M418 133.8h0.9M416.5 135h0.9M424.9 152.3h0.9M418.2 148.9h0.9M422.2 144.6h0.9M423.9 149.3h0.9M418.4 134.3h0.9M417.1 143.5h0.9M350.3 153.4h0.9M351.5 152h0.9M452 236.6h0.9M546.9 216.3h0.9M541.9 210.2h0.9M547 216h0.9M543.2 209.8h0.9M550.8 214h0.9M541.9 200.5h0.9M546.8 208.4h0.9M538.1 197.4h0.9M547 208.5h0.9M542.1 202.7h0.9M549.3 213.5h0.9M541.9 202.9h0.9M541.1 201h0.9M538.9 197.9h0.9M544.3 204.4h0.9M540.5 192.2h0.9M541.4 194.4h0.9M533 182.6h0.9M534.5 184.5h0.9M541.1 193h0.9M544.2 199.9h0.9M540.7 192.4h0.9M548.9 207.5h0.9M547.5 204h0.9M538.9 192.8h0.9M538.2 190.3h0.9M538.2 188.6h0.9M545 201h0.9M533.7 182.2h0.9M537.3 188.3h0.9M536 181.1h0.9M535.2 179.2h0.9M545.1 194h0.9M546.4 198h0.9M536.6 179.4h0.9M543.4 192.9h0.9M536.9 183h0.9M541.6 184.2h0.9M537.9 177.7h0.9M542.2 183.1h0.9M540.1 179.6h0.9M540.9 183h0.9M542.4 183h0.9M542.9 186h0.9M560.5 222.8h0.9M564.5 222.3h0.9M556.4 217.6h0.9M560.2 217.5h0.9M557.8 216.6h0.9M558.6 218.7h0.9M562.2 221.6h0.9M559.3 215.1h0.9M558.8 218.1h0.9M558.6 222.3h0.9M558.6 218.6h0.9M554.9 218.6h0.9M557.9 220.7h0.9M554.1 221.5h0.9M559.1 216.9h0.9M552.8 221.6h0.9M554.4 220.1h0.9M559.1 219.9h0.9M559.1 219.9h0.9M555.8 220.5h0.9"/>
<path stroke="#44ff00" d="M377.1 228.2h0.9M370.2 228.1h0.9M377.4 227h0.9M376.9 230.3h0.9M375.7 230.8h0.9M371.6 230.9h0.9M373.9 229h0.9M370.1 228.3h0.9M379.2 226.8h0.9M370.1 228.8h0.9M376.3 230.2h0.9M375.9 240.4h0.9M374.5 244.7h0.9M374.4 238.3h0.9M370.5 238.4h0.9M373 241.8h0.9M374.1 239h0.9M374.6 241.2h0.9M371.1 237.8h0.9M375 244.6h0.9M373.4 235.3h0.9M374.8 240.2h0.9M375.4 243.3h0.9M371.5 240.6h0.9M373.4 240.7h0.9M373.6 236.1h0.9M374 238.6h0.9M375.3 241.6h0.9M375.8 246.1h0.9M373.1 235.8h0.9M371.2 236.6h0.9M371.8 239.6h0.9M374.7 237.7h0.9M376 241.4h0.9M374.8 245.7h0.9M371.7 235.7h0.9M376.2 241h0.9M373.3 242h0.9M376.8 246.1h0.9M341.3 241.6h0.9M344.1 241.4h0.9M354.1 247.7h0.9M348.9 242.2h0.9M351.5 247.6h0.9M349.3 240.9h0.9M351.3 244.6h0.9M351.6 243.6h0.9M348.9 239.8h0.9M351.9 247.4h0.9M353.9 247.7h0.9M352.3 248.4h0.9M350.7 244.9h0.9M351.9 242.6h0.9M350.8 245.1h0.9M350.9 242.8h0.9M348.4 240h0.9M350.4 240.9h0.9M356.4 246.6h0.9M354.7 244.8h0.9M355.7 244.8h0.9M355.6 245.3h0.9M357.9 247h0.9M356.2 243.6h0.9M355.3 244.3h0.9M361.5 246.1h0.9M361.1 244.2h0.9M360.4 243.3h0.9M361.4 243h0.9M361 246.4h0.9M306.7 255.2h0.9M306.2 255.3h0.9M305.9 254.5h0.9M305.7 256.8h0.9M307.4 257.9h0.9M306.4 258h0.9M306.3 256.2h0.9M307.1 256.4h0.9M294.7 269.1h0.9M289.2 265.9h0.9M301.6 253.9h0.9M295 263.9h0.9M302 256.9h0.9M301.2 256.6h0.9M302.6 260.1h0.9M287.7 269.1h0.9M391.4 149h0.9M410.8 145h0.9M420.9 139.5h0.9M413.1 135h0.9M411.8 145.9h0.9M400.9 143.3h0.9M394.7 153.5h0.9M393.9 162.5h0.9M408.9 138.7h0.9M379.8 162.1h0.9M390.6 152h0.9M403.3 157.1h0.9M388.3 152.7h0.9M403.6 156.2h0.9M387.7 152.4h0.9M410.8 137.1h0.9M384.2 163.7h0.9M410.1 143.9h0.9M413.7 143.3h0.9M375.3 166.9h0.9M412.3 152.5h0.9M400.3 158.8h0.9M400.7 155.6h0.9M390 159h0.9M403.6 144.2h0.9M407 142.3h0.9M414.1 144.6h0.9M390.9 152.4h0.9M405.6 146.5h0.9M415.9 145.4h0.9M404.9 147h0.9M374 162.5h0.9M407.4 153.6h0.9M411.7 137.9h0.9M383 167.7h0.9M394.9 156.1h0.9M381.6 163.6h0.9M387.9 154.8h0.9M410.7 140h0.9M404.9 154.7h0.9M405.6 145.8h0.9M402.8 154h0.9M413.2 136.8h0.9M396.8 156.8h0.9M405.5 151.4h0.9M410.1 146.8h0.9M409.6 144.6h0.9M396.6 151.8h0.9M412.7 139.1h0.9M399 152.3h0.9M410.3 143.1h0.9M393 151.9h0.9M395.2 157.2h0.9M379.4 170.2h0.9M391.5 148.9h0.9M402.9 153h0.9M409.6 140.5h0.9M410.5 136.9h0.9M374.8 166.7h0.9M406.2 142h0.9M384.8 156.3h0.9M397.4 147.4h0.9M383.4 159.8h0.9M413.2 142.3h0.9M407.6 141.2h0.9M396 152.8h0.9M410.5 137.4h0.9M384 162.6h0.9M380 163.4h0.9M398.1 158.6h0.9M398.1 143.2h0.9M371.7 163.3h0.9M414 143.5h0.9M415.6 143.3h0.9M387.3 166.9h0.9M400.8 158.6h0.9M376.6 171.3h0.9M402.8 153.5h0.9M420.7 138.8h0.9M401.1 140.9h0.9M379.1 160.3h0.9M416.6 143.9h0.9M399.6 156h0.9M385.9 155.5h0.9M382.2 159.7h0.9M417.4 149.1h0.9M406.4 144.8h0.9M391.1 151.1h0.9M387.9 154.8h0.9M393.6 159.3h0.9M423.3 139.5h0.9M386.4 159.8h0.9M396.3 145.9h0.9M384.2 165h0.9M390.7 153.4h0.9M388.3 151.8h0.9M400.4 146.5h0.9M397 156.6h0.9M388.5 161h0.9M397.6 149.6h0.9M396.8 146.2h0.9M380.9 155.9h0.9M378.7 158h0.9M401.9 143.3h0.9M380.6 162h0.9M400.9 149.2h0.9M397.9 143.2h0.9M397.3 156h0.9M399.7 150h0.9M388 161.2h0.9M402.9 140.9h0.9M393.5 151.7h0.9M381.8 166.1h0.9M413.5 137.1h0.9M402 156.8h0.9M378.7 166.9h0.9M386.3 157.5h0.9M390.3 152h0.9M391.3 151.7h0.9M398 144.3h0.9M398.5 151.5h0.9M407.9 142.1h0.9M400.3 150.8h0.9M373.7 165h0.9M401.5 151.2h0.9M411.2 136.9h0.9M389.4 151h0.9M407.3 152.8h0.9M385.9 155.4h0.9M406.2 150.8h0.9M419.6 137.9h0.9M394 155.8h0.9M400.3 143.9h0.9M413.8 135.6h0.9M406.8 158.3h0.9M405 161.2h0.9M407.6 159.4h0.9M410.2 155.7h0.9M412.4 153.2h0.9M405.2 161.1h0.9M412.3 155.5h0.9M406 158.8h0.9M406.8 160.7h0.9M434.9 172.8h0.9M445.4 174.5h0.9M416 174.3h0.9M431.9 180h0.9M432.1 172.1h0.9M437.5 169.9h0.9M418.4 163.3h0.9M441.5 162.4h0.9M444.8 173.2h0.9M438.4 175h0.9M417.6 160.5h0.9M433.3 158.6h0.9M428.5 185.3h0.9M435.9 180.4h0.9M433.7 158.7h0.9M435.8 172.7h0.9M421.8 179.9h0.9M446.2 168.7h0.9M428.9 176.1h0.9M429 166.5h0.9M417.6 174.7h0.9M412.5 146.8h0.9M413.2 146.5h0.9M409.6 138.4h0.9M414.3 137.2h0.9M414.1 139.6h0.9M410.1 141.9h0.9M411.9 138.4h0.9M412.1 144.6h0.9M417.6 138.9h0.9M411.4 141.1h0.9M414.2 135.6h0.9M419.8 140.1h0.9M412.4 142.4h0.9M410.9 139.1h0.9M416.2 147h0.9M550.5 214.3h0.9M549.2 211.6h0.9M545.7 208.5h0.9M547.6 210.1h0.9M548 204.7h0.9M547.8 204.9h0.9M543.6 199.7h0.9M543.7 197.2h0.9M546.4 201.3h0.9M546.9 204.3h0.9M549.4 208.4h0.9M547.8 204.6h0.9M547.5 203.1h0.9M547.3 202.3h0.9M539.5 193.1h0.9M555.4 210.9h0.9M544.8 194.5h0.9M547.4 198.5h0.9M544.8 192.1h0.9M545.4 194.8h0.9M547.4 195.7h0.9M544.7 192.9h0.9M544.3 192.8h0.9M540.1 188.1h0.9M545.3 194.9h0.9M556.3 211.8h0.9M536.2 181h0.9M543.8 190.4h0.9M550.8 203.5h0.9M536.8 181.2h0.9M540.1 185.8h0.9M550.6 203.9h0.9M552.4 206.6h0.9M541.8 184.4h0.9M538.2 178.8h0.9M536.9 177h0.9M537 175.4h0.9M537.7 176.5h0.9M541.1 182.6h0.9M547.3 191.1h0.9M546.1 190.1h0.9M543.9 183.9h0.9M545.9 190.4h0.9M545.4 188.7h0.9M556.8 224.8h0.9M556.2 222.1h0.9M554.9 222.3h0.9M556.3 219h0.9M555.5 222.7h0.9M559.4 219.4h0.9M561.8 218.5h0.9M563.7 220.8h0.9M564.5 222.1h0.9M563.3 221.9h0.9M564.1 223h0.9M561.8 218h0.9M565.3 215h0.9M558.9 215.7h0.9M559.4 216.8h0.9M561.3 215.4h0.9M561.5 220.8h0.9M558.5 213.1h0.9M561.2 216.2h0.9M556.4 213.2h0.9M559.3 222.4h0.9M554.3 218.8h0.9M558.9 219h0.9M555.4 211.8h0.9M559.1 214.2h0.9M558 216.1h0.9M555.4 215.1h0.9M559.2 213.8h0.9M559 217.9h0.9M557.4 212.1h0.9M556 217.7h0.9M557.7 211.4h0.9M553.8 217.8h0.9M557.7 214h0.9M553.4 218.4h0.9M555.2 217.9h0.9M561.9 214.4h0.9M556.8 218.2h0.9M558.3 213.5h0.9M552.1 215.4h0.9M555.8 213.2h0.9M561.5 217h0.9M558.9 215.9h0.9M560.3 219h0.9M556.3 220h0.9M552.9 213.7h0.9M557.6 214.6h0.9M559.6 219.2h0.9M560.1 216.5h0.9M561.7 215.2h0.9M555.1 218.4h0.9M558.7 219.9h0.9M554.6 219.3h0.9M558.7 220.8h0.9M553.5 215.1h0.9M556.2 219.6h0.9M556.9 210.7h0.9M556.8 219.7h0.9"/>
<path stroke="#21ff00" d="M374.9 244.8h0.9M373.9 243.5h0.9M373.9 244.2h0.9M376.2 244.3h0.9M373.5 243.1h0.9M375.7 243.2h0.9M377 245.1h0.9M374.8 246.4h0.9M376 245.6h0.9M375.2 241.8h0.9M375.8 244.2h0.9M375.2 245.8h0.9M374.2 242.5h0.9M373.6 243.8h0.9M375 241.1h0.9M373.8 243.4h0.9M376.7 245.3h0.9M375.2 245.7h0.9M374.5 241.4h0.9M375.4 243.1h0.9M376.2 244.7h0.9M375.6 246h0.9M374.7 245.9h0.9M376.3 244.8h0.9M374.6 245.9h0.9M369.8 220.8h0.9M371.8 227.4h0.9M364.6 220.7h0.9M369.7 222.7h0.9M369.8 224.8h0.9M378.4 227.5h0.9M377.3 226.5h0.9M375.8 226.2h0.9M376.3 229.3h0.9M378.2 230.7h0.9M375.2 226.1h0.9M371.5 227.5h0.9M368.7 229h0.9M373.8 229.8h0.9M372.1 228h0.9M373.1 229.9h0.9M369.7 219.2h0.9M379.6 230.9h0.9M370 221.4h0.9M368.4 223.1h0.9M380.1 228.2h0.9M371 229.8h0.9M371.1 224.5h0.9M366.7 219.8h0.9M371.1 223.6h0.9M366.1 218.8h0.9M378 230.9h0.9M377.4 227h0.9M377.5 227.6h0.9M366.3 223.6h0.9M374.9 226.4h0.9M365.5 224.1h0.9M373.2 229.3h0.9M369.1 225h0.9M370.2 221.1h0.9M377.1 226.2h0.9M370.4 226h0.9M371.3 225.9h0.9M368.1 220.4h0.9M377 226.5h0.9M370.2 224.1h0.9M373.4 227h0.9M368.8 228.6h0.9M376.7 224.4h0.9M379.5 224h0.9M377 230.4h0.9M377 228.1h0.9M377.6 226.9h0.9M372.9 226.3h0.9M379.1 228.8h0.9M370.6 225.9h0.9M378.7 228.3h0.9M377.2 221.1h0.9M378 228.7h0.9M378.4 224.9h0.9M377.7 225.7h0.9M366.7 223.6h0.9M369.7 237.8h0.9M372.1 237.1h0.9M374.2 238.2h0.9M374.6 237.3h0.9M344.3 240.4h0.9M340.9 241.8h0.9M344.2 239.1h0.9M342.6 242h0.9M342.6 241.3h0.9M341.6 242.9h0.9M342.6 240.6h0.9M342.8 242.3h0.9M341.7 240.2h0.9M342.7 242.6h0.9M341.3 239.9h0.9M349.5 238h0.9M351 243.4h0.9M351.1 243.4h0.9M348.7 239.4h0.9M350.2 239.3h0.9M350.5 240.4h0.9M350.9 240.5h0.9M351 244.5h0.9M351.1 240h0.9M350.7 240.7h0.9M349.6 242.2h0.9M348.5 238.3h0.9M348.9 242.1h0.9M349.6 241.8h0.9M356.4 240.7h0.9M304 252.6h0.9M305.5 256.2h0.9M304.9 255.7h0.9M305.8 254h0.9M303.8 253.5h0.9M304.2 253.7h0.9M305.6 253.9h0.9M304.2 254.9h0.9M304.8 255.9h0.9M286.1 273h0.9M285.4 269.3h0.9M304.7 256.3h0.9M288.8 267h0.9M301 259.9h0.9M291.5 265.4h0.9M297.8 263h0.9M290.9 268.9h0.9M299.7 254.3h0.9M289.3 269.9h0.9M297.3 263h0.9M289.4 264.7h0.9M300.2 255.2h0.9M297.4 261.9h0.9M294 259.6h0.9M288.1 273.4h0.9M287.9 266h0.9M298.2 257.8h0.9M291.1 264.2h0.9M290.5 264.5h0.9M303.3 258h0.9M303.1 256.5h0.9M299.5 258.6h0.9M414.1 140.6h0.9M403.8 150.3h0.9M412.8 144.9h0.9M399.1 147.4h0.9M422.1 138.7h0.9M405.8 142.2h0.9M411.5 136.2h0.9M390.2 150.7h0.9M383.7 158.1h0.9M409.1 148.2h0.9M396.1 152.1h0.9M419.6 146.4h0.9M421.2 142.5h0.9M390.5 156.2h0.9M408.7 137.7h0.9M405.5 142.4h0.9M387.3 156.6h0.9M402.5 142h0.9M393.6 151.6h0.9M407.9 142.3h0.9M412.9 145.6h0.9M381.3 155.7h0.9M408.1 140h0.9M393.7 145.9h0.9M404.9 148.8h0.9M413.6 149.3h0.9M396.9 144.8h0.9M414.1 146.6h0.9M414.9 135.6h0.9M416.1 143.1h0.9M411.9 138.4h0.9M405 145.5h0.9M417.2 144h0.9M409.7 150.8h0.9M411.2 136.5h0.9M387.9 150h0.9M406.4 140.8h0.9M401.7 141h0.9M399.5 149.2h0.9M405 139.5h0.9M408.4 141.4h0.9M411.9 142.3h0.9M418.4 146.8h0.9M390.6 150.1h0.9M395 149.2h0.9M391.6 158.7h0.9M399.5 146.3h0.9M414.5 142.7h0.9M398.6 156.7h0.9M396.9 147.5h0.9M414.9 148.2h0.9M411.7 137.2h0.9M404.6 144.6h0.9M414.4 139.6h0.9M404.9 150h0.9M402.1 153.2h0.9M407.1 143.1h0.9M415.8 143.4h0.9M416.9 142.4h0.9M411 149h0.9M401.3 146.6h0.9M391.5 155h0.9M410.8 135.8h0.9M411.9 141.3h0.9M406.4 146h0.9M413.4 135.4h0.9M382.8 156.5h0.9M401.1 142.9h0.9M417.1 140.4h0.9M407.2 137.6h0.9M405.3 141.1h0.9M418.6 145.1h0.9M415.8 136.3h0.9M395.7 153.1h0.9M408.5 146h0.9M418 136.4h0.9M406.2 147.3h0.9M405.7 143.4h0.9M409.6 142.7h0.9M386.5 151.8h0.9M408.1 145.5h0.9M412.9 156.1h0.9M404.5 159.6h0.9M406 161.6h0.9M407.4 157.1h0.9M407.2 160.1h0.9M437.6 164h0.9M424.5 177.6h0.9M422.1 168.2h0.9M438.9 170.4h0.9M430.2 169.7h0.9M425.5 169.2h0.9M427.9 177.6h0.9M433.4 166h0.9M425.6 170.9h0.9M423.4 179.4h0.9M436.2 169.4h0.9M441.8 169.6h0.9M424.7 182.3h0.9M427.6 175.5h0.9M422.9 182.7h0.9M424.5 174.2h0.9M421.5 165.1h0.9M436.5 166.9h0.9M441.4 168.9h0.9M423.1 180.3h0.9M416.9 170h0.9M441.8 170h0.9M429.6 159.4h0.9M419.1 175.2h0.9M410.2 144h0.9M410.4 137.3h0.9M436.5 120.9h0.9M430.4 121.6h0.9M439.5 122.2h0.9M435.7 119.8h0.9M437.9 122.9h0.9M437.3 122.9h0.9M433.8 123.2h0.9M442 124.8h0.9M436.7 121.4h0.9M434.7 119.6h0.9M436.9 122.7h0.9M436.8 120.9h0.9M440.1 122.8h0.9M436.5 120.9h0.9M435.2 124h0.9M436.7 122.4h0.9M433.8 123.4h0.9M435.1 119.9h0.9M433.4 121.8h0.9M437.7 122.5h0.9M434.8 123.4h0.9M435.8 121.6h0.9M434.8 121.4h0.9M434.7 123.5h0.9M349.6 152.9h0.9M352.7 152.8h0.9M502.2 196.1h0.9M501.6 196.7h0.9M501.3 197.4h0.9M467.2 138.8h0.9M549.3 205.1h0.9M549.4 202h0.9M553.3 208.1h0.9M556.8 211.6h0.9M552.6 205.9h0.9M545.7 196h0.9M553.2 204.3h0.9M543.7 192h0.9M555.6 208.2h0.9M553.8 207h0.9M545.4 189.2h0.9M552.4 199.4h0.9M556.9 206.5h0.9M549.8 193.3h0.9M557 204.3h0.9M552.6 198.1h0.9M545.3 187.5h0.9M553.3 198.2h0.9M553.4 200.2h0.9M549.8 195.7h0.9M554.5 217.5h0.9M555.7 220.3h0.9M554.9 219.1h0.9M555.5 223.1h0.9M558.1 218.3h0.9M561.2 223.2h0.9M557.7 216.2h0.9M560 218.7h0.9M558.8 213.9h0.9M559.4 219.9h0.9M558.6 215.8h0.9M559.5 220.4h0.9M558.8 222h0.9M560.9 214.9h0.9M561.5 218.1h0.9M560.7 215.5h0.9M562.6 216.5h0.9M561.4 213.7h0.9M562.5 217.3h0.9M565.1 215.5h0.9M565.3 213.5h0.9M559.8 220.6h0.9M559.2 215.4h0.9M560.4 212.8h0.9M552.9 219.4h0.9M560 217.7h0.9M556.2 216.6h0.9M560.1 215.6h0.9M561 217.8h0.9M559.6 208.8h0.9M554.9 211.3h0.9M555.7 212.6h0.9M557 213.1h0.9M554.6 212.4h0.9M552.9 217.1h0.9M558 211.6h0.9M557.6 212.9h0.9M554.5 217.4h0.9M552 212.3h0.9M558.3 220.2h0.9M555.3 217.4h0.9M561.9 219.8h0.9M555.4 213h0.9M553.3 216.4h0.9M557.7 214.7h0.9M557.2 220.3h0.9M553.2 216.5h0.9M557.8 213.3h0.9M560.2 219.8h0.9M558.8 213.5h0.9M562.5 217.3h0.9M558.6 210.9h0.9M561.1 212h0.9M555.7 215.9h0.9M557.2 213.2h0.9M557.6 212.2h0.9"/>
<path stroke="#00ff00" d="M372 242.4h0.9M374 241.3h0.9M373.5 244.4h0.9M371.8 241.4h0.9M375.6 244.5h0.9M373 241.5h0.9M376 242h0.9M371.5 241.1h0.9M375.9 244.3h0.9M375.7 241.4h0.9M374.9 243.1h0.9M375.1 242.1h0.9M374.9 245.1h0.9M374.5 243.4h0.9M373.4 242.6h0.9M374.2 245.2h0.9M376.8 242.1h0.9M374.6 243.9h0.9M376.2 242.7h0.9M371.4 241.6h0.9M376.4 242.7h0.9M375.1 243.8h0.9M373.9 245.2h0.9M376.2 244.3h0.9M372.6 243h0.9M370.8 240.3h0.9M374.3 243.9h0.9M376.7 243.3h0.9M374 243h0.9M375.5 242.4h0.9M374.1 243.6h0.9M374.8 245.1h0.9M373.8 244.1h0.9M375.5 242.3h0.9M375.3 244.3h0.9M373.9 243.2h0.9M376.5 242.4h0.9M373.2 242.8h0.9M374.5 245h0.9M373.9 242.2h0.9M373.4 243.8h0.9M373.7 244.9h0.9M374.9 241h0.9M372.6 242.1h0.9M371.9 239.7h0.9M373.2 238.8h0.9M375.3 241.9h0.9M373.6 243.6h0.9M372.8 243.1h0.9M373.2 240.7h0.9M374.4 245.7h0.9M374.3 240.3h0.9M374.5 244.7h0.9M372.2 238.4h0.9M373.6 243.4h0.9M374.9 243.9h0.9M372.2 240.4h0.9M373.9 243h0.9M375 242h0.9M376.5 243.8h0.9M371.9 240.8h0.9M375.6 243.3h0.9M373.1 243.8h0.9M375.7 244.3h0.9M375.6 244.7h0.9M371.7 241.1h0.9M374.2 241.2h0.9M373.5 240.2h0.9M375.7 244.6h0.9M373.8 243.8h0.9M375.9 243.8h0.9M371.4 238.8h0.9M375.5 242.8h0.9M374.5 241.8h0.9M374.5 242h0.9M374.4 241.4h0.9M375.6 242.9h0.9M374.4 240.5h0.9M372.5 239.8h0.9M374.8 245.4h0.9M373.9 239.3h0.9M370.8 239h0.9M372.5 239.8h0.9M373.1 241.5h0.9M371.9 240.5h0.9M374.6 241.8h0.9M374.6 241.3h0.9M375.4 224.9h0.9M376 221h0.9M364.5 218.5h0.9M374.1 222.5h0.9M368.2 216.9h0.9M376.7 225.9h0.9M363.1 218.3h0.9M372.2 227.1h0.9M378.6 221.1h0.9M369.3 228.5h0.9M374.2 221.7h0.9M374.1 220.3h0.9M365.1 222.4h0.9M367.5 223.3h0.9M367.8 226.6h0.9M377.6 227.8h0.9M376.2 223.1h0.9M380 229.4h0.9M364.6 222h0.9M367.6 220.9h0.9M374.5 218h0.9M368.9 220.7h0.9M367.9 226h0.9M369.8 225.6h0.9M370.3 222.2h0.9M370 225.9h0.9M365.6 216.4h0.9M361.9 212.8h0.9M379.2 230.7h0.9M379.9 230.8h0.9M372 218.2h0.9M366.9 214.1h0.9M369.1 228.2h0.9M378.8 220.1h0.9M377.3 218h0.9M374.8 220.5h0.9M367.4 218.5h0.9M363.4 218.8h0.9M366.6 219.5h0.9M371 220.8h0.9M374.4 226h0.9M371.1 229.9h0.9M369.3 215.8h0.9M367.1 218.6h0.9M373.9 222.9h0.9M368.6 221.1h0.9M365.9 222.2h0.9M373.3 217.1h0.9M375.7 225.2h0.9M368 224.8h0.9M372.5 219.7h0.9M371.8 222.9h0.9M370.6 221.9h0.9M376.7 218.2h0.9M379.4 230h0.9M367.6 223.4h0.9M368.1 223.1h0.9M366 215.4h0.9M370.7 218h0.9M372.4 219.6h0.9M368.1 215.3h0.9M372.8 218.3h0.9M372.5 224.8h0.9M367.6 222.2h0.9M371.1 220.7h0.9M378.4 230.6h0.9M376.4 214.6h0.9M363.2 216.8h0.9M374.8 218.1h0.9M379.8 229.7h0.9M377.2 225.3h0.9M374.1 224h0.9M370.8 222.8h0.9M371.4 228.1h0.9M368.1 222.1h0.9M376 217.4h0.9M363.3 217h0.9M374.6 223.6h0.9M377.9 230.5h0.9M371.1 229.3h0.9M373.7 218.9h0.9M375.7 222.4h0.9M374.1 223h0.9M374.8 228.2h0.9M378.4 229h0.9M367.9 220.5h0.9M366.4 214.8h0.9M369.8 217.6h0.9M364.2 220.8h0.9M370.2 222h0.9M362.2 211.5h0.9M374.5 215.4h0.9M369.9 224.9h0.9M369 218.6h0.9M375.8 220.8h0.9M366.2 223.7h0.9M377.6 219.1h0.9M380.9 221.4h0.9M373 215.6h0.9M368.6 226.5h0.9M374.5 222.1h0.9M368.9 222h0.9M371.2 230.5h0.9M363.1 215.7h0.9M365.6 219.8h0.9M378.2 218.2h0.9M380.6 221.9h0.9M376.3 230.2h0.9M373.5 223.4h0.9M377.7 228.1h0.9M369.9 223.1h0.9M343.2 242h0.9M343.6 239.1h0.9M346.1 238.9h0.9M341.7 241.4h0.9M345.2 238.7h0.9M343.1 241.8h0.9M341.6 241.8h0.9M344.2 241.3h0.9M347.4 238.5h0.9M342.3 239.3h0.9M347.1 238.9h0.9M347.7 237.4h0.9M345.2 240.3h0.9M341.5 241.2h0.9M344.3 240.8h0.9M348.2 237.8h0.9M346.7 237.7h0.9M342.8 242.6h0.9M349.8 240.1h0.9M348.9 239.3h0.9M303.8 252.5h0.9M304.2 253.8h0.9M304.4 254.7h0.9M304.6 253.5h0.9M303.1 252.6h0.9M303.8 250.9h0.9M304.9 253.2h0.9M292.8 264.5h0.9M299.6 253.1h0.9M295.7 262.2h0.9M291.6 262.7h0.9M286.7 271.6h0.9M288.9 262.7h0.9M291.7 262.1h0.9M296.7 254.5h0.9M293.7 262.6h0.9M288.7 267.3h0.9M288.7 263.1h0.9M301.5 258.4h0.9M288 265.8h0.9M288.2 266.9h0.9M300 253.8h0.9M284.8 268.3h0.9M394.6 146.2h0.9M406.8 143.1h0.9M415.1 140.5h0.9M413.4 138.8h0.9M412 138.2h0.9M407.7 139.5h0.9M422 138.4h0.9M408.4 139.6h0.9M437.9 165.7h0.9M417 164.5h0.9M438.3 179.7h0.9M434.9 168.3h0.9M431 161.7h0.9M426.4 183.5h0.9M424.2 159.7h0.9M420.3 168.5h0.9M419.6 161h0.9M413.4 163.4h0.9M433.5 177.9h0.9M431.8 184.6h0.9M434.8 181h0.9M418.6 174.9h0.9M415.3 170.5h0.9M435.6 164.7h0.9M434.3 178.6h0.9M446.1 168.8h0.9M427.8 184.3h0.9M414.9 168.1h0.9M413.7 164.8h0.9M439.4 172.2h0.9M445.5 172.9h0.9M440.1 168.3h0.9M442.3 175.3h0.9M440 173.8h0.9M419.4 173.7h0.9M434.4 120.3h0.9M437.5 120.7h0.9M439.6 120.4h0.9M437.9 124.1h0.9M436.4 121.2h0.9M437.5 122.7h0.9M438.5 121.6h0.9M431.9 121.1h0.9M433.2 122.2h0.9M435.6 123h0.9M431.8 118.5h0.9M436.3 122.4h0.9M440.4 124.5h0.9M439.3 123.3h0.9M432.6 120.4h0.9M431.1 122.8h0.9M430.7 122.6h0.9M435.3 122.4h0.9M433.4 122.5h0.9M433.9 122.6h0.9M438.6 124.4h0.9M435.1 119.5h0.9M435.2 122.1h0.9M439 122.7h0.9M436 119h0.9M435.4 122.3h0.9M436.3 124.4h0.9M436.9 121h0.9M439.1 120.1h0.9M499.2 197h0.9M499.8 196.9h0.9M500.3 194.7h0.9M501.3 193h0.9M499 197.2h0.9M500 195h0.9M503.5 194.9h0.9M504.9 194.8h0.9M500.1 194.8h0.9M499.6 196.7h0.9M501 196.9h0.9M501.6 198.2h0.9M500.2 192.5h0.9M503.2 195.5h0.9M498.7 194.6h0.9M499.4 192.4h0.9M499.4 194.1h0.9M468.6 139.2h0.9M468.6 136.6h0.9M504.1 164.5h0.9M549.3 201.3h0.9M554.4 209.6h0.9M546.7 191.9h0.9M555.1 204h0.9M549.6 193.3h0.9M550.4 195.1h0.9M552.4 197h0.9M560.5 208.9h0.9M556.9 203.8h0.9M560 220.4h0.9M556.6 209.4h0.9M557.7 213.6h0.9M557.1 212.9h0.9M557.7 211.1h0.9M560.1 208.3h0.9M560.2 209.8h0.9M559.6 207.9h0.9M561 215.1h0.9M560.2 210.4h0.9M562.2 216.2h0.9M561.2 216h0.9M561.8 211.7h0.9M560.8 214.9h0.9M565 214.1h0.9M563.1 210.7h0.9M565.1 201.4h0.9M553 214.2h0.9M558.7 211h0.9M554.5 213.1h0.9M554.2 214.7h0.9M556.1 214.3h0.9M560.7 215h0.9"/>
<path stroke="#00ff21" d="M372 234.5h0.9M371.8 235.5h0.9M370.4 239h0.9M372.8 238.9h0.9M375.9 242h0.9M375.1 239.7h0.9M371.3 237.4h0.9M372.1 239.7h0.9M370 238.5h0.9M371.7 237h0.9M373.5 240.8h0.9M372.3 237.6h0.9M370.8 239.5h0.9M374.9 240.6h0.9M375.6 243h0.9M372.9 236.6h0.9M373.1 243.9h0.9M375.3 241.1h0.9M374.3 244.7h0.9M373.8 244h0.9M370.6 239.7h0.9M377.1 243.7h0.9M375.8 242.6h0.9M373.3 237.4h0.9M373.6 243.7h0.9M372.6 240h0.9M373.8 238.4h0.9M370.8 237.5h0.9M374.8 244.2h0.9M371.9 240.8h0.9M374.3 238.3h0.9M374.5 241.4h0.9M375.6 240.2h0.9M371.1 240.8h0.9M370.8 238h0.9M374.3 237.8h0.9M372.7 237.4h0.9M371 240.5h0.9M374.5 243.8h0.9M373 240.4h0.9M375 241.2h0.9M370.9 240.1h0.9M372.2 242.8h0.9M371.6 240.2h0.9M372.3 236.9h0.9M374.7 240.7h0.9M373.2 242.6h0.9M374.3 243.7h0.9M373.1 237.3h0.9M372.3 243.1h0.9M371.2 237h0.9M371.7 239.7h0.9M371.8 241.3h0.9M372.9 239h0.9M371.6 235.6h0.9M369.9 237h0.9M371.5 238.7h0.9M372 240h0.9M371.6 240.7h0.9M370.7 238.5h0.9M372 239.3h0.9M374.7 240.7h0.9M373.3 239.3h0.9M371.3 237.3h0.9M371.7 239.2h0.9M372.5 241.6h0.9M369.9 236.3h0.9M371.4 240.4h0.9M372.7 242.5h0.9M370.2 238.3h0.9M370.9 237.8h0.9M372.4 240.6h0.9M371.5 238.9h0.9M369.9 236.3h0.9M369.1 234.9h0.9M372.2 236.8h0.9M372.5 239.5h0.9M371.9 237.1h0.9M371.7 236.2h0.9M373.4 239.2h0.9M371.3 235.4h0.9M373.3 241.6h0.9M369.6 235.5h0.9M369.9 237.9h0.9M375.1 242.6h0.9M372.7 238.6h0.9M371.1 238.4h0.9M371.7 240.4h0.9M373 243h0.9M372.5 237.8h0.9M370.8 237.7h0.9M373.3 239.2h0.9M373.7 241h0.9M371.4 225.4h0.9M365 213.3h0.9M367 211.7h0.9M374 223.7h0.9M364 217.7h0.9M367.2 206.5h0.9M371.6 227.3h0.9M379.1 223.8h0.9M374.5 221.9h0.9M379.5 221.5h0.9M361.8 211.1h0.9M369.6 224.4h0.9M378.6 227.3h0.9M363.1 213.1h0.9M371.1 220.7h0.9M364.6 212.7h0.9M365.5 209.7h0.9M373.6 208.5h0.9M372.9 221.2h0.9M376 215.8h0.9M370.2 208.9h0.9M372.3 211.6h0.9M374.3 227.7h0.9M366.9 218.8h0.9M376 223.2h0.9M370.7 223.9h0.9M372.3 207.9h0.9M380.3 222.5h0.9M376.3 219.2h0.9M373.4 214.5h0.9M370.1 205.6h0.9M377.1 218.8h0.9M374.4 214.4h0.9M369.1 215.3h0.9M369.2 206.4h0.9M362.3 208.7h0.9M378.8 223.1h0.9M363.7 212.6h0.9M369.3 207.9h0.9M366.6 220.2h0.9M365.6 221.9h0.9M372.7 219h0.9M374.7 212h0.9M378.5 225.4h0.9M367.5 209.6h0.9M366.4 208h0.9M371.1 215.3h0.9M372.5 216.3h0.9M362.8 215.7h0.9M367.4 212.8h0.9M370.5 204.5h0.9M365.7 208.9h0.9M372.9 218.6h0.9M373.4 219h0.9M364.4 219.1h0.9M376.9 219.5h0.9M378.7 226.2h0.9M379.2 224h0.9M373.7 208.7h0.9M365.8 212.9h0.9M363.6 217.5h0.9M376.9 214.4h0.9M377.7 223.1h0.9M368.4 213.9h0.9M370.7 213.9h0.9M365.9 223.2h0.9M359.7 202.3h0.9M366.4 205.6h0.9M366.8 218.5h0.9M364.2 220.4h0.9M369 209.4h0.9M366.2 210.1h0.9M370.5 209.4h0.9M368.4 218h0.9M370.7 213.1h0.9M362.1 206.5h0.9M362.5 203.4h0.9M371 212.6h0.9M366.9 225.4h0.9M364.3 212.2h0.9M372.5 212.7h0.9M377.1 215.7h0.9M379.1 224.6h0.9M362.9 215.3h0.9M368.5 217.5h0.9M369.7 216.4h0.9M370.4 222.6h0.9M364.3 219.9h0.9M375.4 222.6h0.9M373.4 219.3h0.9M372.3 211.8h0.9M364.4 213.1h0.9M375.1 211.3h0.9M371.2 214.1h0.9M365.3 223h0.9M367.6 213.9h0.9M376.4 216h0.9M377.8 223h0.9M363.2 218.6h0.9M375 219.7h0.9M370.9 210.5h0.9M369.6 222.6h0.9M376 214.8h0.9M377.4 222.6h0.9M373.9 220.9h0.9M373.7 212.2h0.9M374.9 218h0.9M372.6 218.3h0.9M365.8 202.8h0.9M368.2 206h0.9M366.9 217.1h0.9M373.4 208.1h0.9M374.1 210h0.9M376 223.2h0.9M371.1 209.9h0.9M372.8 212.9h0.9M366.2 214.4h0.9M338.4 238.4h0.9M345.5 236.6h0.9M346.6 238.7h0.9M339.1 240h0.9M347.1 237.5h0.9M338 238.5h0.9M347 236.4h0.9M343.7 238.2h0.9M341.6 236.9h0.9M341.5 239.1h0.9M348.1 235.5h0.9M340.3 240.2h0.9M346.9 238.1h0.9M346.5 238.9h0.9M347 238.6h0.9M346.3 238.4h0.9M347.6 237h0.9M340.1 240.7h0.9M342.1 238.1h0.9M344.1 236.5h0.9M343 237.8h0.9M346.7 237.4h0.9M347.9 236.9h0.9M302.5 250.9h0.9M302.4 251.9h0.9M302.7 251.7h0.9M302.5 250.8h0.9M304.7 252.9h0.9M303.7 251.7h0.9M302.3 251.2h0.9M302.8 251.1h0.9M303.5 250.3h0.9M289.8 265.3h0.9M284.5 267h0.9M284.9 265.8h0.9M300.3 253.7h0.9M294.7 257.7h0.9M294.1 259.8h0.9M285.8 267.5h0.9M291.6 261.9h0.9M295.5 259.8h0.9M295.7 252.8h0.9M288 266.4h0.9M289.1 266.5h0.9M290.5 259.9h0.9M286.3 266h0.9M293.7 261.2h0.9M287 264.6h0.9M299.5 255.1h0.9M414.7 177.7h0.9M427.8 183.6h0.9M435.6 177.2h0.9M433.7 173.9h0.9M430.1 169.4h0.9M439.1 174.2h0.9M436.9 173.4h0.9M421.6 180.3h0.9M440.2 179.7h0.9M425.8 164.8h0.9M429.9 161.6h0.9M426.4 177.7h0.9M415.4 161h0.9M423.4 174.7h0.9M424.1 173.7h0.9M441.1 177.2h0.9M413.7 170.8h0.9M437.9 163h0.9M431 163.6h0.9M434.8 174.8h0.9M422.2 170.8h0.9M422 170.4h0.9M421.5 170.8h0.9M438.7 123.1h0.9M439.5 122h0.9M435.8 120.7h0.9M438.2 119.2h0.9M434.9 123.4h0.9M439.2 122.2h0.9M433.7 122.3h0.9M438.7 119.9h0.9M438.5 120.2h0.9M436.3 120.6h0.9M436.8 121.9h0.9M432.2 122.1h0.9M435.2 119.2h0.9M433.5 123.3h0.9M436.4 122.3h0.9M434.4 119.8h0.9M432.3 121.1h0.9M432.9 119.4h0.9M435 119.8h0.9M352 152.8h0.9M351.8 152.8h0.9M500.1 194.6h0.9M501.1 193.9h0.9M500.6 192.8h0.9M499.3 197.1h0.9M500.8 194.5h0.9M497.7 196.6h0.9M501.2 194.2h0.9M502.3 192.9h0.9M498.8 192.7h0.9M503.1 192h0.9M501.5 198.5h0.9M499.2 194.5h0.9M500.2 197.6h0.9M498.5 195.3h0.9M503.6 195.7h0.9M501.1 193.4h0.9M502.9 195.8h0.9M501.9 192.9h0.9M500.4 198.5h0.9M501.2 190.3h0.9M499.8 194.9h0.9M502.4 194.4h0.9M500.3 195h0.9M501 197.4h0.9M501.5 191.3h0.9M499.4 197.4h0.9M500.2 190.3h0.9M468.8 139.7h0.9M485.7 147.6h0.9M483.4 148.7h0.9M485.1 148.6h0.9M485.5 147.6h0.9M503.5 159.5h0.9M503.4 163.3h0.9M505 160.5h0.9M557.2 211h0.9M555.8 203.5h0.9M556.2 203.1h0.9M555.3 203.2h0.9M557.7 206.1h0.9M551.9 206.9h0.9M555.2 218.8h0.9M554.7 213.3h0.9M555 217h0.9M554.4 219.9h0.9M553.6 211.9h0.9M552.9 207.3h0.9M552.9 210.7h0.9M554.6 214.4h0.9M554.5 214.4h0.9M559.3 215.7h0.9M556.7 213h0.9M557.6 211.5h0.9M557.8 212.2h0.9M558.7 204.6h0.9M560.2 208.6h0.9M560.4 212.6h0.9M560 209.7h0.9M562.8 218.4h0.9M557.8 202.2h0.9M559.7 211.5h0.9M559.4 210.7h0.9M561 212.3h0.9M563.3 208h0.9M564.6 208.1h0.9M562.7 204.7h0.9M561.5 203.1h0.9M561.4 202.9h0.9M564.8 212.6h0.9M564.4 207.5h0.9M564 204.9h0.9M558.5 209.2h0.9M556.6 209.2h0.9"/>
<path stroke="#00ff43" d="M370.2 233.9h0.9M371 233.8h0.9M372 234h0.9M370.6 232.8h0.9M370 233h0.9M373 235h0.9M371.6 234.8h0.9M369 232.4h0.9M370.5 235.3h0.9M372.2 233.7h0.9M368.9 235h0.9M370.2 236.4h0.9M369.6 231.9h0.9M370.7 233.8h0.9M370 236.1h0.9M370 232.3h0.9M368.7 234.2h0.9M369.6 233.1h0.9M370.1 234.7h0.9M370.2 232.3h0.9M368.1 234.8h0.9M370.8 232.1h0.9M369.2 236.9h0.9M370.7 239.3h0.9M374.2 237.8h0.9M371.2 237h0.9M373.4 236.5h0.9M371.6 237h0.9M371.6 236h0.9M371.8 238.4h0.9M370.7 236.6h0.9M372.5 236.2h0.9M370.7 240h0.9M372.2 238.1h0.9M372.2 239.3h0.9M372.4 236.3h0.9M372.5 240.3h0.9M372.9 239.5h0.9M370.9 237h0.9M372.1 240.6h0.9M374 238.1h0.9M373.7 237.8h0.9M370.9 240.5h0.9M372.5 236.5h0.9M370.3 238.7h0.9M373.9 238.1h0.9M369.9 237.1h0.9M373.9 237.3h0.9M370.4 238.5h0.9M372.8 241.1h0.9M373 239.7h0.9M370.8 237.6h0.9M369.8 233.9h0.9M367.4 232.3h0.9M370 235.2h0.9M371.2 235.5h0.9M370.3 232.8h0.9M368.7 231.4h0.9M369 235.4h0.9M370.9 234.3h0.9M371.5 235.3h0.9M367.3 233h0.9M369.2 233.1h0.9M370.6 233.8h0.9M370.2 234.3h0.9M369.4 233.2h0.9M369.4 232.6h0.9M372.4 237h0.9M368.8 233.8h0.9M370.1 232.3h0.9M369.4 235.1h0.9M369.4 231.4h0.9M369.5 237.1h0.9M370.7 238.7h0.9M367.5 233.4h0.9M370 233.3h0.9M370.1 236.8h0.9M368.6 235.2h0.9M371.3 235.8h0.9M369.5 233.7h0.9M366.8 231.4h0.9M370.8 236h0.9M367.5 233.5h0.9M370.4 238h0.9M369.2 232.2h0.9M370.3 236.8h0.9M368.8 231.5h0.9M372.2 220.1h0.9M362.8 203.6h0.9M376.8 220.5h0.9M362.3 205.8h0.9M363.9 211.2h0.9M365.1 203.2h0.9M365.8 207.9h0.9M366.9 217.5h0.9M365.2 203.2h0.9M371.2 210h0.9M366.1 220.3h0.9M361.8 205.2h0.9M370.1 212.5h0.9M363.6 209.6h0.9M368 217.6h0.9M371.8 205.2h0.9M360.5 200.3h0.9M364.8 211.7h0.9M365.4 213.7h0.9M366.3 216.5h0.9M363.3 207.7h0.9M369.9 204.2h0.9M360.5 202.4h0.9M375.1 216.1h0.9M366.4 203.4h0.9M371.8 205.7h0.9M375.3 215.2h0.9M368.1 211.4h0.9M362.6 211.1h0.9M368.8 203.9h0.9M372.1 214.8h0.9M360.6 207.5h0.9M360.4 199.9h0.9M361.3 196.6h0.9M367.2 205.4h0.9M360.7 205.3h0.9M373.1 212.3h0.9M373.7 215.4h0.9M368.6 206.5h0.9M367.8 207.2h0.9M369.6 218.8h0.9M363.5 212h0.9M367.5 208.7h0.9M371.7 204.9h0.9M359.9 201.9h0.9M365.6 206.4h0.9M369.8 206.1h0.9M368.3 201.3h0.9M369.2 205.6h0.9M359.9 199.9h0.9M370.3 216.7h0.9M372.8 209h0.9M368.3 212.8h0.9M366.3 199.5h0.9M363 205.1h0.9M367.6 210.2h0.9M372 217.4h0.9M367.6 206h0.9M364.3 214.2h0.9M364.3 215.7h0.9M362.3 197h0.9M367 203.3h0.9M368.9 202.5h0.9M369.2 212.6h0.9M374.8 220.5h0.9M364.3 203.9h0.9M370 203.8h0.9M365 220.1h0.9M372.5 218.5h0.9M377.1 219.8h0.9M370 207.9h0.9M371.8 206.3h0.9M368 214.4h0.9M369.4 208.3h0.9M364.9 199.8h0.9M370.6 204.2h0.9M375.5 211.3h0.9M366.2 204.8h0.9M379.1 217.7h0.9M366 209.3h0.9M366.9 207h0.9M363 205.7h0.9M367.7 202.6h0.9M375.3 215.2h0.9M372.3 210.4h0.9M369.8 216.1h0.9M361.7 205.5h0.9M364.9 205.9h0.9M359.9 200.6h0.9M373.4 209.2h0.9M367.5 216h0.9M372.5 215.1h0.9M370.3 216h0.9M369.4 214.8h0.9M367.1 210h0.9M365.7 208.5h0.9M366.5 210.6h0.9M362.5 206.7h0.9M361 201.1h0.9M362.1 206.3h0.9M370.2 206.1h0.9M364 204.4h0.9M363.2 213.5h0.9M368.4 214.5h0.9M364.7 199h0.9M359.8 203.4h0.9M341.4 238.8h0.9M340.5 236.6h0.9M345.7 235.9h0.9M345.3 237.3h0.9M339.8 237h0.9M346.3 236.2h0.9M347 234.3h0.9M341.8 235.6h0.9M338.5 238.3h0.9M342.6 237.9h0.9M348.8 235.4h0.9M340.7 236.8h0.9M346.7 236h0.9M339.6 239.4h0.9M340.4 238.8h0.9M341.7 236.7h0.9M348.1 234.5h0.9M342.9 237.6h0.9M339.7 237.5h0.9M348.5 235h0.9M338.2 238.9h0.9M343.1 237.4h0.9M347.2 236.5h0.9M342.7 236.2h0.9M341.6 236.2h0.9M341.9 237.9h0.9M347.1 237.8h0.9M348.4 235.4h0.9M345.1 237.2h0.9M349.2 236.8h0.9M343.6 236.3h0.9M348.9 236h0.9M300.7 248.8h0.9M302 249.7h0.9M303.2 249.9h0.9M300.9 247.5h0.9M300.7 248.3h0.9M301.1 248.2h0.9M302.6 250.8h0.9M301.7 250.2h0.9M302.6 250h0.9M302.1 248.9h0.9M304.2 251.4h0.9M303.4 251.4h0.9M302.8 249.6h0.9M303 249.3h0.9M301.6 249.2h0.9M302.8 250.4h0.9M301.6 249.6h0.9M287.4 265.5h0.9M298.5 250.3h0.9M297.8 253.3h0.9M288.4 263.7h0.9M295.4 253.7h0.9M292.1 257.2h0.9M299.2 255h0.9M295.9 254.1h0.9M287.1 266.1h0.9M289.9 262h0.9M290.5 256h0.9M296.3 252h0.9M286.4 259h0.9M292 254.3h0.9M292.1 257.3h0.9M433.9 182.5h0.9M432.1 165.8h0.9M414.5 164.5h0.9M446.9 173.5h0.9M435.9 177.7h0.9M418.8 173.7h0.9M418 173.3h0.9M419.4 169.1h0.9M417.2 171.2h0.9M422.4 169.2h0.9M418.4 174.8h0.9M501.1 192.9h0.9M501.8 192h0.9M500.6 192.5h0.9M503.8 192.7h0.9M503.3 194.3h0.9M501.5 196.1h0.9M498.8 191.4h0.9M504.2 193h0.9M502.2 190.4h0.9M501.6 194.7h0.9M498.5 195.5h0.9M500.3 195.3h0.9M500 194.9h0.9M499.7 193.7h0.9M500.8 196.3h0.9M485 144.5h0.9M504 162.3h0.9M504.7 162.4h0.9M502.9 162.1h0.9M504.8 163h0.9M485.9 143.1h0.9M485.2 144h0.9M483.8 142.3h0.9M559 210.2h0.9M552.8 213.6h0.9M551.4 207.6h0.9M551.5 207.6h0.9M554.6 205.5h0.9M554.2 202h0.9M557.8 215.8h0.9M554.6 202.4h0.9M554.5 208h0.9M555.2 206h0.9M554.5 205.5h0.9M558.6 199.5h0.9M559.7 205.1h0.9M558.3 201.5h0.9M558.8 202.4h0.9M560.3 210.7h0.9M561.7 204.4h0.9M562.4 205.9h0.9M562.7 202.9h0.9M563.3 202.2h0.9M563.3 202.4h0.9M563.1 193.4h0.9M563.3 194.1h0.9M563.8 196.1h0.9M563.2 195.8h0.9"/>
<path stroke="#00ff66" d="M372.1 235.3h0.9M367.9 231.3h0.9M372.1 234.2h0.9M372.1 233.7h0.9M370.3 231.7h0.9M367.6 228.5h0.9M365.5 230h0.9M371.3 234.2h0.9M366.8 231.7h0.9M369 233h0.9M367.3 232.6h0.9M371 234.5h0.9M371.6 234h0.9M364.6 228.1h0.9M372 234.4h0.9M371.3 231.9h0.9M367.4 228.2h0.9M370.9 232.1h0.9M370.1 230.2h0.9M366.8 231.8h0.9M369.1 227.8h0.9M368.9 230.9h0.9M369.1 232.6h0.9M366.1 231.2h0.9M368.3 229.7h0.9M369 229.2h0.9M372.4 234.2h0.9M365.6 230.1h0.9M368.3 234.2h0.9M366.9 232.9h0.9M368.1 232.8h0.9M370 232.9h0.9M368.3 232.5h0.9M367.5 231.2h0.9M369.5 230.2h0.9M367.3 231.9h0.9M367.8 227h0.9M370 229.7h0.9M369.7 230.7h0.9M368.2 229.2h0.9M366.7 228.2h0.9M367.1 232.7h0.9M370.3 233.3h0.9M366.9 231.3h0.9M366.8 231.5h0.9M368.4 233.2h0.9M369.8 232.7h0.9M369.7 236.6h0.9M368.1 228.2h0.9M369.9 229.3h0.9M369.1 235.3h0.9M368.5 228h0.9M369.2 231.1h0.9M368.1 231.1h0.9M371.2 233.4h0.9M370.6 230.6h0.9M369 231.1h0.9M366.7 231.2h0.9M367.6 230.6h0.9M372.1 233.7h0.9M370 234h0.9M371.6 233.7h0.9M368.7 227.2h0.9M367.3 229.3h0.9M371.3 234.8h0.9M369.9 229h0.9M370.3 231.8h0.9M367.4 230.7h0.9M371.7 233.5h0.9M366.7 231.8h0.9M370.4 230.6h0.9M372.7 236.6h0.9M370.3 237.9h0.9M370.8 237.1h0.9M372.7 235.3h0.9M372.3 235.3h0.9M371.6 237.3h0.9M372.7 237.3h0.9M367.8 229.6h0.9M365.6 229h0.9M367.3 232.6h0.9M367.5 230.3h0.9M368.2 231.3h0.9M367.3 231.8h0.9M368.6 231.2h0.9M368.5 235h0.9M366.8 231.2h0.9M366.9 230.1h0.9M368.6 229.7h0.9M368.7 231.3h0.9M368 229.8h0.9M366.6 228.9h0.9M366.3 231.1h0.9M368.6 232h0.9M365.5 228.7h0.9M367.9 228.7h0.9M365.9 230.7h0.9M366.6 230.3h0.9M368.7 231.5h0.9M365.8 228.8h0.9M367.4 233.3h0.9M367.9 228.5h0.9M368.4 230h0.9M369.3 233.3h0.9M365.4 229h0.9M368.5 231.8h0.9M369.6 231.5h0.9M367.9 229.1h0.9M368.4 230.7h0.9M368.3 229.5h0.9M370.6 233.9h0.9M368.3 232.2h0.9M368 232.2h0.9M367.6 229.1h0.9M369.4 231.8h0.9M368.4 230.2h0.9M369.2 231.7h0.9M365.4 229.5h0.9M366.7 228h0.9M368 232.6h0.9M369 230.9h0.9M367.6 230.3h0.9M370.8 207.2h0.9M367.5 200.5h0.9M360.9 207.7h0.9M364.2 203.5h0.9M358.7 194.2h0.9M362.5 203.8h0.9M358.3 197.1h0.9M373.6 208.3h0.9M360.8 202.4h0.9M361.7 198.4h0.9M369.5 207.4h0.9M368.6 203.3h0.9M359.6 196.6h0.9M359.8 203.6h0.9M365.2 200.9h0.9M369.9 206.4h0.9M367.9 206.6h0.9M368.6 209.4h0.9M365.7 207.4h0.9M365.6 202.2h0.9M361.8 200h0.9M362.2 197.1h0.9M368.5 210.3h0.9M367.4 205h0.9M360.5 207.5h0.9M357.9 196.1h0.9M360.9 200.7h0.9M361.3 199.6h0.9M365.1 208.6h0.9M360.4 200.5h0.9M371.1 209.8h0.9M359.9 200.9h0.9M361 199.1h0.9M361.9 198.6h0.9M369.4 206h0.9M362.8 197.4h0.9M366.3 206.4h0.9M361 195.7h0.9M369.8 204.2h0.9M362 202.7h0.9M367 207.4h0.9M375.6 211.7h0.9M359.2 197.4h0.9M373.8 213.1h0.9M368.8 207.8h0.9M366.7 202.6h0.9M362.3 210.4h0.9M362 206.9h0.9M363 197.1h0.9M361.3 209h0.9M365.8 200.6h0.9M359.6 195.6h0.9M366 198.7h0.9M367.5 204.4h0.9M364.2 204.2h0.9M366 209.3h0.9M367.2 207.9h0.9M364.5 207.6h0.9M361.1 199.8h0.9M370.6 206.1h0.9M359.3 196.1h0.9M366.1 202.4h0.9M360.8 197.9h0.9M365.2 203h0.9M364.8 204.4h0.9M363.2 197.8h0.9M368.5 208.1h0.9M367.7 211.3h0.9M371 210.5h0.9M373.5 208.1h0.9M364.2 202.6h0.9M370.1 208.4h0.9M364.6 201.7h0.9M369.4 204h0.9M362.1 198.3h0.9M372 209.7h0.9M359.8 199.5h0.9M365.1 208.7h0.9M363.4 202.9h0.9M369.3 213h0.9M362.2 194.6h0.9M364.5 198.6h0.9M361 206.7h0.9M366.3 202.6h0.9M373 211.5h0.9M364.8 210.3h0.9M361.1 205.3h0.9M363.3 210.2h0.9M368.4 208.7h0.9M361.2 206.4h0.9M364.1 197.7h0.9M365.4 200.9h0.9M361.2 202.9h0.9M345.5 235.9h0.9M345.8 234.3h0.9M342.4 235h0.9M344.6 235h0.9M341.9 236.6h0.9M345.7 236.7h0.9M343.9 234.8h0.9M345.1 237.2h0.9M340.1 235.3h0.9M345.1 234.8h0.9M346.6 235.5h0.9M339.9 236.3h0.9M346.2 235.4h0.9M346.6 235h0.9M344.7 233.8h0.9M343.6 235.6h0.9M340.1 235.2h0.9M347.6 234.7h0.9M338 235.1h0.9M337.8 236.6h0.9M337.3 237.7h0.9M347.3 232.4h0.9M339.1 237.6h0.9M342.1 235h0.9M339.4 237.5h0.9M347.6 235h0.9M338.4 238.1h0.9M342.2 237.6h0.9M343.6 235.5h0.9M347.9 235.8h0.9M346.2 235.4h0.9M348.3 234.8h0.9M302.6 248.5h0.9M300.5 246.7h0.9M300.3 247h0.9M300.1 247.6h0.9M302 248.8h0.9M300 246.7h0.9M302.3 248.9h0.9M301.4 246.8h0.9M301.8 247.7h0.9M300.2 247.3h0.9M301.2 248.8h0.9M301.2 249.7h0.9M300.4 248.3h0.9M300 247.1h0.9M300.5 247.9h0.9M300.1 247.2h0.9M300.3 248h0.9M300.2 248.2h0.9M290 260.9h0.9M298.7 249.4h0.9M288.7 254.2h0.9M299 253.9h0.9M294.8 256.3h0.9M287.6 261.5h0.9M294.2 251.7h0.9M300 251h0.9M289.4 259.6h0.9M294.2 253.4h0.9M299.3 251.4h0.9M415.4 169.6h0.9M420.4 172.5h0.9M419.9 168.9h0.9M420.4 169.5h0.9M350.2 151.2h0.9M347.2 150.9h0.9M500.7 190.2h0.9M503.5 191h0.9M469.1 132.8h0.9M468.9 136.4h0.9M469.1 131.2h0.9M468.2 130h0.9M486.6 140.4h0.9M484.8 144h0.9M486.2 138.2h0.9M486.2 142.5h0.9M483.9 142.3h0.9M502.6 160.1h0.9M503.1 156.4h0.9M504.7 157.4h0.9M504.2 159.6h0.9M503.4 156.6h0.9M504.4 156.7h0.9M483 139.6h0.9M483.6 139.5h0.9M482.2 140.6h0.9M484.5 142.4h0.9M485.4 141.8h0.9M552 210.2h0.9M548.6 201.1h0.9M549.2 200.5h0.9M553 209.7h0.9M550.9 200.1h0.9M553.1 210.9h0.9M550.7 199.6h0.9M552.6 208.4h0.9M553 207.9h0.9M550.8 204.2h0.9M554.1 205.2h0.9M554.9 200.9h0.9M555.9 209.3h0.9M556.2 207.8h0.9M555.8 207.9h0.9M553 196.3h0.9M554.2 199.5h0.9M556 191.7h0.9M558 199.1h0.9M559.8 206.5h0.9M556.2 193.9h0.9M555.7 193.1h0.9M562.9 206.4h0.9M559.4 194.6h0.9M560.3 194.6h0.9M558.3 190.7h0.9M562.4 206h0.9M559.3 182.6h0.9M560.3 185.2h0.9M563 194.2h0.9M562.2 188.2h0.9M563.5 195.3h0.9M565.2 195.8h0.9M564.2 196.2h0.9M563 195.4h0.9M562.8 189.4h0.9"/>
<path stroke="#00ff87" d="M365 225.8h0.9M367.8 224.6h0.9M367.1 223.4h0.9M365.2 225.3h0.9M363.8 226.7h0.9M366.2 224.7h0.9M365.6 223.4h0.9M368.4 225.9h0.9M365.1 228.7h0.9M370.9 233.3h0.9M365.7 227h0.9M366.3 231h0.9M365.9 228.6h0.9M370.3 231h0.9M368 233.9h0.9M364.1 227.2h0.9M367 227.2h0.9M369.8 228.6h0.9M367.5 233.9h0.9M367 229.5h0.9M370 231.6h0.9M365.5 228.4h0.9M367.9 233.1h0.9M366.5 230.2h0.9M367.2 231.4h0.9M366 227.9h0.9M366 228.2h0.9M368.7 228.7h0.9M368.8 230.2h0.9M367.9 228.8h0.9M366.8 231.8h0.9M365.7 226.4h0.9M368.4 230.9h0.9M370.7 230.7h0.9M367.4 227.1h0.9M364 227.1h0.9M368.5 228.8h0.9M366.6 229.3h0.9M369.1 231.8h0.9M365.2 228.7h0.9M370.3 232.1h0.9M371.4 232h0.9M368.6 228.4h0.9M368.1 228.6h0.9M366.9 231.6h0.9M366.7 229h0.9M365.2 228.8h0.9M367.3 231.1h0.9M365.4 229.3h0.9M367.2 229h0.9M367.3 228.7h0.9M367.4 228.1h0.9M366.3 230.3h0.9M367.2 230.8h0.9M367.1 229.6h0.9M366.9 228h0.9M366.8 227.9h0.9M368.5 230h0.9M366.1 229.1h0.9M367.3 230h0.9M367.4 228.9h0.9M366.6 229.5h0.9M362.5 197.5h0.9M364.7 200.4h0.9M358.7 196.5h0.9M359.1 196.6h0.9M361.6 196.2h0.9M365.1 200.1h0.9M361.9 200.6h0.9M365 197.3h0.9M360.7 196.6h0.9M365.1 198h0.9M360.8 204.4h0.9M366 198.4h0.9M358.6 196.7h0.9M362.5 197.4h0.9M364.9 198h0.9M365.1 198.7h0.9M369.5 205.1h0.9M358 196.4h0.9M365 202.5h0.9M364.9 199h0.9M362 197.9h0.9M359.2 194.6h0.9M367.1 203.2h0.9M363.2 201.8h0.9M338 236.8h0.9M345.7 235h0.9M339.9 234.8h0.9M346.9 232.4h0.9M337.6 237.1h0.9M347.5 235h0.9M342 233.4h0.9M343.4 232.7h0.9M338.5 235.9h0.9M342.2 233.9h0.9M342.2 232.9h0.9M348 233.4h0.9M346.4 233.1h0.9M345 234.2h0.9M348.8 234.7h0.9M339.4 235.7h0.9M344.5 232.5h0.9M347.3 233.6h0.9M340.9 234.5h0.9M337.3 235.7h0.9M344.2 233.3h0.9M344.8 234.7h0.9M344.4 231.8h0.9M337.3 236.7h0.9M338.7 234.7h0.9M347.9 233.5h0.9M337.4 234.6h0.9M338.5 234.5h0.9M344.3 233.1h0.9M336.7 234.1h0.9M346 231.8h0.9M343.9 232.8h0.9M340.8 235.9h0.9M340.2 233.5h0.9M348.7 234.6h0.9M342.4 233.5h0.9M299.7 246.7h0.9M301.4 247.9h0.9M299.5 247h0.9M301 246.7h0.9M300.1 245h0.9M301 247.5h0.9M299.5 244.8h0.9M287.7 260.6h0.9M285.1 262.8h0.9M291.7 256.3h0.9M297.1 247.4h0.9M296.4 248.9h0.9M286.4 256.4h0.9M291.3 258.4h0.9M292.7 255.6h0.9M284.4 263.7h0.9M293 254h0.9M283.6 264.3h0.9M290.8 252.4h0.9M417.8 166.5h0.9M421.5 172.7h0.9M421.3 168.6h0.9M418.3 171.5h0.9M421.1 169.7h0.9M419.6 170.6h0.9M422.9 171h0.9M421.4 168.5h0.9M420.2 168.3h0.9M467.6 127.1h0.9M468.9 126.7h0.9M467.9 131.8h0.9M484.9 135.5h0.9M484.8 137.5h0.9M486.9 137.4h0.9M485.1 141.2h0.9M484.6 138.7h0.9M485.5 142.2h0.9M486.5 142.6h0.9M484.5 136.5h0.9M502.8 154.9h0.9M505.1 157.8h0.9M503.2 155.9h0.9M503.2 155.9h0.9M504.4 152.2h0.9M483.3 139.6h0.9M485.1 141.8h0.9M484.8 139.2h0.9M483.1 140.4h0.9M486.1 141.1h0.9M484.9 138.4h0.9M544.1 216.4h0.9M550.2 198.1h0.9M550.9 204.3h0.9M552 206h0.9M549 201.3h0.9M549.8 203.8h0.9M551.5 194.4h0.9M554.1 198.8h0.9M554.9 204.7h0.9M555.5 203.1h0.9M556.4 196h0.9M558.8 203.8h0.9M557.7 198.8h0.9M554.5 188.5h0.9M555.4 189.3h0.9M557.1 197.6h0.9M557.8 186.5h0.9M559.8 190.4h0.9M558.4 193.2h0.9M558.1 193h0.9M557.5 186.3h0.9M559.2 193.9h0.9M557.6 188.3h0.9M559.6 189.9h0.9M559.5 195.3h0.9M558.9 191.6h0.9M558.5 187.5h0.9M561.3 188.1h0.9M561.6 190.7h0.9M562.9 188h0.9M560.6 185.8h0.9M563.5 190.6h0.9M562.4 191.2h0.9"/>
<path stroke="#00ffa9" d="M362.1 221.6h0.9M365.8 225.5h0.9M361.8 222.5h0.9M364.2 225.4h0.9M364.9 222.2h0.9M364.2 226.6h0.9M364 226.7h0.9M367.1 223.6h0.9M365.9 225.6h0.9M363.9 222.4h0.9M362.6 220h0.9M363.7 222.3h0.9M365.2 225h0.9M363.1 223.1h0.9M366.9 223.3h0.9M366.8 224.3h0.9M366.9 223.8h0.9M362.9 223h0.9M365.9 221.9h0.9M364.5 224.9h0.9M364.8 222.4h0.9M364.5 224.5h0.9M363.7 225.9h0.9M363.5 222.3h0.9M364.6 222.2h0.9M364.5 221.6h0.9M363.6 219.6h0.9M363.5 221.7h0.9M366.1 221.8h0.9M362.3 223.6h0.9M364.1 219.7h0.9M362.8 224h0.9M365.2 222.7h0.9M365.4 222.3h0.9M367.8 225h0.9M364.2 223.5h0.9M363.9 224.7h0.9M363.1 225.2h0.9M363.5 223.8h0.9M366.3 226.6h0.9M368.1 226.8h0.9M367.9 226.3h0.9M367.1 226.6h0.9M367.3 225.8h0.9M365.2 229.1h0.9M365.2 227.9h0.9M365.9 227.2h0.9M367.3 227.9h0.9M365.5 226.8h0.9M368.8 227.3h0.9M368.2 226.2h0.9M365.5 228.1h0.9M366.6 226.9h0.9M363.5 197.2h0.9M338.5 233.4h0.9M343.4 230.4h0.9M344.1 234h0.9M339.3 234.7h0.9M338.1 234.1h0.9M346 232.9h0.9M337.7 233.6h0.9M345.1 231.8h0.9M341.6 232.7h0.9M342 232.7h0.9M344.1 234.2h0.9M347.6 233.7h0.9M345.4 232.2h0.9M338.5 235.1h0.9M336.4 234.5h0.9M337.2 233.9h0.9M337.5 234.8h0.9M336.1 233.7h0.9M345.1 231.8h0.9M338.6 232.3h0.9M345.3 233.1h0.9M342.4 231.5h0.9M340.5 232.5h0.9M347.6 233.7h0.9M338.9 233.8h0.9M337 235.5h0.9M347 231.4h0.9M338.6 232.3h0.9M346 233.7h0.9M344 233h0.9M342.2 233.7h0.9M339.3 232.6h0.9M336.7 235.8h0.9M346.2 232.3h0.9M338.7 232.4h0.9M342.1 233.9h0.9M347.7 232.4h0.9M346.3 233h0.9M336.2 233.6h0.9M347.6 233.5h0.9M338.2 233.5h0.9M298.2 243.3h0.9M299.4 244.1h0.9M300.3 246.3h0.9M300.8 246.7h0.9M300 246.2h0.9M300 246.4h0.9M300.8 245.5h0.9M297.7 243.7h0.9M300.4 244.9h0.9M299.6 245h0.9M298.5 244.8h0.9M294.5 251.5h0.9M292.6 252.9h0.9M294.3 247.5h0.9M282.5 258.1h0.9M283.1 255.6h0.9M288.1 252.7h0.9M289.3 251.7h0.9M292.2 248.1h0.9M286.8 259.2h0.9M293.2 250.1h0.9M297.1 250.7h0.9M293 250.6h0.9M291.9 250.5h0.9M417.5 168.6h0.9M469.3 124.1h0.9M467.7 127.1h0.9M468.8 128.9h0.9M469 126.5h0.9M468.7 126.6h0.9M487.3 134.2h0.9M487 133.8h0.9M487.1 132.1h0.9M485.3 134.1h0.9M485.5 132.5h0.9M486.4 138.1h0.9M485.1 136h0.9M484.7 137.1h0.9M503.3 153.9h0.9M505.2 154.9h0.9M502.9 156.2h0.9M505 153.8h0.9M504.3 151.5h0.9M483.2 138.9h0.9M483.7 141.6h0.9M541.4 211.5h0.9M534.4 213.3h0.9M535.3 214.7h0.9M537.3 214.5h0.9M543.6 212h0.9M543.5 215.7h0.9M545.2 212.7h0.9M540.6 212.8h0.9M538 214h0.9M549.2 196.5h0.9M550.4 201.5h0.9M551.5 203.5h0.9M549.7 198.9h0.9M547.4 195.5h0.9M547.4 193h0.9M551.3 192.3h0.9M552.6 196.4h0.9M551.7 195.3h0.9M552.6 198.8h0.9M550.3 192.4h0.9M553.4 195.6h0.9M554.1 198h0.9M552.4 200.6h0.9M554.5 191.8h0.9M555.6 193.3h0.9M553.5 190.3h0.9M557.3 187.9h0.9M560.3 194h0.9M558.4 188.5h0.9M556.9 189h0.9M559.6 194.1h0.9M557.5 184.1h0.9M558.8 191.7h0.9M562.4 189.3h0.9M562.2 186.5h0.9"/>
<path stroke="#00ffcb" d="M361.2 216.6h0.9M361.4 218.2h0.9M362.9 215.5h0.9M361.8 217.6h0.9M361.3 215.1h0.9M359.6 217.7h0.9M364.4 225h0.9M361.5 219h0.9M362.4 218.2h0.9M366.9 222.8h0.9M362.5 220.6h0.9M364.3 221h0.9M363.3 224h0.9M363.5 218.9h0.9M363.1 218.3h0.9M365.3 222.5h0.9M365.5 220.7h0.9M363.2 221.1h0.9M365.8 221.6h0.9M364.7 219.2h0.9M363.1 220h0.9M365.4 220.4h0.9M366.6 223.3h0.9M366.5 223h0.9M365.5 220h0.9M362.1 222.2h0.9M365.2 225.1h0.9M362.3 221.3h0.9M363.1 224.8h0.9M361.7 218.6h0.9M361.2 219.5h0.9M365.1 222h0.9M363.4 222.7h0.9M365.3 221.1h0.9M362 221.9h0.9M363 218.3h0.9M363.3 219.1h0.9M361.7 218.2h0.9M364 219.7h0.9M362.8 220.2h0.9M363.1 223h0.9M364.5 218.5h0.9M362.3 220.9h0.9M366.4 225.2h0.9M365.4 224h0.9M363.3 219.5h0.9M362.9 223.6h0.9M366.1 221.9h0.9M362.3 221.1h0.9M362.9 221.6h0.9M362.6 218.3h0.9M361.1 219.4h0.9M363.8 222.5h0.9M366 223.4h0.9M364.5 218h0.9M340.6 233.4h0.9M338.1 234h0.9M339.2 231.4h0.9M336.4 234.6h0.9M343.6 230.2h0.9M341.5 233.1h0.9M338.4 233.7h0.9M344.1 232.6h0.9M336.1 231.6h0.9M345.6 231.8h0.9M341.1 233.7h0.9M346.7 231.3h0.9M340.3 230.8h0.9M343.2 230.8h0.9M338.1 233.5h0.9M346.8 231.2h0.9M344.8 231.8h0.9M344 230.6h0.9M345.8 230.5h0.9M336.5 233.1h0.9M341.3 233.3h0.9M344.3 230.4h0.9M344.8 232.2h0.9M341 230.3h0.9M342.6 231.1h0.9M341.6 232.7h0.9M342.3 231.9h0.9M340.5 232h0.9M345.3 232.1h0.9M341.3 232.9h0.9M338 231.5h0.9M341.4 232.2h0.9M339.9 232.4h0.9M344.6 229.8h0.9M336.2 232.9h0.9M340.8 231.3h0.9M346.3 231.7h0.9M298.3 243.7h0.9M296.9 242.7h0.9M298 241h0.9M298.2 242.2h0.9M298.3 243.6h0.9M298.4 244.2h0.9M297.5 243.6h0.9M298.4 243.3h0.9M298.7 245h0.9M298.6 243.8h0.9M288.2 251.4h0.9M286.2 252.8h0.9M286 256.6h0.9M288.1 254.3h0.9M289.3 249.4h0.9M285.6 253h0.9M290.5 251.5h0.9M288.9 251.3h0.9M286 254.3h0.9M289.7 255h0.9M287.3 256.9h0.9M285.1 259.7h0.9M288.1 252.7h0.9M291.6 248.2h0.9M293.1 247.4h0.9M292.3 250.7h0.9M282 255.4h0.9M415.9 169.8h0.9M420 166.1h0.9M469.3 121.7h0.9M467.9 124.8h0.9M487.8 133h0.9M486.9 132.7h0.9M485.2 134.2h0.9M485 136.7h0.9M504.9 151.6h0.9M505.9 151.2h0.9M484.9 137.6h0.9M481.9 138.5h0.9M484.7 137.3h0.9M543 210.8h0.9M533.4 212.5h0.9M545.7 207.5h0.9M536.3 213.6h0.9M536.8 212.8h0.9M538.7 213.3h0.9M543.8 215.1h0.9M540.8 210.8h0.9M541.3 210.9h0.9M538.2 212.4h0.9M541.6 207.1h0.9M544 211.1h0.9M538.2 208.6h0.9M534.1 212.6h0.9M539.4 216.3h0.9M536 210.4h0.9M544 210.8h0.9M545 208.4h0.9M537 211.5h0.9M548.6 196.7h0.9M549.7 196h0.9M549 200.9h0.9M548.3 186.1h0.9M549.5 184h0.9M551 188.5h0.9M550.9 191.1h0.9M548.9 183.3h0.9M550.2 192h0.9M551.8 183.4h0.9M552.4 181.5h0.9M555.1 189.2h0.9M556.8 183.6h0.9M556.6 181.3h0.9"/>
<path stroke="#00ffed" d="M361.6 213.3h0.9M359.6 218.1h0.9M360.4 218.8h0.9M361.1 213.4h0.9M360 215.3h0.9M362.7 214.4h0.9M361 216.9h0.9M361.7 218.1h0.9M362.1 217.5h0.9M362 216.1h0.9M358.6 214.5h0.9M362.7 217.3h0.9M361.2 212.3h0.9M361.9 216.3h0.9M357.5 212.9h0.9M357.5 214h0.9M359.7 214.2h0.9M361.5 215.9h0.9M360.9 214.1h0.9M358.4 212.9h0.9M360 215.8h0.9M361.7 214.3h0.9M360.7 217.8h0.9M361.8 215.2h0.9M360.2 217.3h0.9M359.5 216.6h0.9M359.5 216.3h0.9M361.1 213.8h0.9M359.6 212.7h0.9M361.6 214.8h0.9M360.6 212.2h0.9M361.9 218.5h0.9M363.5 218.8h0.9M363.8 220.1h0.9M363.4 217.6h0.9M363.8 218.3h0.9M364.9 220.5h0.9M363.7 219.3h0.9M363 219.4h0.9M365 220.3h0.9M362.6 219.2h0.9M363.6 217.6h0.9M364.4 220.5h0.9M362.1 221h0.9M364.1 220.3h0.9M360.5 218.8h0.9M362.3 218.5h0.9M363.6 218.8h0.9M361.8 220.1h0.9M362.6 219.6h0.9M360.3 219h0.9M364.1 218.5h0.9M363 220.3h0.9M338.6 232.4h0.9M341.6 231.4h0.9M347.3 230h0.9M346.2 229.5h0.9M343.1 229.9h0.9M338 229.3h0.9M340.4 230.2h0.9M337.1 230.7h0.9M336.8 231.5h0.9M345.9 231.4h0.9M340 230.5h0.9M336.7 232.2h0.9M339 230.5h0.9M342.9 230.2h0.9M347.1 229.2h0.9M344.7 229.9h0.9M342.6 228.6h0.9M339.5 232.3h0.9M340.4 230.2h0.9M336.2 232.5h0.9M344.9 229.8h0.9M339.4 231.5h0.9M344.9 228.3h0.9M339.1 230.2h0.9M342.7 230h0.9M338.3 231.7h0.9M340.5 232.1h0.9M296.2 240.3h0.9M296.5 239.2h0.9M296.5 239.7h0.9M281.5 253.8h0.9M287.1 254.5h0.9M292.5 250.1h0.9M287.6 255.7h0.9M281.4 254.7h0.9M420.3 168.1h0.9M467.7 121.6h0.9M468.6 118.1h0.9M486.3 129.7h0.9M486.9 126h0.9M485.7 129.1h0.9M486.5 125.4h0.9M488.1 130.3h0.9M487.1 125.9h0.9M488.2 125.9h0.9M487.9 126h0.9M486 124.5h0.9M487 124.9h0.9M504 146.9h0.9M505.4 146.5h0.9M506.1 150.1h0.9M540.2 212.5h0.9M543.6 208.3h0.9M536.5 206.3h0.9M541 201.8h0.9M545.8 208.1h0.9M539.4 207.5h0.9M543.9 213.5h0.9M534.5 211.2h0.9M542.2 204.1h0.9M541.5 206.8h0.9M539.9 217.9h0.9M545.6 203.6h0.9M536.1 204.3h0.9M539.7 202.1h0.9M544.6 206.6h0.9M537 210.9h0.9M547.2 206.5h0.9M538.9 203.4h0.9M533.7 206.1h0.9M541.6 217.2h0.9M536.4 207.4h0.9M536 206.3h0.9M541.9 205.8h0.9M546 209.6h0.9M535.8 209.5h0.9M533.9 206h0.9M546 210.8h0.9M540.6 217.3h0.9M545.1 208.5h0.9M536.1 212.4h0.9M537.6 216.4h0.9M538.5 211.2h0.9M537.2 207h0.9M547.3 193.3h0.9M547.7 191.8h0.9M548.4 192.1h0.9M549.5 184.5h0.9M549.6 184.9h0.9M554.2 187.2h0.9M551.4 182.3h0.9M556.7 180.6h0.9M556.2 182.4h0.9"/>
<path stroke="#00eeff" d="M359.9 214.2h0.9M360 212.8h0.9M357.4 213.8h0.9M359.2 213.3h0.9M360.8 217.6h0.9M359.2 210.8h0.9M358.3 213.9h0.9M358.6 211.6h0.9M358.2 212.4h0.9M359.8 210h0.9M358.6 214.9h0.9M361.7 215.8h0.9M360.6 212.1h0.9M359.4 212.7h0.9M362.1 216.4h0.9M361.8 217.7h0.9M359 211.1h0.9M358.1 211h0.9M359.4 211.1h0.9M357.2 210.6h0.9M357.5 211.7h0.9M358.2 214.3h0.9M361.1 212.8h0.9M357.2 213h0.9M360.3 212.4h0.9M357.1 212.5h0.9M360.7 214.2h0.9M360.7 211.4h0.9M359.5 217h0.9M359.2 210.6h0.9M358.8 213.6h0.9M357.4 212.7h0.9M359.7 209.3h0.9M359.3 211.2h0.9M358.9 209.8h0.9M362.3 215.7h0.9M362.6 215.1h0.9M357.8 214.3h0.9M361.5 212.7h0.9M357.2 211.6h0.9M358.1 215.4h0.9M358.1 211.3h0.9M361 216.6h0.9M358.6 214.3h0.9M359 210.5h0.9M360.4 210.7h0.9M357.7 212h0.9M358.9 210.5h0.9M361.7 213.7h0.9M360.8 212.8h0.9M358.6 216h0.9M359.8 211.5h0.9M360.2 211.7h0.9M359.7 217h0.9M359.6 212.3h0.9M362.2 218.1h0.9M340.8 230.6h0.9M339.6 228.5h0.9M346 228.2h0.9M338.4 229.3h0.9M339.9 228h0.9M338.7 228.6h0.9M337.6 229h0.9M336.6 232.1h0.9M336.1 231h0.9M342 228.7h0.9M344.7 228.2h0.9M335.8 231.7h0.9M338.3 229.9h0.9M340.1 229.1h0.9M342.7 226.8h0.9M343.2 228.5h0.9M344.7 229.6h0.9M338.7 231.3h0.9M340.1 230.9h0.9M346.4 227.8h0.9M345.5 229h0.9M340.7 228.6h0.9M337.1 229h0.9M337.5 228.3h0.9M337.8 230.1h0.9M338.3 230.5h0.9M344.1 228.3h0.9M296.7 241.1h0.9M297 238.9h0.9M297.8 240.5h0.9M296.5 240.5h0.9M295.7 239.6h0.9M295.2 237.5h0.9M297.1 239.3h0.9M296.4 239.7h0.9M295.6 239.6h0.9M286.8 250.9h0.9M284.8 251.7h0.9M468.1 118.7h0.9M487.4 124.9h0.9M488.7 123.3h0.9M506.8 144.6h0.9M504.6 144.4h0.9M535.4 201.5h0.9M533.4 211.3h0.9M537.7 216.2h0.9M536.4 209.2h0.9M534.9 212.4h0.9M546 205.8h0.9M545.6 199.8h0.9M542.2 213.3h0.9M538.5 205.1h0.9M534.7 210.4h0.9M543.8 201.5h0.9M543 206.8h0.9M540.4 200.8h0.9M542.7 211.4h0.9M534 205.6h0.9M537.6 217.2h0.9M539.8 204.4h0.9M539.5 202.9h0.9M535 207.6h0.9M536.7 215h0.9M535.7 210.6h0.9M542.4 205.5h0.9M532.9 203.9h0.9M533 207h0.9M546.3 211.6h0.9M546.6 211.6h0.9M536.9 200.5h0.9M536.7 207.3h0.9M545.8 210.3h0.9M539.8 212.9h0.9M540.7 214h0.9M541 208.1h0.9M542 209h0.9M534.3 200.4h0.9M543.2 208.9h0.9M544.7 210.2h0.9M539.1 213.3h0.9M544.8 201.2h0.9M535 203.9h0.9M532.7 205.1h0.9M535.2 209h0.9M546.5 191.7h0.9M546.8 188.8h0.9M545.7 186.4h0.9M549.1 183.3h0.9"/>
<path stroke="#00cbff" d="M354.9 207.7h0.9M352.5 202.7h0.9M355.8 208.3h0.9M356 206.2h0.9M356.1 210h0.9M354.2 201.3h0.9M357.8 208.9h0.9M357.2 209.3h0.9M356.4 205.8h0.9M356.6 207.8h0.9M356.1 205.2h0.9M358.1 208.8h0.9M358.2 207.8h0.9M359.1 213.8h0.9M359.1 212.8h0.9M359.2 211h0.9M359.6 210.2h0.9M356.5 211.7h0.9M356.4 211.3h0.9M360.6 211h0.9M359.2 211.7h0.9M359.4 211.4h0.9M359 211h0.9M359.4 210h0.9M360.2 211h0.9M359.3 212h0.9M358.6 209.9h0.9M357.1 212.2h0.9M356.4 211.1h0.9M358.4 213.7h0.9M360.6 211.4h0.9M359.5 213.5h0.9M360.5 211.7h0.9M360.1 214h0.9M360 212.4h0.9M357.8 211.7h0.9M355.8 211.2h0.9M356 211h0.9M356.7 210.8h0.9M360.4 211.9h0.9M338.3 228.9h0.9M337.9 228h0.9M340.4 226.7h0.9M338.2 228h0.9M335.6 230h0.9M341.7 226.4h0.9M342.1 227.7h0.9M342.3 227h0.9M341.4 226.8h0.9M345.2 225.8h0.9M342 226.5h0.9M344.6 228.3h0.9M337.2 228.3h0.9M335.4 228h0.9M344.6 228.9h0.9M342.8 225.1h0.9M337 227.9h0.9M336.3 228.1h0.9M344.3 227.4h0.9M339.2 228.6h0.9M338.7 230.2h0.9M344.8 225h0.9M341.7 229.1h0.9M295.7 238.2h0.9M294.2 236h0.9M294.9 237.8h0.9M296.6 238.6h0.9M295 239h0.9M296.6 238.5h0.9M295 235h0.9M295.3 236.7h0.9M295.5 237.5h0.9M295.2 236.5h0.9M296.1 238.1h0.9M282 254.5h0.9M283.9 253.2h0.9M467.7 118.4h0.9M468.1 117.6h0.9M468.7 117.9h0.9M504.7 146.2h0.9M505.3 143.5h0.9M505.6 141.5h0.9M534.4 177.6h0.9M533.4 178h0.9M539 209.3h0.9M545.3 203.8h0.9M534 205.5h0.9M542.6 205.8h0.9M532.3 206.4h0.9M536.5 198.7h0.9M536.9 197.8h0.9M536.4 200.3h0.9M537.8 202.5h0.9M538.9 201.2h0.9M540 203.7h0.9M533.9 204.8h0.9M533.8 202.8h0.9M543.9 208.2h0.9M538.2 200.4h0.9M534.9 199.4h0.9M540.7 202.4h0.9M547.2 205.7h0.9M542.7 201.6h0.9M543.7 205.2h0.9M542.2 209.7h0.9M543.4 202.1h0.9M534.9 206.9h0.9M545.8 207.2h0.9M534.9 207.1h0.9M538.8 207.4h0.9M536 205.3h0.9M546.5 202.3h0.9M539.6 197.8h0.9M534.2 200.9h0.9M538.5 204.7h0.9M535.5 200.2h0.9M545.1 201h0.9M535.2 206.7h0.9M535.1 205.1h0.9M543.6 210.1h0.9M539 200.3h0.9M540.9 209.1h0.9M546.3 187.9h0.9M546.1 186h0.9M545.9 186.6h0.9"/>
<path stroke="#00a9ff" d="M346.5 194h0.9M348.9 197.5h0.9M355.2 205.2h0.9M352.8 201.9h0.9M351 197.1h0.9M349.6 198.5h0.9M348.4 195.9h0.9M351.7 197.8h0.9M354.7 207.6h0.9M357.4 206.8h0.9M351.7 201h0.9M354.3 201.8h0.9M356.6 210h0.9M357.9 207.4h0.9M350.1 198.5h0.9M352.1 203.4h0.9M350.4 198h0.9M355.3 203.7h0.9M352.4 201.5h0.9M350.2 195.4h0.9M352.5 200.2h0.9M353.7 203.9h0.9M353 203h0.9M351.7 198.5h0.9M353.3 202h0.9M349.4 199.4h0.9M355.4 208.1h0.9M354.5 206.2h0.9M357.9 208h0.9M351.6 202.7h0.9M354.2 203.5h0.9M351.8 201.7h0.9M351.6 200.3h0.9M353 201.9h0.9M357.2 211.1h0.9M345.6 226.2h0.9M335.5 227.5h0.9M338.2 227.9h0.9M343.8 225.7h0.9M335.4 227.5h0.9M344.4 223.5h0.9M346 224.5h0.9M345.8 225.3h0.9M337 226.1h0.9M335.7 228.6h0.9M337.8 226.7h0.9M337 226h0.9M342.6 227.6h0.9M338.8 226.4h0.9M344.7 224.2h0.9M345.6 226.7h0.9M336.7 226.5h0.9M342.5 227h0.9M335.9 228.9h0.9M338.3 225.3h0.9M341.2 227.4h0.9M342.2 226.5h0.9M336.4 228.8h0.9M346.3 227.1h0.9M340.4 225.6h0.9M343.5 224.9h0.9M339.6 225.3h0.9M336.2 227.4h0.9M345.2 225.1h0.9M337.1 228.6h0.9M335.6 226.9h0.9M295.4 236.3h0.9M294.3 235.8h0.9M294.8 235.4h0.9M293.7 234.1h0.9M294.8 234.5h0.9M294.7 237.6h0.9M294.3 234h0.9M293.5 234.8h0.9M294.5 236.5h0.9M294.7 236.7h0.9M293.5 233.8h0.9M298 257.5h0.9M298.3 259.8h0.9M468.8 114.6h0.9M469.4 114.2h0.9M504.8 142h0.9M507 142h0.9M505.6 144.2h0.9M534.9 180.5h0.9M531.4 175.6h0.9M535.1 175.1h0.9M532.9 175.8h0.9M538.6 172.1h0.9M536.8 174.9h0.9M534 172.5h0.9M532.3 175.7h0.9M532.3 174.4h0.9M531.9 177.7h0.9M531.6 180.8h0.9M535.4 174.4h0.9M538.2 176.4h0.9M534.6 175.5h0.9M535.9 177.3h0.9M537.5 174.9h0.9M539.8 175.8h0.9M535.3 173.2h0.9M532 175.2h0.9M533.9 202.9h0.9M538 199.9h0.9M532.1 206.6h0.9M539.6 199.8h0.9M537.7 199.3h0.9M537.7 198.1h0.9M536.2 200h0.9M546 204.4h0.9M538.7 199.8h0.9M541.4 204.2h0.9M541.8 198.8h0.9M543.5 205.9h0.9M540.3 197.6h0.9M541.9 197.6h0.9M535.8 208.8h0.9M535.8 207.3h0.9M535.5 202.1h0.9M539.1 204h0.9"/>
<path stroke="#0088ff" d="M336.9 178.8h0.9M347.2 190.7h0.9M342.7 185.5h0.9M343.7 187.4h0.9M343.3 183.5h0.9M342.6 182.7h0.9M345.1 188.6h0.9M348.3 193.1h0.9M343.3 186h0.9M346.4 194.4h0.9M343.9 190.2h0.9M347.1 190.2h0.9M342.1 182.8h0.9M348.1 191.9h0.9M345.2 189.1h0.9M341.9 182.4h0.9M345.6 190.4h0.9M347.6 191.9h0.9M341.4 185.8h0.9M346.1 189.2h0.9M342.9 184.3h0.9M348.5 192.4h0.9M341 185.6h0.9M346.9 191.2h0.9M341.6 184h0.9M342.7 182.9h0.9M344.9 188.9h0.9M346.3 191.7h0.9M342.8 187.8h0.9M349.9 196.4h0.9M348 194.1h0.9M354 201.6h0.9M354.5 201.8h0.9M347.9 194.4h0.9M349.2 196h0.9M349.2 196.5h0.9M352 200.1h0.9M353.4 202.2h0.9M351.4 199.3h0.9M353.3 204.6h0.9M349.4 197.6h0.9M350.2 197.9h0.9M351.9 200.1h0.9M350.9 199.9h0.9M351.8 202.1h0.9M347.3 194.5h0.9M351.3 201.2h0.9M350.3 199.6h0.9M351.9 198.3h0.9M354.8 202.6h0.9M350.2 199.8h0.9M353.5 203h0.9M355.4 206.4h0.9M339.7 223.8h0.9M341.1 224.8h0.9M336.1 225.6h0.9M339.4 225.6h0.9M337.1 226.6h0.9M336.5 226.9h0.9M344.3 222.5h0.9M343.5 223.2h0.9M338.4 226.6h0.9M342.5 225.6h0.9M336 225.5h0.9M344.9 223.5h0.9M340 226.9h0.9M345.6 224.1h0.9M338.2 224.7h0.9M337.3 227.5h0.9M345.5 224.2h0.9M335.5 225.2h0.9M341.2 225.9h0.9M336.9 227.7h0.9M343.3 223.7h0.9M338.4 225.2h0.9M337.7 226.5h0.9M344.7 224.9h0.9M336.5 226h0.9M338.6 224.7h0.9M335.5 226.2h0.9M344.7 223.3h0.9M340.7 226.2h0.9M338.9 226.6h0.9M345 224.1h0.9M335.2 224.6h0.9M337.9 225.5h0.9M295.4 236.1h0.9M293.5 235.1h0.9M292.2 233.2h0.9M294.5 235.6h0.9M294 233.8h0.9M294 234.5h0.9M292.3 248.6h0.9M296.1 253.4h0.9M299.5 261.9h0.9M297.5 258.7h0.9M296.3 255.8h0.9M292.9 250.4h0.9M296.5 255.6h0.9M298.6 260.6h0.9M292.5 248h0.9M300 261h0.9M298.6 258.2h0.9M299.7 259.9h0.9M469.4 111.4h0.9M468.4 112.4h0.9M468 111.9h0.9M469.3 109.7h0.9M504.7 140h0.9M506.6 139.7h0.9M506.5 140.7h0.9M536.7 176.8h0.9M534.3 175.6h0.9M539.3 169.1h0.9M534.6 173.2h0.9M532.6 177h0.9M533.1 173.9h0.9M536.6 170.7h0.9M537 173.3h0.9M532.7 173.9h0.9M536.3 180.6h0.9M536.2 170.3h0.9M536.4 175.8h0.9M536.6 176.5h0.9M537.1 178.4h0.9M537.1 177.1h0.9M537.6 173.7h0.9M537.1 174.7h0.9M533.6 177.1h0.9M533 173.3h0.9M533 201.8h0.9M539.5 202.2h0.9M534 201.3h0.9M538.2 197.4h0.9M537.1 196.8h0.9M544 198.2h0.9M533.9 202.8h0.9M543.2 199.4h0.9"/>
<path stroke="#0066ff" d="M337 178h0.9M338.8 178.8h0.9M334.3 177.3h0.9M337.8 179.8h0.9M336.9 176.9h0.9M335.5 174.2h0.9M337 179.2h0.9M335.5 175.5h0.9M339 180.3h0.9M338.3 181.1h0.9M335.4 171.7h0.9M338.4 179.8h0.9M339.3 177h0.9M336.7 177.7h0.9M334.6 173.8h0.9M339.1 179.4h0.9M337 178.3h0.9M336.7 178.2h0.9M337 174.6h0.9M339.1 179.8h0.9M338 175.9h0.9M340.9 183.7h0.9M344.8 188.2h0.9M344.1 185.2h0.9M346.4 191h0.9M345.3 191.5h0.9M343.4 188.9h0.9M343.9 190.1h0.9M341 181.1h0.9M346.1 193.4h0.9M346 189.5h0.9M343.1 183.7h0.9M346.7 189h0.9M346.6 191.7h0.9M343.6 184.8h0.9M349 193h0.9M348.4 191.9h0.9M339.1 181.6h0.9M341.3 183.9h0.9M339.9 182.2h0.9M347 189.6h0.9M347.6 195.6h0.9M349.1 196.3h0.9M348.7 197.2h0.9M348.7 195.5h0.9M348.5 193.9h0.9M349.8 195.3h0.9M343.1 223.9h0.9M336.5 226.4h0.9M336.4 223.1h0.9M341.9 221.6h0.9M336.1 226.6h0.9M341.6 223.7h0.9M336.2 225.6h0.9M342.7 224.3h0.9M339.5 223.9h0.9M336.2 223.9h0.9M342 223.1h0.9M344.9 223.1h0.9M341.5 222.3h0.9M341.6 223.5h0.9M342.8 222.4h0.9M336.9 223.7h0.9M338.7 225.4h0.9M342.4 221.2h0.9M342.7 223.5h0.9M340.2 223.6h0.9M292.2 232.4h0.9M294 233.3h0.9M292.1 231h0.9M292.9 234.4h0.9M292.7 232.7h0.9M293.2 233.5h0.9M293.1 233.5h0.9M293.2 231.2h0.9M291.9 233h0.9M292.8 232.3h0.9M292.7 233.4h0.9M292.3 231.9h0.9M292.6 232.5h0.9M295.9 254.3h0.9M294.9 251.5h0.9M293.3 249.1h0.9M296.2 253.3h0.9M292.6 249.5h0.9M468.3 106.5h0.9M468.2 109.1h0.9M506 136.4h0.9M505 138.1h0.9M504.9 139.1h0.9M506.1 139.8h0.9M505.4 135.3h0.9M534 172.4h0.9M529.7 176.2h0.9M532.3 174.6h0.9M537.2 173.4h0.9M532.3 173.2h0.9M535.2 175.1h0.9M538.6 174.2h0.9M537.1 168.2h0.9M532.6 171.7h0.9M530.3 170.7h0.9M531.4 173.7h0.9M534.3 171.5h0.9M537 173.8h0.9M532.2 169.6h0.9M530.9 170.3h0.9M539 172.5h0.9M534.5 172.9h0.9M533.9 168.5h0.9M536.4 171.5h0.9M531.5 172.2h0.9M536.5 173.4h0.9M530.9 172.3h0.9M533.4 170.5h0.9M535.1 174.5h0.9M532.5 171.4h0.9M535.9 172h0.9M532.7 170.7h0.9M530.8 174h0.9M540.1 176.7h0.9M535.9 172.7h0.9M536.7 197h0.9M538.8 196.8h0.9M544.1 198.1h0.9"/>
<path stroke="#0043ff" d="M329.3 168.2h0.9M329.3 168.2h0.9M328.1 166h0.9M327.2 162.9h0.9M329.1 168.6h0.9M327.9 165.6h0.9M328.2 168.2h0.9M333.6 175.3h0.9M332.8 170.9h0.9M330.6 169.6h0.9M333.9 174.4h0.9M338.2 177.6h0.9M333.6 174.3h0.9M336.3 175.1h0.9M338.4 178h0.9M333 173h0.9M331.5 172.8h0.9M334.6 174.1h0.9M337.4 180h0.9M333.1 172.3h0.9M334.3 175.7h0.9M334.5 176h0.9M336.9 177.2h0.9M338.5 177h0.9M338 179.5h0.9M335.3 172.5h0.9M335.4 173.4h0.9M340.7 179.5h0.9M335.9 177h0.9M337 173.9h0.9M332.5 170.4h0.9M340.9 179.9h0.9M334.1 173.1h0.9M336.8 177.3h0.9M340.2 179.8h0.9M335.4 174.2h0.9M338.7 176.8h0.9M335.2 174.2h0.9M338.8 180.9h0.9M336 177.5h0.9M337.7 176.3h0.9M339.5 179.6h0.9M336.1 177.3h0.9M336.3 172.3h0.9M340.4 179h0.9M337.7 179.6h0.9M337.5 178.8h0.9M342.4 182.2h0.9M338.9 182.3h0.9M339.6 182.1h0.9M340.5 183.3h0.9M342.8 182.8h0.9M340.6 184.6h0.9M339.6 183h0.9M341.9 182.6h0.9M341.6 186.6h0.9M341.7 183.3h0.9M340.7 183.8h0.9M341.7 185.9h0.9M345.3 186.6h0.9M342 221.3h0.9M340.8 223.1h0.9M341 223.4h0.9M335.7 222.7h0.9M343.5 222.3h0.9M343.2 222h0.9M335.2 222.5h0.9M335.7 223h0.9M342 221.3h0.9M342.8 221h0.9M339.9 222.2h0.9M344 221.9h0.9M340.6 222.2h0.9M337.9 223.6h0.9M339.9 222.4h0.9M343.8 222.2h0.9M341.2 223.6h0.9M339.3 223.8h0.9M340.3 224.4h0.9M335.4 224.7h0.9M291.2 229.3h0.9M290.7 230.4h0.9M291.7 229.6h0.9M292.2 231.5h0.9M291.1 231.1h0.9M292.8 230.7h0.9M292.3 232.4h0.9M292.3 230.7h0.9M290.8 230h0.9M292.4 229.7h0.9M291.3 231.4h0.9M292 230.5h0.9M290.6 229.9h0.9M291.5 231h0.9M291.1 230.4h0.9M290 243.3h0.9M290.2 242.2h0.9M292.1 248.2h0.9M290.6 243.1h0.9M291.8 245.6h0.9M292.6 249h0.9M291.9 245.8h0.9M469 104.6h0.9M469.4 104h0.9M468.7 105.8h0.9M507.6 136.7h0.9M505.2 136.9h0.9M507 138.5h0.9M538.8 173.7h0.9M536.4 169.1h0.9M530.3 170.4h0.9M529 167.3h0.9M534.7 170.3h0.9M532.5 168.5h0.9M531.2 173.6h0.9M536.9 173h0.9M533.7 172h0.9M535.4 169.4h0.9M533.9 167.5h0.9M536.5 171.7h0.9M536.3 174.1h0.9M538 169.9h0.9M533.8 172.4h0.9M534.6 167.7h0.9M535 166.4h0.9M533.1 170.1h0.9M537.5 172.6h0.9M535.5 168.6h0.9M538.8 168.8h0.9M535.1 167.9h0.9M533.6 164.8h0.9"/>
<path stroke="#0021ff" d="M328.9 166.4h0.9M335.4 175.6h0.9M333.2 173.7h0.9M335.5 171.2h0.9M334.3 169.8h0.9M333.4 170h0.9M335.2 170.6h0.9M332.6 171h0.9M336.2 174.4h0.9M336.2 172.5h0.9M335.7 174.8h0.9M334 173.6h0.9M333.5 171h0.9M333.7 172.6h0.9M334.3 172.8h0.9M332.8 171.5h0.9M334.4 172.7h0.9M337.6 222.2h0.9M343.4 221.7h0.9M341 221.9h0.9M334.9 223.5h0.9M336.3 222.9h0.9M343.8 221.9h0.9M336.7 222.4h0.9M291.3 229.6h0.9M290.1 228.8h0.9M291.1 228.5h0.9M291.3 229.5h0.9M291.5 229.3h0.9M290.5 228.4h0.9M290.6 229.4h0.9M291.4 230.6h0.9M290.7 230.1h0.9M291.4 229.1h0.9M290.5 228.7h0.9M288.1 238.3h0.9M291.4 245.7h0.9M285.9 235.5h0.9M291 246.7h0.9M287.8 239.5h0.9M291.3 246h0.9M285.7 235.9h0.9M286.7 236.8h0.9M285.5 236.1h0.9M469.2 101.4h0.9M469.1 102.7h0.9M534 170.8h0.9M538.1 163.8h0.9M528.7 169.3h0.9M534.5 167.5h0.9M535.1 167.1h0.9M536.9 164.9h0.9M531.4 165.4h0.9M530.9 166.3h0.9M533.6 170h0.9M530.5 167.6h0.9M533.9 167.6h0.9M530.2 165.8h0.9M533.7 167.4h0.9M531.2 165.9h0.9M537 163h0.9M527.4 167.2h0.9M534.2 170.9h0.9M529.1 172h0.9M533.9 169.5h0.9M532.4 168.9h0.9"/>
<path stroke="#0000ff" d="M318.9 153.2h0.9M325.2 163.1h0.9M320.8 158.3h0.9M324 159.1h0.9M324.6 159.6h0.9M323.1 161.3h0.9M326.1 163.8h0.9M320.3 159.1h0.9M324.7 161.1h0.9M319.5 157.4h0.9M322 158.4h0.9M318.5 155.5h0.9M322.2 158h0.9M328.5 165.3h0.9M321 155.7h0.9M328.5 167.7h0.9M325.4 165.1h0.9M329 166.1h0.9M329.7 169.9h0.9M330.9 168.5h0.9M290 228.4h0.9M291.5 227.8h0.9M293.1 243.3h0.9M290.5 242.2h0.9M293.1 246h0.9M292 246.3h0.9M290.3 242.8h0.9M288.9 242.7h0.9M286.8 237.6h0.9M287.1 239.2h0.9M286.8 238.2h0.9M469.7 98.4h0.9M469.4 103h0.9M535.2 167.3h0.9M532.2 164.6h0.9M528.2 167.8h0.9M531.9 163.5h0.9M533.4 166.9h0.9M534 165.8h0.9M532.1 164.3h0.9M532.9 167.5h0.9M530.6 168.2h0.9"/>
<path stroke="#1e00e5" d="M550 168.3h0.9M560.4 170.2h0.9M562.8 175.6h0.9M561.6 174.6h0.9M561.4 176.6h0.9M562.8 179.4h0.9M563.9 171.6h0.9"/>
<path stroke="#2100ff" d="M314.2 147h0.9M316.9 152.9h0.9M313 145.6h0.9M313.8 145.3h0.9M316.1 152.5h0.9M313.8 147h0.9M315.5 151.8h0.9M315.8 151.3h0.9M314.1 149.6h0.9M325.8 161.9h0.9M324.3 162.4h0.9M325 162.1h0.9M328.3 164.9h0.9M322.6 158.2h0.9M325.2 164.6h0.9M323.4 161.3h0.9M321.9 160.9h0.9M291.2 227.4h0.9M299.3 240.3h0.9M304.8 234.7h0.9M301.4 237.3h0.9M296.4 240.9h0.9M299.2 239.4h0.9M298.5 239h0.9M299.8 239h0.9M297.6 241.4h0.9M304.3 237.5h0.9M298.3 238.9h0.9M295.8 240.5h0.9M288.4 244h0.9M293.4 243.9h0.9M289.9 243.5h0.9M290.2 243.8h0.9M290.3 248.4h0.9M292.2 246.4h0.9M289.3 245.8h0.9M288.5 244.6h0.9M287.6 247.3h0.9M292 248.5h0.9M288.8 243.1h0.9M291.8 246.8h0.9M289 247.9h0.9M285.7 235.9h0.9M469.8 97.6h0.9M470.1 96.1h0.9M468.4 97.3h0.9M561.7 184.2h0.9M559.9 182.5h0.9M563.6 186.8h0.9M564.7 189.5h0.9M564.9 189.9h0.9"/>
<path stroke="#3d00e5" d="M514.8 131.8h0.9M515 139.8h0.9M520.3 136.8h0.9M517.3 136.6h0.9M515.3 135.5h0.9M512.3 128.1h0.9M520.1 136.7h0.9M520.8 138.8h0.9M524.5 144.8h0.9M533.3 151.1h0.9M536.8 155.3h0.9M532.7 152.1h0.9M537.9 152.9h0.9M531 146.8h0.9M538.7 159h0.9M537.3 151.3h0.9M536.7 156h0.9M529.8 149.1h0.9M538.4 156.8h0.9M538.3 156.7h0.9M538.3 152.5h0.9M547.5 160.7h0.9M542.5 161.5h0.9M541.9 162.2h0.9M542.2 156.5h0.9M541.6 156.4h0.9M547.2 167.8h0.9M548.8 167h0.9M542.4 161.7h0.9M541.2 159.8h0.9M545.7 165h0.9M549.1 168h0.9M555.8 166.3h0.9M546.8 164.2h0.9M552 168.2h0.9M540.7 160.1h0.9M543.3 161.1h0.9M541.7 164.3h0.9M538.3 160.8h0.9M550 169.5h0.9M556.3 165.6h0.9M543 156.1h0.9M540.8 162.1h0.9M540.3 162.4h0.9M542.9 163.9h0.9M540 161.7h0.9M551.3 165.1h0.9M543 161.7h0.9M556.6 169.1h0.9M542.8 163.7h0.9M565.1 175h0.9M557.5 168.9h0.9M563.7 177.6h0.9M563.8 177.1h0.9M559.2 177.3h0.9M562.7 171.3h0.9M560 172.5h0.9M562.5 173.8h0.9M558.9 170.3h0.9M561.2 176.2h0.9M561.4 179.2h0.9M559.1 170.8h0.9M560.4 178.6h0.9M563.5 176.8h0.9M559 171.2h0.9"/>
<path stroke="#4300ff" d="M310.2 142.2h0.9M309.2 140h0.9M317.1 149.3h0.9M314 144.3h0.9M315.1 149.2h0.9M312.7 144.9h0.9M315.3 150.3h0.9M316.4 151.4h0.9M317.1 150.2h0.9M314.9 148.7h0.9M319.7 157.4h0.9M318.8 156.4h0.9M297.8 240.9h0.9M298.4 238.9h0.9M309.4 233.3h0.9M304.9 237h0.9M305.2 237h0.9M316.8 228.7h0.9M313.5 230.6h0.9M323 225.4h0.9M315.2 230.3h0.9M300.9 237.5h0.9M313.5 232.5h0.9M296 240.7h0.9M299 239.4h0.9M318 228.2h0.9M304.5 235.6h0.9M309.5 234.7h0.9M306.5 234.2h0.9M309 233.9h0.9M319 227.7h0.9M298.8 238.8h0.9M314.1 230.5h0.9M297.4 239.4h0.9M297.8 240h0.9M310.8 233.9h0.9M305.1 235h0.9M309.1 233.4h0.9M311 232.7h0.9M316.7 229.9h0.9M303.2 235.7h0.9M314.2 229.5h0.9M309.5 232.7h0.9M287.9 242.4h0.9M288.6 247.9h0.9M287.3 244.2h0.9M285.8 250.6h0.9M287.7 249.1h0.9M287.5 251h0.9M285 245h0.9M282.7 247.8h0.9M289.1 250.4h0.9M284.4 243.3h0.9M286.6 250.7h0.9M290.5 251.7h0.9M284.7 247h0.9M284 245.8h0.9M284.3 248.8h0.9M286.7 248.4h0.9M287.9 251.2h0.9M288.8 249.1h0.9M289.6 245.1h0.9M288.4 252.6h0.9M291.8 249.8h0.9M469.4 96.4h0.9M468.9 94.7h0.9M468.7 91.9h0.9M469.7 97.1h0.9M561.1 177.4h0.9M562.7 186.9h0.9M561.2 181.6h0.9M563.1 187.1h0.9M559.8 180.2h0.9M560.6 179.9h0.9M563.7 185.9h0.9M559.1 175.9h0.9M561.2 181.8h0.9M563.3 187.5h0.9M558.1 178.4h0.9M559.4 178.8h0.9M555.2 172.3h0.9M564.9 185.2h0.9M556.4 174.8h0.9M563.9 189.8h0.9M561.3 181.2h0.9M558.2 171.9h0.9M562.5 178h0.9M560.9 177.9h0.9"/>
<path stroke="#5b00e5" d="M483.7 106.4h0.9M486.9 104.5h0.9M490.2 106.1h0.9M490 106.7h0.9M485.8 104.2h0.9M487.1 109.8h0.9M487.1 107.9h0.9M480.8 101h0.9M487 108.1h0.9M478.2 99.9h0.9M505.3 119.6h0.9M501.5 116.4h0.9M491 111.4h0.9M497.9 115.7h0.9M502.9 122.1h0.9M503.2 123.2h0.9M503.2 119h0.9M500.8 119.6h0.9M498.4 121h0.9M499.7 118h0.9M505.4 122.2h0.9M503.4 119.9h0.9M505.4 119.2h0.9M507 120.7h0.9M491.3 111.3h0.9M499.8 120.3h0.9M495.2 109.2h0.9M491.5 109.8h0.9M503.7 122.2h0.9M497 113h0.9M501.6 124.6h0.9M499.9 114.7h0.9M494.9 115.2h0.9M499.2 117h0.9M491.7 115.6h0.9M503.2 117.8h0.9M505 120.1h0.9M513.6 134.4h0.9M520.9 136.4h0.9M519.8 138h0.9M505.8 127h0.9M508.9 126.7h0.9M514.9 131.1h0.9M514.5 133.8h0.9M514.9 132h0.9M506.1 129.9h0.9M509.8 128.7h0.9M517.7 135.4h0.9M509.2 133.7h0.9M517.2 141.7h0.9M521.1 141.5h0.9M521.3 135.9h0.9M521.4 139.3h0.9M511.4 133.7h0.9M513.5 134.1h0.9M510.4 132.1h0.9M514.4 133.9h0.9M521.4 141.4h0.9M507.5 130.6h0.9M509.3 133.9h0.9M517.4 142.8h0.9M517.3 138.8h0.9M518 139.4h0.9M513.4 134.3h0.9M513.4 136.6h0.9M514 129.7h0.9M516 137.3h0.9M518.2 139.8h0.9M502.6 127.2h0.9M515.7 140.3h0.9M509.6 128.1h0.9M521.2 143.3h0.9M527.2 146.8h0.9M524.3 142.1h0.9M520.3 145.6h0.9M525 146.9h0.9M538.7 155.5h0.9M535.8 153.5h0.9M534.2 149.9h0.9M532.6 149.4h0.9M519.6 144.9h0.9M535.5 155.8h0.9M541 156.6h0.9M527.3 144.6h0.9M535.6 157.8h0.9M523.2 143.5h0.9M527 146.5h0.9M537.5 155.7h0.9M521.3 146.3h0.9M523.1 146.1h0.9M539.4 156.2h0.9M526.7 144.8h0.9M536.2 159.7h0.9M534.7 150h0.9M534 147.4h0.9M536.6 159.1h0.9M529.9 153.1h0.9M540.7 157h0.9M539.6 157.2h0.9M536.6 150.6h0.9M531.7 147.4h0.9M534.8 154.1h0.9M528.2 145.2h0.9M534.8 157.7h0.9M522.3 141.9h0.9M528.2 146.7h0.9M531.6 148.4h0.9M527.7 146.5h0.9M549.9 164.9h0.9M549.1 167.4h0.9M541.5 156.5h0.9M547.9 162.7h0.9M553.2 172.8h0.9M543.5 157.7h0.9M550.1 163.2h0.9M548.7 167.2h0.9M554.9 165.7h0.9M550.1 169.9h0.9M549.1 161.1h0.9M550.3 167.8h0.9M547.6 162.9h0.9M543.4 159.1h0.9M544.7 157.5h0.9M540.8 160.9h0.9M545.5 160.9h0.9M543.8 160.5h0.9M547.4 161.9h0.9M553.6 170.3h0.9M550.8 167.1h0.9M560.8 177.4h0.9M561.8 177.7h0.9M557.5 173.7h0.9M561.9 174.3h0.9M556.2 174.6h0.9M562.7 171.4h0.9"/>
<path stroke="#6500ff" d="M308.4 130.6h0.9M310.6 140.5h0.9M310.7 138.6h0.9M310.1 138.6h0.9M310.3 140h0.9M308.6 133h0.9M318.2 151.1h0.9M314 148.3h0.9M316.9 152.6h0.9M314.2 148.5h0.9M315.2 231.5h0.9M324.1 224.3h0.9M324.1 225.9h0.9M307.9 235.4h0.9M312.7 230.3h0.9M325.4 225.7h0.9M312.7 231.3h0.9M321.8 226h0.9M306.7 235.4h0.9M317.3 229.5h0.9M312.9 231.2h0.9M321.3 226.8h0.9M319.4 227.7h0.9M309.7 234.1h0.9M308.6 233.7h0.9M320.8 228.3h0.9M304.5 236.5h0.9M315.2 230.8h0.9M309.3 233.1h0.9M314.3 231.1h0.9M311.5 232.7h0.9M326.7 223.1h0.9M316.8 229h0.9M312.2 233h0.9M316.3 230.2h0.9M288.3 248.4h0.9M284.5 249.7h0.9M285.4 251.8h0.9M281.8 250.4h0.9M283.1 251.2h0.9M282.8 254h0.9M285.5 245.4h0.9M287.1 251.3h0.9M288 247.4h0.9M281.2 250.7h0.9M282.3 245.2h0.9M283.4 244.1h0.9M283.4 247.1h0.9M285.2 253.8h0.9M285 245h0.9M281.7 247.5h0.9M283.6 246.7h0.9M284.3 250.1h0.9M286.9 246.4h0.9M283.3 245.4h0.9M287 252.5h0.9M283.1 248.7h0.9M287.2 245.4h0.9M283.6 251.2h0.9M282.7 246.9h0.9M286.1 250.1h0.9M283.3 248.8h0.9M284.2 250.3h0.9M282 251.2h0.9M282.9 251.9h0.9M280.4 250.3h0.9M284.7 247h0.9M293.1 250.7h0.9M285.8 246.2h0.9M284.1 248.9h0.9M282.8 256h0.9M285 247.8h0.9M285.6 251.2h0.9M282.5 253.6h0.9M285.5 252.3h0.9M289.1 248.2h0.9M289.8 248.2h0.9M284.4 244.4h0.9M281.8 249.9h0.9M282.8 247h0.9M292.2 250.7h0.9M287.2 252.5h0.9M468.7 89.8h0.9M469.7 92h0.9M559.4 172.1h0.9M562.2 186h0.9M562.2 184.8h0.9M561 180h0.9M554.7 169.9h0.9M564.1 185.1h0.9M559.9 171.7h0.9M558.1 173.5h0.9M557.3 169.5h0.9M557.6 177.2h0.9M558.7 173.2h0.9M560.4 181.8h0.9M565 184.8h0.9M561.8 186.3h0.9M562.7 185.3h0.9M555.8 171.6h0.9M556.1 172.8h0.9M561.2 173.9h0.9M559.2 175.5h0.9M564.6 190.1h0.9M561.4 185.1h0.9M556.9 171.3h0.9M556.9 171.2h0.9M557.7 170.7h0.9"/>
<path stroke="#7a00e5" d="M483.3 105h0.9M478.1 99.8h0.9M484.3 104.5h0.9M484 107h0.9M489.2 107h0.9M489.4 101.4h0.9M479.9 98.9h0.9M481.7 96.5h0.9M480.6 96.6h0.9M482.7 103.8h0.9M482 96.4h0.9M478.3 99h0.9M480 97.5h0.9M491.3 105h0.9M483.7 105.5h0.9M484.5 98.3h0.9M485.2 105.4h0.9M481.7 100.5h0.9M483.1 105h0.9M489.5 111.4h0.9M495.7 109h0.9M496.6 117.7h0.9M495.1 113.7h0.9M499.2 112.2h0.9M491 108.9h0.9M502.5 124.3h0.9M500.8 117.1h0.9M499.5 114.8h0.9M503.6 122h0.9M497.3 116.8h0.9M493.6 108.7h0.9M502.4 117.9h0.9M493.3 115.1h0.9M504.7 121h0.9M498.7 113h0.9M501.5 115.4h0.9M500.1 113.2h0.9M496.1 109.5h0.9M498.6 121.4h0.9M491.5 110h0.9M493.6 117.6h0.9M491 113.6h0.9M504.7 119h0.9M510.2 127.1h0.9M522.3 139.1h0.9M505.8 124.3h0.9M510.8 134.8h0.9M513.6 131.9h0.9M504 125.7h0.9M515 140.3h0.9M514.8 133.3h0.9M510.1 128.6h0.9M511.6 128.8h0.9M518.5 133h0.9M507.6 125.8h0.9M514.9 137.5h0.9M520.5 139.5h0.9M505.3 127.3h0.9M514.5 132.5h0.9M509.7 126.3h0.9M512.7 127.1h0.9M519.9 134.7h0.9M506.2 130.3h0.9M537.1 151.3h0.9M536.1 149.9h0.9M527.4 146.1h0.9M528.5 146.4h0.9M524.4 146.8h0.9M531.8 156h0.9M534.7 157.2h0.9M526.8 146.2h0.9M522.1 147h0.9M524 146.9h0.9M534.3 149.6h0.9"/>
<path stroke="#8700ff" d="M312.6 140.9h0.9M310.2 141.1h0.9M311.8 142.5h0.9M311.1 136.7h0.9M307.8 134.9h0.9M312.4 140.4h0.9M308.5 130h0.9M307.1 130.8h0.9M305.4 129.8h0.9M309.8 139.6h0.9M310.6 140.8h0.9M313.4 144.9h0.9M313.5 146.9h0.9M315.2 146.4h0.9M313 144h0.9M313 146.1h0.9M321.6 226h0.9M324.1 224.7h0.9M323.7 224.7h0.9M320 227.7h0.9M322.2 227.5h0.9M322.6 227.3h0.9M326.1 225.3h0.9M326.6 224.6h0.9M284.2 246.4h0.9M277.7 254.4h0.9M282.6 252.9h0.9M278 247.3h0.9M282 247.6h0.9M283 253.7h0.9M288.4 253.4h0.9M281.6 248h0.9M286.4 253.8h0.9M285.4 251.4h0.9M279.5 247.5h0.9M278.2 249h0.9M278.9 251.4h0.9M282.4 254.2h0.9M281 252.8h0.9M278.7 250.6h0.9M282.8 246.4h0.9M283.3 248.2h0.9M286.8 248.4h0.9M282.7 252.6h0.9M284.4 243.6h0.9M283.8 250.1h0.9M285.6 252.7h0.9M283 249.4h0.9M282.5 251.3h0.9M283.8 243.8h0.9M280.7 252.5h0.9M281.9 249.4h0.9M281.7 251h0.9M286.8 248h0.9M286.4 250.7h0.9M284 247.8h0.9M285.5 254.1h0.9M286.6 251.4h0.9M283.7 251.5h0.9M482.6 101h0.9M476.7 94.4h0.9M478.4 97.7h0.9M482.3 101.5h0.9M479.5 98.7h0.9M479.8 94.5h0.9M482.5 98.8h0.9M478.7 100.2h0.9M486.1 107h0.9M488.5 107.6h0.9M485 109.5h0.9M490 109.1h0.9M560.1 179.6h0.9M556.7 168.4h0.9M560.4 176.3h0.9M560.4 177h0.9M556.4 168.7h0.9M557 174.5h0.9M558 169.3h0.9M561.4 175.6h0.9M561.4 180.9h0.9M558.3 168.8h0.9M561.8 176.5h0.9M562.1 179.9h0.9M557.1 170.9h0.9"/>
<path stroke="#9000d8" d="M271.8 207.2h0.9M269.3 215.5h0.9M244.7 220.6h0.9M285.2 211.2h0.9M259.5 208.9h0.9M269.4 216.1h0.9M271.9 217.4h0.9M250.7 210.6h0.9M252.4 211h0.9M281.8 207.1h0.9M286.1 205.4h0.9M249.7 211.8h0.9"/>
<path stroke="#9900e5" d="M305.4 126.5h0.9M303.8 120.6h0.9M310.4 125.1h0.9M301.5 123.9h0.9M311.5 121h0.9M305.8 125.6h0.9M304.8 126.6h0.9M303.1 123.8h0.9M314.7 114h0.9M315.3 109.2h0.9M308.5 113.3h0.9M311.3 116h0.9M321.3 112h0.9M316 114.1h0.9M311.2 115.8h0.9M318 108.5h0.9M321.6 110.6h0.9M313 114.8h0.9M321.5 113.5h0.9M315.8 112.6h0.9M309.9 115.9h0.9M313.3 112.7h0.9M320 115.3h0.9M319.1 111.8h0.9M322.8 112.3h0.9M314.8 110.5h0.9M318.3 108.9h0.9M313.4 115.2h0.9M331.1 108.8h0.9M328.7 103.7h0.9M336.3 108h0.9M321.8 107.1h0.9M330.8 105.7h0.9M322.4 107.1h0.9M331.8 102.4h0.9M330.9 107.9h0.9M323.5 104.7h0.9M327.5 110.3h0.9M321.1 107.5h0.9M332.5 105.3h0.9M330.7 110.8h0.9M326.9 105.7h0.9M324 105h0.9M339 99h0.9M339.8 100h0.9M338.8 102h0.9M334.9 98.1h0.9M347.9 97.5h0.9M346.2 101.5h0.9M338 97.5h0.9M345.1 101.3h0.9M340.5 102.1h0.9M346.3 101.3h0.9M339 106.3h0.9M351.2 102.4h0.9M341.5 98.5h0.9M349.1 100.6h0.9M348.5 98.4h0.9M341.6 104.8h0.9M347.7 102.6h0.9M364.4 92.9h0.9M355.1 93.3h0.9M352.8 100.6h0.9M362.1 90h0.9M358.6 96.8h0.9M358.1 92.1h0.9M350.9 93.7h0.9M362.7 92.5h0.9M350.7 94.2h0.9M353.1 92h0.9M356.8 93.7h0.9M360.9 90.1h0.9M351.9 92.7h0.9M356.6 95.8h0.9M358.2 92.2h0.9M357.7 93.4h0.9M356.4 89.7h0.9M362.3 92.5h0.9M359.1 93.2h0.9M361.1 98.1h0.9M360.4 93.6h0.9M376.5 91.7h0.9M364.4 86.7h0.9M369.5 88.1h0.9M364.6 86h0.9M371.5 93.9h0.9M378.2 82.4h0.9M364.7 91.4h0.9M377.4 82.6h0.9M378.1 88.9h0.9M368.1 87.6h0.9M377.1 80.8h0.9M373.7 92.7h0.9M376.8 87.6h0.9M366.1 86.1h0.9M380.2 90.5h0.9M375.1 86.5h0.9M367.4 94.4h0.9M366.1 88.2h0.9M376.5 92.1h0.9M376.7 81.2h0.9M375.1 92.1h0.9M377.6 85.4h0.9M378.3 90.8h0.9M374 89h0.9M368.4 86h0.9M365.2 85.9h0.9M373.5 84.2h0.9M379.1 80.8h0.9M387.2 83.6h0.9M382.8 86.1h0.9M384 84.1h0.9M386.4 86h0.9M390.4 80.2h0.9M384.5 83.2h0.9M390.4 77.2h0.9M382.4 88.9h0.9M383.1 87h0.9M381.1 81.4h0.9M385.7 81.3h0.9M381.8 88.1h0.9M389.2 80.7h0.9M384.1 78.8h0.9M386.4 87.5h0.9M383.5 88h0.9M409.9 72.9h0.9M404.5 76.9h0.9M408.9 79h0.9M404.6 80.7h0.9M408.5 75.5h0.9M396.4 79.2h0.9M435.2 70.4h0.9M425.1 74.9h0.9M408.3 93.5h0.9M412.7 90.7h0.9M421.9 80.6h0.9M404.5 93.9h0.9M424.9 84.4h0.9M428 81.4h0.9M412.5 84.6h0.9M408.3 84.9h0.9M432.6 75.8h0.9M428.7 82.5h0.9M434.1 69.8h0.9M410 89.3h0.9M435.9 70.2h0.9M404.6 86.2h0.9M484.7 105.7h0.9M486.5 98.5h0.9M483.9 96.9h0.9M486.1 109.1h0.9M491.6 104.8h0.9M492.4 105.4h0.9M484 104.3h0.9M484.3 102.8h0.9M485.8 99.8h0.9M494.4 113h0.9M495.5 110.3h0.9M503.9 119.8h0.9M492.8 109.9h0.9M490.2 113.1h0.9M505.4 125.6h0.9"/>
<path stroke="#aa00ff" d="M307.2 133.8h0.9M307.8 130.9h0.9M306.8 128h0.9M309 135.4h0.9M311.7 140.2h0.9M308.5 131.9h0.9M310.1 135h0.9M309.4 135.4h0.9M307.5 131.5h0.9M282.3 248.9h0.9M280.3 252.6h0.9M281.6 246.7h0.9M282.7 252.6h0.9M282.9 252.3h0.9M278.7 251.9h0.9M279.2 252.4h0.9M277.5 251.2h0.9M281.8 247.1h0.9M285.5 252.3h0.9M281 253h0.9M280 249.4h0.9M281 249.5h0.9M469.8 88.7h0.9M474.6 91.3h0.9M473.6 95.1h0.9M478.4 93.5h0.9M483.2 99.5h0.9M471.7 90.2h0.9M474 94h0.9M480.2 95.7h0.9M487.9 106.8h0.9M491.9 104.2h0.9M485.6 107.4h0.9M491.7 105.9h0.9M487.5 107.4h0.9M489.1 107h0.9M486.7 105.1h0.9M489.7 105.7h0.9M490.7 109.4h0.9M490.3 106.5h0.9M489.6 103.5h0.9M489.3 108.6h0.9M487 109.7h0.9M488.8 109.7h0.9M488.3 108.4h0.9M488.9 108.1h0.9M489.3 107.9h0.9M487 107.7h0.9M490 106.1h0.9M490.3 107.9h0.9M487.6 106.5h0.9M489.7 107.3h0.9M489.9 107.1h0.9M493 106.1h0.9M487.6 108.5h0.9M488.3 107.4h0.9M493.4 107.9h0.9M485.6 109.9h0.9M556.1 170.1h0.9M556.4 172h0.9M556.5 170.7h0.9"/>
<path stroke="#ad00d8" d="M284.2 204.5h0.9M259.6 216.7h0.9M277.1 212.5h0.9M266 215.4h0.9M261.3 218.9h0.9M257.6 214.4h0.9M251.2 214.9h0.9M250.6 216.6h0.9M263.4 209.7h0.9M272.3 208h0.9M283.1 213.1h0.9M262.1 210.2h0.9M284.5 203.4h0.9M252 221.2h0.9M263.1 208h0.9M266.6 217.2h0.9M275.5 207.8h0.9M275.1 211h0.9M245.7 218.8h0.9M246.2 212.6h0.9M264.5 217.5h0.9M288.3 212.9h0.9M266.9 214.2h0.9M280.2 212.6h0.9M253.6 216.3h0.9M267.4 206.5h0.9M268.3 215.9h0.9M256.3 211.1h0.9M250.1 217.6h0.9M261.9 207.7h0.9M248.6 216.1h0.9M262.3 209.6h0.9M285.1 203.1h0.9M284.3 213.5h0.9M266.6 217.8h0.9M252.3 210.3h0.9M249.8 222.9h0.9M259.6 221.1h0.9M260.8 209.2h0.9M256.7 221.5h0.9M282.1 203.7h0.9M263.2 220.4h0.9M286.7 214.1h0.9M274.5 214.3h0.9M243.6 221.1h0.9M262.6 220.7h0.9M260.7 210.3h0.9M255.5 209.4h0.9"/>
<path stroke="#b700e5" d="M303.9 122.1h0.9M305.7 126.6h0.9M308.4 128.7h0.9M302.5 123.5h0.9M307.1 117.8h0.9M307.7 120.5h0.9M308.4 120.5h0.9M308.1 121.5h0.9M311.3 122.5h0.9M308.6 118h0.9M309.3 122.1h0.9M313.9 122h0.9M305.1 118.5h0.9M305.7 123.8h0.9M303.6 124.4h0.9M306.6 116.7h0.9M308.2 117.9h0.9M306.3 124.8h0.9M302.2 121.7h0.9M318.7 112.6h0.9M311.2 113.5h0.9M312.8 114.7h0.9M314.1 109.6h0.9M324 113.3h0.9M319.7 112.1h0.9M321.4 116.3h0.9M311.3 113.9h0.9M323 113.7h0.9M320.8 116.2h0.9M321 109.3h0.9M322.8 111.5h0.9M322.6 111.5h0.9M312.6 113.5h0.9M320.1 109.5h0.9M319.9 116.8h0.9M334.9 103.6h0.9M327.1 101.8h0.9M322.2 104.1h0.9M324.3 108.5h0.9M329 104.5h0.9M332.8 104.7h0.9M334.6 108.6h0.9M330.6 105.8h0.9M331.5 104.7h0.9M330.8 110.8h0.9M322.1 105.5h0.9M325.2 110.9h0.9M327.2 112.7h0.9M323.9 108.2h0.9M325.3 104.8h0.9M329.9 100.4h0.9M325.9 102.4h0.9M323.7 111.4h0.9M325.1 113.6h0.9M324.6 112.9h0.9M324 104.6h0.9M321.3 106.8h0.9M327.5 103.5h0.9M333.1 103.6h0.9M333.2 103.2h0.9M333.9 109.7h0.9M334.6 106.1h0.9M321.8 105.1h0.9M335.5 107.6h0.9M341.2 97.3h0.9M341.3 100.8h0.9M338.2 97.6h0.9M339.6 102.7h0.9M347.1 100.8h0.9M348.5 94.6h0.9M343.4 95.3h0.9M348.9 99.8h0.9M346.1 95.4h0.9M344.2 103.8h0.9M335.1 99.2h0.9M338.7 105.8h0.9M345.2 101.1h0.9M341.1 95.6h0.9M346.5 99.3h0.9M343.7 95.4h0.9M345.2 96.4h0.9M349.6 98.1h0.9M343.4 102.4h0.9M337.2 99.8h0.9M336 100.4h0.9M343.1 100.1h0.9M348.2 95.4h0.9M339 105.5h0.9M336 102.9h0.9M339 97.9h0.9M339.6 100.3h0.9M355.9 91.9h0.9M365 96h0.9M360 93.1h0.9M361.4 88.8h0.9M354 94h0.9M362.7 89.8h0.9M354.4 96.7h0.9M364.7 97.4h0.9M360.1 92.7h0.9M351.8 97.3h0.9M353.1 95.5h0.9M364.8 95.6h0.9M348.4 93.4h0.9M362.4 92.4h0.9M360.7 95.1h0.9M354.1 97.8h0.9M349.8 93.2h0.9M358.3 99.7h0.9M355.4 101h0.9M352.3 91.5h0.9M349.8 96.2h0.9M358.3 91h0.9M362.8 90.4h0.9M366.5 87.7h0.9M370.6 94.3h0.9M365.8 88h0.9M372 93.1h0.9M374 82.3h0.9M378.5 89.3h0.9M376.4 81.2h0.9M372.9 85.4h0.9M377.8 90.7h0.9M369.1 86.9h0.9M377.8 88.7h0.9M368.5 88.4h0.9M364 88.5h0.9M363.6 87.5h0.9M371.2 90.2h0.9M377.4 90.1h0.9M372.5 86.8h0.9M368.1 94.6h0.9M371 85.9h0.9M372.9 91.7h0.9M368.5 91.2h0.9M368.5 93.4h0.9M383.1 80.2h0.9M380.4 79.2h0.9M380.4 85.4h0.9M389.3 76.5h0.9M381.3 84.4h0.9M393.2 84.9h0.9M391.3 81.6h0.9M386.3 86.3h0.9M383.9 85.9h0.9M380.7 85.4h0.9M387.4 82.5h0.9M383.4 82.7h0.9M385.8 84.4h0.9M383.3 78.2h0.9M384.8 80h0.9M383.5 78.9h0.9M384.3 78h0.9M381.9 86.9h0.9M384.3 78.1h0.9M392.3 85.5h0.9M387.7 87h0.9M380.2 83.2h0.9M408.2 73.3h0.9M407.7 73.4h0.9M401.2 84.2h0.9M412.1 74.5h0.9M406.8 78.3h0.9M425.3 78.9h0.9M413.5 82.1h0.9M410.3 88.7h0.9M409.7 89.5h0.9M405.2 86.5h0.9M437.1 76.1h0.9M409.5 83.3h0.9M422.8 79.4h0.9M409.4 89.5h0.9M420.7 84.7h0.9M411.9 87.6h0.9M427.1 80.6h0.9M430.5 80.5h0.9M430.3 77.6h0.9M407.1 94h0.9M429.3 78.8h0.9M428.6 73.4h0.9"/>
<path stroke="#cc00ff" d="M307.8 129h0.9M305.6 129.6h0.9M308.7 133.9h0.9M307.9 130.8h0.9M275.5 251.4h0.9M282 257h0.9M277.8 253.6h0.9M279.2 253.9h0.9M273.9 249.3h0.9M280.6 251.2h0.9M471.6 87.5h0.9M472.3 89h0.9M470.1 90.5h0.9M470.8 90.8h0.9M473.2 90.3h0.9M491.1 106.8h0.9M486.4 106.6h0.9M488.8 104.2h0.9"/>
<path stroke="#ca00d8" d="M259.3 219.9h0.9M261.2 216.8h0.9M255.4 213.5h0.9M268.1 206.7h0.9M261.6 209.8h0.9M276.8 210.5h0.9M249.4 220.2h0.9M268.7 209.7h0.9M265.8 208h0.9M271 216.9h0.9"/>
<path stroke="#d600e5" d="M307.5 125.7h0.9M307.6 121.2h0.9M308.7 122h0.9M307.5 119.2h0.9M305 125.5h0.9M313.2 124h0.9M301.8 123.4h0.9M311.6 124.3h0.9M310.5 126h0.9M307.8 124.1h0.9M315.7 108.8h0.9M321.9 114.9h0.9M314.5 120h0.9M312.9 113h0.9M324 113.1h0.9M324.3 114.6h0.9M318.6 110.3h0.9M310.2 114h0.9M317.7 108.5h0.9M320.9 110h0.9M331.9 110.2h0.9M332.7 108h0.9M325.8 112.6h0.9M331.1 111.2h0.9M337.1 105.8h0.9M329.8 110.9h0.9M324 104.9h0.9M331.3 100.5h0.9M327 108.1h0.9M341.3 106.3h0.9M342.8 97.7h0.9M347.9 99.7h0.9M343.6 103.9h0.9M338.1 102.5h0.9M349.7 100.5h0.9M360.5 98.2h0.9M353.9 97.1h0.9M349.9 95.5h0.9M349.6 97h0.9M363 96.5h0.9M358.1 96.6h0.9M359.8 90.7h0.9M369.1 86.5h0.9M377.8 91.7h0.9M367.9 86.7h0.9M362.7 87.5h0.9M369.2 92.6h0.9M368.5 87.4h0.9M373.5 93.1h0.9M372.1 86.5h0.9M368.8 88.7h0.9M364.6 88.2h0.9M382.6 81.7h0.9M386.5 86.4h0.9M383.5 83.8h0.9M388.5 78h0.9M383.1 87h0.9M399.4 78.5h0.9M406.4 76.1h0.9M406.1 78h0.9M406.8 73.3h0.9M402 80.8h0.9M420.6 86.7h0.9M437.8 75.7h0.9M402.7 95.6h0.9M401.8 90.8h0.9M430.3 80.4h0.9M411.5 89.7h0.9M430.1 75.2h0.9M413 83.7h0.9M440 71.2h0.9"/>
</g>
<path d="M410.9 260.5V234" stroke="#f01a10" stroke-width="1.8" fill="none"/>
<path d="M408 236.4l2.9-6.6 2.9 6.6z" fill="#f01a10"/>
<path d="M408.6 239.5l-1.4 6.5 2 3-3.5 6.5h2.5l1.6-4M409.6 249l3.6 7.5 2.6 3.5M409.8 241l1.6 7" stroke="#1a20e6" stroke-width="1" fill="none"/>
<path d="M401 236h1.1M403 240h1.1M405 238h1.1M402 243h1.1M404.5 244h1.1M406 241h1.1" stroke="#20c0a0" stroke-width="1.1"/>
</svg></div>
<svg class="a" style="left:232px;top:250px" width="6" height="8" viewBox="0 0 6 8"><path d="M4.6 1.6v4.6L1.8 3.9z" fill="#555"/></svg>
<svg class="a" style="left:568px;top:250px" width="6" height="8" viewBox="0 0 6 8"><path d="M1.6 1.6v4.6l2.8-2.3z" fill="#555"/></svg>
<div class="a" style="left:226.8px;top:107px;width:2px;height:8px;border-left:1px dotted #aaa"></div>
<div class="a" style="left:747px;top:250px;width:1px;height:7px;background:#999"></div>
<div class="a" style="left:373px;top:467.6px;width:5px;height:2px;border-top:1px dotted #aaa"></div>
<div class="hdr" style="left:579px;top:43px;width:168.5px"></div>
<div class="t hd" style="left:594.6px;top:43.80px;font-size:9.6px;letter-spacing:-0.404px;">Views</div>
<svg class="a" style="left:580.8px;top:46.4px" width="12" height="8" viewBox="0 0 12 8">
<path d="M0.6 1.2l3 2.6-3 2.6z" fill="#4a4a4a"/><rect x="3.6" y="1" width="7" height="5.6" rx="1" fill="#4a4a4a"/></svg>
<div class="a" style="left:737.8px;top:45.3px;width:7.4px;height:8.8px;background:#f5f4f3;border-radius:2px;border-bottom:1px solid #dddbd7"></div>
<svg class="a" style="left:737.8px;top:45.3px" width="7.4" height="9" viewBox="0 0 7.4 9"><path d="M1.700 2.200l4 4M5.700 2.200l-4 4" stroke="#484848" stroke-width="1.25"/></svg>
<div class="t " style="left:580.6px;top:62.80px;letter-spacing:-0.310px;">Type:</div>
<div class="btn" style="left:607.6px;top:61.6px;width:81.4px;height:14.8px"></div>
<div class="t " style="left:610.6px;top:62.80px;letter-spacing:0.067px;">Orbit (rviz)</div>
<svg class="a" style="left:679px;top:63px" width="7" height="12" viewBox="0 0 7 12"><path d="M1.700 4.700l1.800-2.200 1.800 2.200zM1.700 7.300l1.800 2.200 1.800-2.200z" fill="#4e4e4e"/></svg>
<div class="btn" style="left:694.2px;top:61.6px;width:51.4px;height:14.8px"></div>
<div class="t " style="left:710.0px;top:62.80px;letter-spacing:0.219px;">Zero</div>
<div class="a" style="left:579.4px;top:81.6px;width:168px;height:362.8px;background:#fff;border:1px solid #cfccc7"></div>
<div class="a" style="left:592px;top:82.4px;width:155px;height:12.4px;background:#b9ab9c"></div>
<div class="a" style="left:663px;top:82.4px;width:1px;height:361.2px;background:#e9e8e5"></div>
<div class="a" style="left:663px;top:82.4px;width:1px;height:12.4px;background:#a39484"></div>
<div class="t b" style="left:594.4px;top:82.80px;letter-spacing:-0.032px;">Current View</div>
<div class="t b" style="left:665.2px;top:82.80px;letter-spacing:0.015px;">Orbit (rviz)</div>
<div class="t " style="left:606.6px;top:94.63px;letter-spacing:-0.130px;">Near Clip ...</div>
<div class="t " style="left:665.2px;top:94.63px;letter-spacing:-0.377px;">0.01</div>
<div class="t " style="left:606.6px;top:106.47px;letter-spacing:0.021px;">Target Fra...</div>
<div class="t " style="left:665.2px;top:106.47px;letter-spacing:-0.234px;">&lt;Fixed Frame&gt;</div>
<div class="t " style="left:606.6px;top:118.30px;letter-spacing:-0.096px;">Distance</div>
<div class="t " style="left:665.2px;top:118.30px;letter-spacing:-0.201px;">14.5793</div>
<div class="t " style="left:606.6px;top:130.13px;letter-spacing:-0.402px;">Yaw</div>
<div class="t " style="left:665.2px;top:130.13px;letter-spacing:-0.201px;">3.13859</div>
<div class="t " style="left:606.6px;top:141.97px;letter-spacing:-0.054px;">Pitch</div>
<div class="t " style="left:665.2px;top:141.97px;letter-spacing:-0.173px;">1.1604</div>
<div class="t " style="left:606.6px;top:153.80px;letter-spacing:-0.083px;">Focal Point</div>
<div class="t " style="left:665.2px;top:153.80px;letter-spacing:-0.126px;">0.21004; 0.2241; ...</div>
<svg class="a" style="left:584px;top:84px" width="8" height="8" viewBox="0 0 8 8"><path d="M1.2 2.2h5.2L3.8 6z" fill="#555"/></svg>
<svg class="a" style="left:597px;top:155.8px" width="8" height="8" viewBox="0 0 8 8"><path d="M2.4 1.2v5.2L6 3.8z" fill="#777"/></svg>
<div class="btn" style="left:581.1px;top:449px;width:51.6px;height:15.8px"></div>
<div class="t " style="left:597.2px;top:450.60px;letter-spacing:-0.451px;">Save</div>
<div class="btn" style="left:637.4px;top:449px;width:51.5px;height:15.8px"></div>
<div class="t " style="left:646.9px;top:450.60px;letter-spacing:-0.337px;">Remove</div>
<div class="btn" style="left:694.2px;top:449px;width:51.5px;height:15.8px"></div>
<div class="t " style="left:703.7px;top:450.60px;letter-spacing:-0.423px;">Rename</div>
<div class="hdr" style="left:2px;top:470.4px;width:745.5px;height:13.2px"></div>
<div class="t hd" style="left:18.0px;top:471.00px;font-size:9.6px;letter-spacing:-0.092px;">Time</div>
<svg class="a" style="left:3.8px;top:472px" width="11" height="11" viewBox="0 0 11 11">
<circle cx="5.4" cy="5.4" r="4.3" fill="#fafafa" stroke="#3a3a3a" stroke-width="1.1"/><path d="M5.4 2.8v2.8h2.2" fill="none" stroke="#3a3a3a" stroke-width="0.9"/></svg>
<div class="a" style="left:737.8px;top:472.6px;width:7.4px;height:8.8px;background:#f5f4f3;border-radius:2px;border-bottom:1px solid #dddbd7"></div>
<svg class="a" style="left:737.8px;top:472.6px" width="7.4" height="9" viewBox="0 0 7.4 9"><path d="M1.700 2.200l4 4M5.700 2.200l-4 4" stroke="#484848" stroke-width="1.25"/></svg>
<div class="t " style="left:8.6px;top:490.20px;letter-spacing:-0.341px;">ROS Time:</div>
<div class="t " style="left:138.6px;top:490.20px;letter-spacing:-0.377px;">ROS Elapsed:</div>
<div class="t " style="left:282.2px;top:490.20px;letter-spacing:-0.165px;">Wall Time:</div>
<div class="t " style="left:412.6px;top:490.20px;letter-spacing:-0.085px;">Wall Elapsed:</div>
<div class="inp" style="left:55.0px;top:488.8px;width:79.2px;height:15.2px"></div>
<div class="t " style="left:58.4px;top:490.20px;letter-spacing:-0.095px;">1468629889.19</div>
<div class="inp" style="left:198.0px;top:488.8px;width:79.2px;height:15.2px"></div>
<div class="t " style="left:201.4px;top:490.20px;letter-spacing:0.094px;">106.89</div>
<div class="inp" style="left:329.0px;top:488.8px;width:79.2px;height:15.2px"></div>
<div class="t " style="left:332.4px;top:490.20px;letter-spacing:-0.095px;">1468629889.28</div>
<div class="inp" style="left:472.0px;top:488.8px;width:79.2px;height:15.2px"></div>
<div class="t " style="left:475.4px;top:490.20px;letter-spacing:0.094px;">106.81</div>
<div class="cb" style="left:668.2px;top:491.2px"></div>
<div class="t " style="left:682.0px;top:490.20px;letter-spacing:0.061px;">Experimental</div>
<div class="a" style="left:2px;top:509.4px;width:745.5px;height:1px;background:#e3e1de"></div>
<div class="btn" style="left:3.5px;top:511.7px;width:29.8px;height:14.3px"></div>
<div class="t " style="left:7.0px;top:512.80px;letter-spacing:-0.259px;">Reset</div>
<div class="t " style="left:708.6px;top:510.00px;letter-spacing:-0.007px;">11 fps</div>
<svg class="a" style="left:736px;top:517px" width="11" height="10" viewBox="0 0 11 10"><g fill="#d6d4d0"><rect x="8" y="7" width="1.3" height="1.3"/><rect x="5.5" y="7" width="1.3" height="1.3"/><rect x="8" y="4.5" width="1.3" height="1.3"/><rect x="3" y="7" width="1.3" height="1.3"/><rect x="5.5" y="4.5" width="1.3" height="1.3"/><rect x="8" y="2" width="1.3" height="1.3"/></g></svg>
</body></html>
